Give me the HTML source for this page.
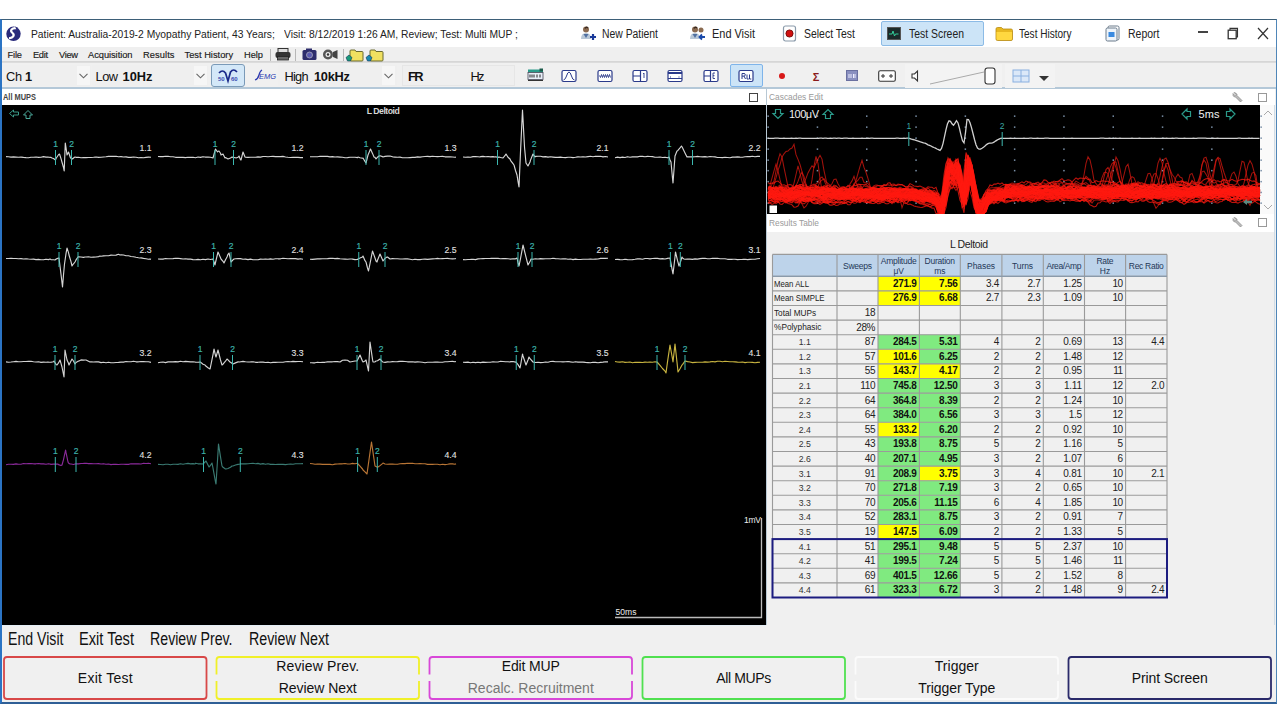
<!DOCTYPE html><html><head><meta charset="utf-8"><title>MUP</title><style>
*{box-sizing:border-box}
body{margin:0;width:1280px;height:720px;background:#fff;position:relative;overflow:hidden;font-family:"Liberation Sans",sans-serif;color:#000}
.a{position:absolute}
.t{position:absolute;white-space:nowrap;line-height:1}
svg{position:absolute;overflow:visible}
</style></head><body>
<div class="a" style="left:0px;top:19px;width:1277px;height:685px;background:#f0f0f0;border-top:1px solid #3d5f78;border-left:2px solid #2b74c4;border-right:1px solid #4f86b8;border-bottom:2px solid #2f5f96"></div>
<div class="a" style="left:2px;top:20px;width:1274px;height:27px;background:#fff"></div>
<svg style="left:5px;top:25px" width="17" height="17" viewBox="0 0 17 17">
<circle cx="8.5" cy="8.8" r="7.2" fill="#2a2b7c"/>
<path d="M11.5 3.2 C 7 2.5, 4.5 5.5, 7.5 8 C 10 10, 8 13.5, 4 13" stroke="#fff" stroke-width="2.2" fill="none"/>
<path d="M10 1.5 l3 1.2 -1.5 2z" fill="#2a2b7c"/>
</svg>
<div class="t" style="left:31.00px;top:28.20px;font-size:11.6px;color:#222;transform:scaleX(0.8882);transform-origin:0 0;">Patient: Australia-2019-2 Myopathy Patient, 43 Years;</div>
<div class="t" style="left:284.00px;top:28.20px;font-size:11.6px;color:#222;transform:scaleX(0.8874);transform-origin:0 0;">Visit: 8/12/2019 1:26 AM, Review; Test: Multi MUP ;</div>
<svg style="left:580px;top:25px" width="17" height="17" viewBox="0 0 17 17">
<circle cx="6" cy="4.5" r="3" fill="#8a6a50"/><path d="M5 3.5 q1-2 3-.5" stroke="#3a2a20" stroke-width="1.5" fill="none"/>
<path d="M1 14 q0-6 5-6 q5 0 5 6z" fill="#b8c8d8"/><path d="M3.5 9 l2.5 4 2.5-4" fill="#5070a0"/>
<path d="M10 12h6M13 9v6" stroke="#1a3a9a" stroke-width="2.2"/>
</svg>
<div class="t" style="left:602.00px;top:27.81px;font-size:12.3px;color:#222;transform:scaleX(0.8444);transform-origin:0 0;">New Patient</div>
<svg style="left:689px;top:25px" width="17" height="17" viewBox="0 0 17 17">
<circle cx="6" cy="4.5" r="3" fill="#8a6a50"/><path d="M5 3.5 q1-2 3-.5" stroke="#3a2a20" stroke-width="1.5" fill="none"/>
<path d="M1 14 q0-6 5-6 q5 0 5 6z" fill="#b8c8d8"/><path d="M3.5 9 l2.5 4 2.5-4" fill="#5070a0"/>
<path d="M16 12h-5M13 9.5l-2.5 2.5 2.5 2.5" stroke="#1a4aaa" stroke-width="1.8" fill="none"/><circle cx="12" cy="5" r="2.5" fill="#8a6a50"/>
</svg>
<div class="t" style="left:712.00px;top:27.81px;font-size:12.3px;color:#222;transform:scaleX(0.8899);transform-origin:0 0;">End Visit</div>
<svg style="left:782px;top:25px" width="16" height="18" viewBox="0 0 16 18">
<rect x="1.5" y="1" width="12" height="15" rx="2" fill="#fff" stroke="#8a9aaa" stroke-width="1.2"/>
<circle cx="7.5" cy="8.5" r="3.6" fill="#d01010" stroke="#600" stroke-width=".8"/></svg>
<div class="t" style="left:804.00px;top:27.81px;font-size:12.3px;color:#222;transform:scaleX(0.8509);transform-origin:0 0;">Select Test</div>
<div class="a" style="left:881px;top:21px;width:103px;height:25px;background:#cce4f7;border:1px solid #8cbbe6;border-radius:2px"></div>
<svg style="left:887px;top:27px" width="14" height="13" viewBox="0 0 14 13">
<rect x="0.5" y="0.5" width="13" height="12" fill="#1a2a2a" stroke="#555"/><path d="M2 7h3l1-3 1.5 5 1-2h3" stroke="#3c9" stroke-width="1" fill="none"/></svg>
<div class="t" style="left:908.50px;top:27.81px;font-size:12.3px;color:#222;transform:scaleX(0.8468);transform-origin:0 0;">Test Screen</div>
<svg style="left:995px;top:26px" width="18" height="15" viewBox="0 0 18 15">
<path d="M1 3 q0-1.5 1.5-1.5h4l1.5 1.5h8 q1.5 0 1.5 1.5v8.5 q0 1.5-1.5 1.5h-13.5 q-1.5 0-1.5-1.5z" fill="#e8b820" stroke="#b88a10" stroke-width=".8"/>
<path d="M1.5 6h15.5v6.5 q0 1.5-1.5 1.5h-12.5 q-1.5 0-1.5-1.5z" fill="#ffd840"/></svg>
<div class="t" style="left:1018.50px;top:27.81px;font-size:12.3px;color:#222;transform:scaleX(0.8172);transform-origin:0 0;">Test History</div>
<svg style="left:1105px;top:25px" width="17" height="17" viewBox="0 0 17 17">
<rect x="3" y="1" width="11" height="14" rx="1.5" fill="#fff" stroke="#6a7a8a" stroke-width="1"/>
<rect x="1" y="3" width="11" height="13" rx="1.5" fill="#eef4fa" stroke="#6a7a8a" stroke-width="1"/>
<rect x="3.5" y="7" width="6" height="5" fill="#3a8ae0"/></svg>
<div class="t" style="left:1127.50px;top:27.81px;font-size:12.3px;color:#222;transform:scaleX(0.8532);transform-origin:0 0;">Report</div>
<div class="a" style="left:1197.5px;top:31px;width:10.5px;height:1.6px;background:#444"></div>
<svg style="left:1227px;top:27px" width="12" height="13" viewBox="0 0 12 13">
<rect x="1.2" y="3.2" width="8" height="8.5" fill="none" stroke="#333" stroke-width="1.3"/>
<path d="M3 3.2v-1.8h7.5v8.5h-1.3" fill="none" stroke="#333" stroke-width="1.1"/></svg>
<svg style="left:1257px;top:27px" width="12" height="13" viewBox="0 0 12 13">
<path d="M1 1L11 12M11 1L1 12" stroke="#333" stroke-width="1.2"/></svg>
<div class="a" style="left:2px;top:47px;width:1274px;height:15px;background:#efefef;border-bottom:1px solid #d6d6d6"></div>
<div class="t" style="left:7.50px;top:50.54px;font-size:9.3px;color:#1a1a1a;letter-spacing:-0.162px;-webkit-text-stroke:0.15px #1a1a1a;">File</div>
<div class="t" style="left:33.00px;top:50.54px;font-size:9.3px;color:#1a1a1a;letter-spacing:-0.342px;-webkit-text-stroke:0.15px #1a1a1a;">Edit</div>
<div class="t" style="left:59.00px;top:50.54px;font-size:9.3px;color:#1a1a1a;letter-spacing:-0.330px;-webkit-text-stroke:0.15px #1a1a1a;">View</div>
<div class="t" style="left:88.00px;top:50.54px;font-size:9.3px;color:#1a1a1a;letter-spacing:-0.048px;-webkit-text-stroke:0.15px #1a1a1a;">Acquisition</div>
<div class="t" style="left:143.00px;top:50.54px;font-size:9.3px;color:#1a1a1a;letter-spacing:0.081px;-webkit-text-stroke:0.15px #1a1a1a;">Results</div>
<div class="t" style="left:184.50px;top:50.54px;font-size:9.3px;color:#1a1a1a;-webkit-text-stroke:0.15px #1a1a1a;">Test History</div>
<div class="t" style="left:244.00px;top:50.54px;font-size:9.3px;color:#1a1a1a;letter-spacing:-0.042px;-webkit-text-stroke:0.15px #1a1a1a;">Help</div>
<div class="a" style="left:269.5px;top:49px;width:1px;height:12px;background:#b8b8b8"></div>
<div class="a" style="left:295px;top:49px;width:1px;height:12px;background:#b8b8b8"></div>
<div class="a" style="left:343px;top:49px;width:1px;height:12px;background:#b8b8b8"></div>
<svg style="left:275px;top:48px" width="16" height="13" viewBox="0 0 16 13">
<rect x="3" y="0.5" width="10" height="4" fill="#ddd" stroke="#333" stroke-width="1"/>
<rect x="0.5" y="4" width="15" height="6" rx="2" fill="#333"/>
<rect x="2.5" y="8.5" width="11" height="3.5" fill="#666" stroke="#222" stroke-width=".8"/></svg>
<svg style="left:302px;top:48px" width="15" height="13" viewBox="0 0 15 13">
<rect x="0.5" y="2" width="14" height="10" rx="1.5" fill="#2c2c6c"/><rect x="4" y="0.5" width="6" height="3" fill="#2c2c6c"/>
<circle cx="7.5" cy="7" r="3" fill="#5a5ab0" stroke="#aab" stroke-width=".8"/></svg>
<svg style="left:322px;top:48px" width="16" height="13" viewBox="0 0 16 13">
<circle cx="6" cy="6.5" r="5" fill="#555"/><circle cx="6" cy="6.5" r="2.5" fill="#eee"/><circle cx="6" cy="6.5" r="1.2" fill="#333"/>
<path d="M11 4l4.5-2v9l-4.5-2z" fill="#444"/></svg>
<svg style="left:346px;top:48px" width="18" height="14" viewBox="0 0 18 14">
<path d="M4 3 q0-1 1-1h4l1 1.5h6 q1 0 1 1v7.5 q0 1-1 1h-11 q-1 0-1-1z" fill="#f0e060" stroke="#6a6a30" stroke-width="1"/>
<path d="M3 7l3 2.5-1.5 3.5h-3l-1.5-3.5z" fill="#1a9a7a" stroke="#135" stroke-width=".6"/></svg>
<svg style="left:366px;top:48px" width="18" height="14" viewBox="0 0 18 14">
<path d="M4 3 q0-1 1-1h4l1 1.5h6 q1 0 1 1v7.5 q0 1-1 1h-11 q-1 0-1-1z" fill="#f0e060" stroke="#6a6a30" stroke-width="1"/>
<path d="M3 7l3 2.5-1.5 3.5h-3l-1.5-3.5z" fill="#1a8ab0" stroke="#135" stroke-width=".6"/></svg>
<div class="a" style="left:2px;top:62px;width:1274px;height:27px;background:#f0f0f0;border-top:1px solid #dcdcdc;border-bottom:2px solid #b4c8d8"></div>
<div class="a" style="left:3px;top:65px;width:88px;height:21px;background:#efefef"></div>
<div class="a" style="left:76.5px;top:66px;width:13px;height:19px;background:#f6f6f6"></div>
<svg style="left:78.5px;top:73px" width="9" height="6" viewBox="0 0 9 6"><path d="M0.5 0.8l4 4 4-4" stroke="#666" fill="none" stroke-width="1.1"/></svg>
<div class="t" style="left:6.00px;top:70.58px;font-size:12.8px;color:#111;letter-spacing:-0.363px;">Ch</div>
<div class="t" style="left:24.88px;top:70.58px;font-size:12.8px;color:#111;font-weight:700;">1</div>
<div class="a" style="left:92px;top:65px;width:116px;height:21px;background:#efefef"></div>
<div class="a" style="left:194px;top:66px;width:13px;height:19px;background:#f6f6f6"></div>
<svg style="left:196px;top:73px" width="9" height="6" viewBox="0 0 9 6"><path d="M0.5 0.8l4 4 4-4" stroke="#666" fill="none" stroke-width="1.1"/></svg>
<div class="t" style="left:95.50px;top:70.58px;font-size:12.8px;color:#111;letter-spacing:-0.491px;">Low</div>
<div class="t" style="left:122.50px;top:70.58px;font-size:12.8px;color:#111;font-weight:700;letter-spacing:0.039px;">10Hz</div>
<div class="a" style="left:211px;top:64px;width:34px;height:23px;background:#d4e8f8;border:1px solid #7a9ab8;border-radius:3px"></div>
<svg style="left:215px;top:68px" width="26" height="15" viewBox="0 0 26 15">
<path d="M4 5 q3.5-4 6.5 0 l2.5 8 l2.5-9 q3-4 6.5 0" stroke="#1a2a8a" stroke-width="1.7" fill="none"/>
<text x="3" y="12.5" font-size="6" font-weight="700" font-family="Liberation Sans" fill="#3a4ab0">50</text><text x="16" y="12.5" font-size="6" font-weight="700" font-family="Liberation Sans" fill="#3a4ab0">60</text></svg>
<svg style="left:254px;top:69px" width="19" height="12" viewBox="0 0 19 12">
<path d="M1 11 q3-1 4-5 q1-4 3-5" stroke="#2a3ab0" stroke-width="1.3" fill="none"/>
<text x="5" y="9.5" font-size="7.5" font-style="italic" font-family="Liberation Sans" fill="#2a3ab0">EMG</text></svg>
<div class="a" style="left:278px;top:65px;width:119px;height:21px;background:#efefef"></div>
<div class="a" style="left:382px;top:66px;width:13px;height:19px;background:#f6f6f6"></div>
<svg style="left:384px;top:73px" width="9" height="6" viewBox="0 0 9 6"><path d="M0.5 0.8l4 4 4-4" stroke="#666" fill="none" stroke-width="1.1"/></svg>
<div class="t" style="left:284.50px;top:70.58px;font-size:12.8px;color:#111;letter-spacing:-0.775px;">High</div>
<div class="t" style="left:314.00px;top:70.58px;font-size:12.8px;color:#111;font-weight:700;letter-spacing:-0.250px;">10kHz</div>
<div class="a" style="left:402px;top:65px;width:113px;height:21px;background:#efefef;border:1px solid #e6e6e6"></div>
<div class="t" style="left:408.00px;top:70.58px;font-size:12.8px;color:#111;font-weight:700;letter-spacing:-1.563px;">FR</div>
<div class="t" style="left:470.50px;top:70.58px;font-size:12.8px;color:#111;letter-spacing:-1.644px;">Hz</div>
<svg style="left:527px;top:68px" width="17" height="14" viewBox="0 0 17 14">
<rect x="1" y="1.5" width="15" height="3" fill="#2a9a8a"/><rect x="12.5" y="0.5" width="3.5" height="3" fill="#1a5a4a"/>
<rect x="1" y="4.5" width="15" height="7" fill="#e8eef8" stroke="#445" stroke-width=".8"/>
<path d="M3 6.5v3M5 6.5v3M7 6.5v3M10 6.5v3M13 6.5v3" stroke="#222" stroke-width="1"/><path d="M1 12.5h15" stroke="#333" stroke-width="1"/></svg>
<svg style="left:561px;top:69px" width="16" height="14" viewBox="0 0 16 14"><rect x="1" y="1.5" width="14" height="11" rx="1.5" fill="#fff" stroke="#2a3a8a" stroke-width="1.2"/><path d="M2.5 11 q2-0.5 3-4 q1.2-4 2.5-4 q1.3 0 2.5 4 q1 4 3 4" stroke="#2a3a8a" fill="none" stroke-width="1"/></svg>
<svg style="left:597px;top:69px" width="16" height="14" viewBox="0 0 16 14"><rect x="1" y="1.5" width="14" height="11" rx="1.5" fill="#fff" stroke="#2a3a8a" stroke-width="1.2"/><path d="M2.5 6.5l1 2 1-3 1 3 1-3 1 3 1-3 1 3 1-3 1 3 1-3 1 3" stroke="#2a3a8a" fill="none" stroke-width=".9"/></svg>
<svg style="left:632px;top:69px" width="16" height="14" viewBox="0 0 16 14"><rect x="1" y="1.5" width="14" height="11" rx="1.5" fill="#fff" stroke="#2a3a8a" stroke-width="1.2"/><path d="M8.5 1.5v11M1 7h7.5" stroke="#2a3a8a" stroke-width="1.2"/><path d="M11 5l1-1v5" stroke="#2a3a8a" stroke-width=".9" fill="none"/></svg>
<svg style="left:667px;top:69px" width="16" height="14" viewBox="0 0 16 14"><rect x="1" y="1.5" width="14" height="11" rx="1.5" fill="#fff" stroke="#2a3a8a" stroke-width="1.2"/><path d="M1 4h14" stroke="#2a3a8a" stroke-width="2"/><path d="M1 9.5h14" stroke="#2a3a8a" stroke-width="1"/><path d="M3.5 7.5v1M12 7.5v1" stroke="#2a3a8a" stroke-width="1"/></svg>
<svg style="left:703px;top:69px" width="16" height="14" viewBox="0 0 16 14"><rect x="1" y="1.5" width="14" height="11" rx="1.5" fill="#fff" stroke="#2a3a8a" stroke-width="1.2"/><path d="M7.5 1.5v11M1 7h6.5" stroke="#2a3a8a" stroke-width="1.2"/><path d="M12 4h-2v5.5h2M10 6.7h1.5" stroke="#2a3a8a" stroke-width=".9" fill="none"/></svg>
<div class="a" style="left:730px;top:64px;width:33px;height:23px;background:#cce4f7;border:1px solid #7eb4ea;border-radius:2px"></div>
<svg style="left:738px;top:69px" width="16" height="14" viewBox="0 0 16 14"><rect x="1" y="1.5" width="14" height="11" rx="1.5" fill="#fff" stroke="#2a3a8a" stroke-width="1.2"/><path d="M4 10V4.5h2q1.3 0 1.3 1.3t-1.3 1.3h-2M6 7.1l1.5 2.9M9 5.5v4.5h1.8M11.5 5.5v4.5h1.8" stroke="#2a3a8a" stroke-width="1" fill="none"/></svg>
<div class="a" style="left:778.5px;top:73px;width:6px;height:6px;background:#d81818;border-radius:50%"></div>
<div class="t" style="left:812.70px;top:71.70px;font-size:11px;color:#8a1a1a;font-weight:700;">Σ</div>
<svg style="left:846px;top:70px" width="12" height="11" viewBox="0 0 12 11"><rect x="0.5" y="0.5" width="11" height="10" fill="#8a90c0" stroke="#6a70a0"/><path d="M3 4v4M5 4v4M7.5 4v4M9 4v4" stroke="#eef" stroke-width="1"/></svg>
<svg style="left:878px;top:70px" width="18" height="12" viewBox="0 0 18 12"><rect x="0.7" y="0.7" width="16.6" height="10.6" rx="1.5" fill="#fff" stroke="#333" stroke-width="1.1"/><path d="M3 6h4M5 4v4M11 6h4M13 4v4" stroke="#333" stroke-width="1"/></svg>
<div class="a" style="left:905px;top:64px;width:97px;height:24px;background:#f3f3f3"></div>
<svg style="left:911px;top:70px" width="8" height="12" viewBox="0 0 8 12"><path d="M1 4h2.5l3-3v10l-3-3h-2.5z" fill="#fff" stroke="#333" stroke-width="1.1"/></svg>
<svg style="left:928px;top:67px" width="70" height="19" viewBox="0 0 70 19"><path d="M2 17L56 5" stroke="#aaa" stroke-width="1"/><rect x="57" y="1" width="10" height="16" rx="2.5" fill="#fff" stroke="#333" stroke-width="1.1"/></svg>
<div class="a" style="left:1005px;top:64px;width:50px;height:24px;background:#f3f3f3"></div>
<svg style="left:1012px;top:69px" width="18" height="14" viewBox="0 0 18 14"><rect x="1" y="1" width="16" height="12" fill="#dbe8f8" stroke="#8ab0e0" stroke-width="1"/><path d="M1 7h16M9 1v12" stroke="#8ab0e0" stroke-width="1"/></svg>
<svg style="left:1039px;top:76px" width="10" height="6" viewBox="0 0 10 6"><path d="M0 0h10l-5 5z" fill="#333"/></svg>
<div class="a" style="left:2px;top:89px;width:764px;height:16px;background:#fff"></div>
<div class="t" style="left:3.30px;top:92.62px;font-size:8.5px;color:#444;font-weight:700;transform:scaleX(0.8734);transform-origin:0 0;">All MUPS</div>
<div class="a" style="left:748.5px;top:92.5px;width:9px;height:9px;background:#fff;border:1px solid #444"></div>
<div class="a" style="left:766px;top:89px;width:1px;height:536px;background:#b8c8d4"></div>
<div class="a" style="left:767px;top:89px;width:508px;height:16px;background:#fff"></div>
<div class="t" style="left:768.60px;top:92.59px;font-size:9px;color:#9a9a9a;transform:scaleX(0.9305);transform-origin:0 0;">Cascades Edit</div>
<svg style="left:1232px;top:91px" width="12" height="12" viewBox="0 0 12 12"><path d="M2 1.5l2 2-1 1-2-2q-0.5 2.5 1.5 3.5l1 0 5 5 1.5-1.5-5-5 0-1q-1-2-3-2z" fill="#bbb" stroke="#888" stroke-width=".7"/></svg>
<div class="a" style="left:1257.5px;top:92.5px;width:9px;height:9px;background:#fff;border:1px solid #999"></div>
<div class="a" style="left:2px;top:105px;width:764px;height:520px;background:#000"></div>
<svg style="left:0;top:0" width="40" height="125" viewBox="0 0 40 125">
<path d="M9.5 113.5l4-3.5v2h5v3h-5v2z" fill="none" stroke="#3a9a88" stroke-width="1"/>
<path d="M28 110.5l4.5 4.5h-2.5v3.5h-4v-3.5h-2.5z" fill="none" stroke="#4aa89a" stroke-width="1"/>
</svg>
<div class="t" style="left:366.80px;top:106.75px;font-size:8.7px;color:#d8d8d8;font-weight:700;letter-spacing:-0.507px;">L Deltoid</div>
<svg style="left:0;top:0" width="1280" height="720" viewBox="0 0 1280 720">
<polyline points="6.0,156.6 8.5,156.8 11.0,157.1 13.5,156.9 16.0,157.1 18.5,157.3 21.0,157.1 23.5,157.4 26.0,157.6 28.5,157.7 31.0,157.2 33.5,157.3 36.0,157.0 38.5,157.4 41.0,157.2 43.5,156.6 46.0,157.1 48.0,157.0 48.5,157.1 51.0,157.4 52.0,158.0 53.5,158.5 55.5,160.0 56.0,158.5 58.5,154.7 59.5,154.0 61.0,158.6 62.5,164.0 63.5,167.5 64.2,171.0 65.3,143.0 66.0,147.5 67.0,155.0 68.5,152.0 70.5,158.0 71.0,158.1 72.5,159.0 73.5,158.0 75.0,157.0 76.0,157.3 78.5,157.3 81.0,157.7 83.5,157.5 86.0,157.6 88.5,157.5 91.0,157.5 93.5,157.3 96.0,157.0 98.5,157.4 101.0,157.2 103.5,157.0 106.0,156.8 108.5,156.4 111.0,156.3 113.5,156.4 116.0,156.2 118.5,156.8 121.0,156.6 123.5,157.0 126.0,156.9 128.5,157.4 131.0,157.4 133.5,157.0 136.0,157.2 138.5,157.8 141.0,157.5 143.5,157.8 146.0,157.4 148.5,157.1 151.0,157.3" fill="none" stroke="#d4d4d4" stroke-width="1.15" stroke-linejoin="round"/>
<line x1="55.5" y1="150" x2="55.5" y2="165" stroke="#3cb8b0" stroke-width="1"/>
<line x1="71.5" y1="150" x2="71.5" y2="165" stroke="#3cb8b0" stroke-width="1"/>
<polyline points="158.0,156.5 160.5,156.6 163.0,156.6 165.5,156.3 168.0,156.3 170.5,156.7 173.0,156.7 175.5,157.3 178.0,157.3 180.5,157.4 183.0,157.4 185.5,157.6 188.0,157.2 190.5,157.4 193.0,157.2 195.5,157.7 198.0,157.0 200.5,157.4 203.0,156.7 205.0,157.0 205.5,157.1 208.0,157.0 210.5,157.3 213.0,158.0 215.5,149.0 217.5,152.0 218.0,151.4 219.0,151.0 220.5,153.2 221.0,155.0 223.0,154.0 225.0,158.0 225.5,157.6 228.0,159.0 230.5,158.0 232.0,157.0 233.0,157.4 235.5,157.8 236.0,158.0 238.0,157.3 239.0,156.0 240.5,159.7 241.0,160.0 243.0,152.0 245.0,157.0 245.5,157.2 248.0,157.4 250.5,157.2 253.0,157.2 255.5,157.3 258.0,156.9 260.5,157.1 263.0,156.5 265.5,156.5 268.0,156.8 270.5,156.5 273.0,156.4 275.5,156.6 278.0,156.5 280.5,156.6 283.0,156.4 285.5,157.0 288.0,157.3 290.5,157.5 293.0,157.4 295.5,157.3 298.0,157.4 300.5,157.6 303.0,157.6" fill="none" stroke="#d4d4d4" stroke-width="1.15" stroke-linejoin="round"/>
<line x1="215" y1="150" x2="215" y2="165" stroke="#3cb8b0" stroke-width="1"/>
<line x1="233.5" y1="150" x2="233.5" y2="165" stroke="#3cb8b0" stroke-width="1"/>
<polyline points="310.0,156.7 312.5,156.8 315.0,156.7 317.5,156.8 320.0,156.3 322.5,156.3 325.0,156.3 327.5,156.4 330.0,156.9 332.5,156.6 335.0,157.0 337.5,156.9 340.0,157.1 342.5,157.3 345.0,157.7 347.5,157.6 350.0,157.2 352.5,157.3 355.0,157.2 357.5,157.6 358.0,157.0 360.0,157.8 362.5,158.2 363.0,158.0 365.0,161.5 366.0,163.0 367.5,157.0 368.0,155.0 370.0,150.2 370.5,149.0 372.5,153.4 374.0,157.0 375.0,157.4 376.0,159.0 377.5,157.2 379.0,156.0 380.0,155.8 382.5,156.6 383.0,157.0 385.0,156.4 387.5,156.1 390.0,156.0 392.5,156.8 393.0,157.0 395.0,157.1 397.5,157.2 400.0,157.1 402.5,157.7 405.0,157.7 407.5,157.8 410.0,157.6 412.5,157.4 415.0,157.4 417.5,156.9 420.0,157.1 422.5,156.8 425.0,156.5 427.5,156.4 430.0,156.6 432.5,156.3 435.0,156.5 437.5,156.6 440.0,156.5 442.5,156.4 445.0,156.8 447.5,156.8 450.0,156.9 452.5,157.0 455.0,157.2 456.0,157.1" fill="none" stroke="#d4d4d4" stroke-width="1.15" stroke-linejoin="round"/>
<line x1="366" y1="150" x2="366" y2="165" stroke="#3cb8b0" stroke-width="1"/>
<line x1="379" y1="150" x2="379" y2="165" stroke="#3cb8b0" stroke-width="1"/>
<polyline points="463.0,157.0 465.5,157.3 468.0,157.1 470.5,157.2 473.0,156.6 475.5,156.5 478.0,156.7 480.0,157.0 480.5,156.6 483.0,156.4 485.5,156.7 488.0,156.5 490.5,156.9 493.0,156.6 495.0,157.0 495.5,156.8 498.0,157.4 499.0,157.0 500.5,157.5 503.0,158.0 505.5,154.9 506.0,154.0 508.0,157.2 510.0,159.0 510.5,160.3 513.0,163.7 514.0,165.0 515.5,170.5 517.0,175.0 518.0,181.4 519.0,187.0 520.5,152.0 522.5,110.0 523.0,119.1 524.5,147.0 525.5,157.7 526.0,163.0 528.0,166.0 530.0,162.0 530.5,160.1 533.0,154.0 535.0,157.0 535.5,156.4 538.0,156.2 540.5,156.3 543.0,156.9 545.5,156.6 548.0,157.1 550.5,156.8 553.0,157.1 555.5,157.4 558.0,157.4 560.5,157.1 563.0,157.5 565.5,157.6 568.0,157.3 570.5,157.2 573.0,157.6 575.5,157.3 578.0,156.9 580.5,157.0 583.0,156.7 585.5,157.0 588.0,156.6 590.5,156.3 593.0,156.7 595.5,156.2 598.0,156.4 600.5,156.3 603.0,156.9 605.5,156.5 608.0,157.0" fill="none" stroke="#d8d8d8" stroke-width="1.15" stroke-linejoin="round"/>
<line x1="497.5" y1="150" x2="497.5" y2="165" stroke="#3cb8b0" stroke-width="1"/>
<line x1="534" y1="150" x2="534" y2="165" stroke="#3cb8b0" stroke-width="1"/>
<polyline points="615.0,157.8 617.5,157.1 620.0,157.6 622.5,157.1 625.0,157.5 627.5,156.7 630.0,157.2 632.5,156.9 635.0,156.9 637.5,156.9 640.0,156.3 642.5,156.4 645.0,156.7 647.5,156.4 650.0,156.5 652.5,156.6 655.0,157.2 657.5,157.3 660.0,157.0 662.5,157.5 665.0,157.2 667.5,157.8 669.0,157.0 670.0,160.0 671.0,162.0 672.5,178.1 673.0,183.0 675.0,156.0 677.0,151.0 677.5,150.8 680.0,147.9 681.5,146.0 682.5,147.8 685.0,153.0 687.0,157.0 687.5,156.8 690.0,156.8 692.5,156.9 695.0,156.7 697.5,156.4 700.0,156.8 702.5,156.9 705.0,156.6 707.5,157.0 710.0,156.5 712.5,156.7 715.0,156.9 717.5,157.5 720.0,157.5 722.5,157.6 725.0,157.3 727.5,157.5 730.0,157.7 732.5,157.1 735.0,157.1 737.5,156.9 740.0,157.1 742.5,157.2 745.0,156.8 747.5,156.6 750.0,156.6 752.5,156.3 755.0,156.8 757.5,156.4 760.0,156.4" fill="none" stroke="#d4d4d4" stroke-width="1.15" stroke-linejoin="round"/>
<line x1="669" y1="150" x2="669" y2="165" stroke="#3cb8b0" stroke-width="1"/>
<line x1="692.5" y1="150" x2="692.5" y2="165" stroke="#3cb8b0" stroke-width="1"/>
<polyline points="6.0,258.5 8.5,258.5 11.0,258.4 13.5,258.5 16.0,258.5 18.5,258.8 21.0,258.6 23.5,259.0 26.0,258.7 28.5,259.0 31.0,259.2 33.5,259.1 36.0,259.6 38.5,259.4 41.0,259.7 43.5,259.8 46.0,259.2 48.5,259.6 50.0,259.0 51.0,259.6 53.5,259.8 55.0,260.0 56.0,259.1 58.5,258.0 59.0,258.0 61.0,274.3 62.5,287.0 63.5,274.9 64.5,264.0 66.0,253.7 67.0,248.0 68.5,252.6 69.0,255.0 71.0,261.7 72.0,266.0 73.5,263.8 75.0,262.0 76.0,259.9 78.0,257.0 78.5,256.7 81.0,257.0 83.5,257.4 85.0,257.0 86.0,257.0 88.5,256.8 91.0,257.3 93.5,257.1 96.0,257.0 98.5,256.6 100.0,256.0 101.0,256.2 103.5,255.9 106.0,255.8 108.5,255.7 111.0,255.1 113.5,255.3 116.0,255.1 118.5,254.3 120.0,255.0 121.0,254.9 123.5,255.0 126.0,255.7 128.5,255.8 131.0,256.5 133.5,256.7 136.0,257.3 138.5,257.8 140.0,258.0 141.0,257.9 143.5,258.4 146.0,258.8 148.5,259.2 150.0,259.0 151.0,259.4" fill="none" stroke="#d4d4d4" stroke-width="1.15" stroke-linejoin="round"/>
<line x1="59" y1="252" x2="59" y2="267" stroke="#3cb8b0" stroke-width="1"/>
<line x1="78" y1="252" x2="78" y2="267" stroke="#3cb8b0" stroke-width="1"/>
<polyline points="158.0,259.0 160.5,259.1 163.0,259.1 165.5,258.5 168.0,258.7 170.5,258.7 173.0,258.6 175.5,258.3 178.0,258.3 180.5,258.6 183.0,259.0 185.5,258.8 188.0,259.1 190.5,259.1 193.0,259.6 195.5,259.7 198.0,259.4 200.5,259.8 203.0,259.2 205.5,259.6 208.0,259.0 210.5,259.5 213.0,259.0 215.0,265.0 215.5,262.5 218.0,252.0 220.5,257.7 221.0,259.0 223.0,261.3 224.0,263.0 225.5,259.8 227.0,257.0 228.0,254.3 229.0,253.0 230.5,259.3 231.0,262.0 233.0,259.8 234.0,259.0 235.5,258.7 238.0,258.6 240.5,258.6 243.0,259.3 245.5,259.1 248.0,259.6 250.5,259.1 253.0,259.7 255.5,259.7 258.0,259.8 260.5,259.1 263.0,259.3 265.5,259.0 268.0,259.3 270.5,258.9 273.0,259.2 275.5,258.7 278.0,258.8 280.5,258.8 283.0,258.3 285.5,258.5 288.0,258.8 290.5,258.6 293.0,258.6 295.5,258.6 298.0,259.1 300.5,258.8 303.0,259.3" fill="none" stroke="#d4d4d4" stroke-width="1.15" stroke-linejoin="round"/>
<line x1="213.5" y1="252" x2="213.5" y2="267" stroke="#3cb8b0" stroke-width="1"/>
<line x1="231" y1="252" x2="231" y2="267" stroke="#3cb8b0" stroke-width="1"/>
<polyline points="310.0,259.2 312.5,259.4 315.0,259.1 317.5,258.9 320.0,258.9 322.5,258.8 325.0,258.7 327.5,258.6 330.0,258.4 332.5,258.3 335.0,258.6 337.5,258.4 340.0,258.8 342.5,259.0 345.0,259.1 347.5,259.3 350.0,259.0 352.0,259.0 352.5,259.1 355.0,259.6 357.5,259.5 358.0,259.0 360.0,258.1 362.5,256.9 363.0,256.0 365.0,260.7 366.0,262.0 367.5,268.0 368.5,271.0 370.0,263.6 372.5,251.0 375.0,258.0 376.0,261.0 377.0,262.0 377.5,260.2 380.0,254.0 382.5,259.8 383.0,261.0 385.0,258.4 387.0,257.0 387.5,257.0 390.0,259.0 392.5,258.6 395.0,258.7 397.5,258.7 400.0,259.0 402.5,259.0 405.0,258.9 407.5,258.9 410.0,259.3 412.5,259.7 415.0,259.2 417.5,259.6 420.0,259.6 422.5,259.2 425.0,259.1 427.5,259.4 430.0,259.1 432.5,258.9 435.0,258.8 437.5,258.4 440.0,258.7 442.5,258.6 445.0,258.5 447.5,258.4 450.0,258.8 452.5,258.9 455.0,258.8 456.0,258.5" fill="none" stroke="#d4d4d4" stroke-width="1.15" stroke-linejoin="round"/>
<line x1="358.75" y1="252" x2="358.75" y2="267" stroke="#3cb8b0" stroke-width="1"/>
<line x1="385" y1="252" x2="385" y2="267" stroke="#3cb8b0" stroke-width="1"/>
<polyline points="463.0,259.6 465.5,259.7 468.0,259.5 470.5,259.4 473.0,259.2 475.5,259.6 478.0,258.9 480.5,258.7 483.0,258.6 485.5,258.5 488.0,258.5 490.5,258.4 493.0,258.2 495.5,258.4 498.0,258.4 500.5,258.7 503.0,258.5 505.5,258.6 508.0,258.8 510.0,259.0 510.5,259.1 513.0,258.8 515.5,258.8 517.0,258.0 518.0,262.7 519.0,266.0 520.5,258.6 523.0,245.0 525.5,255.2 528.0,265.0 530.5,260.4 531.0,259.0 533.0,259.3 534.0,259.0 535.5,258.9 538.0,259.0 540.5,258.6 543.0,258.9 545.5,258.8 548.0,258.7 550.5,258.8 553.0,258.3 555.5,258.6 558.0,258.8 560.5,259.0 563.0,258.9 565.5,258.8 568.0,259.3 570.5,259.0 573.0,259.6 575.5,259.1 578.0,259.5 580.5,259.5 583.0,259.2 585.5,259.3 588.0,259.2 590.5,259.0 593.0,259.2 595.5,259.1 598.0,259.0 600.5,258.4 603.0,258.2 605.5,258.4 608.0,258.2" fill="none" stroke="#d4d4d4" stroke-width="1.15" stroke-linejoin="round"/>
<line x1="518" y1="252" x2="518" y2="267" stroke="#3cb8b0" stroke-width="1"/>
<line x1="532" y1="252" x2="532" y2="267" stroke="#3cb8b0" stroke-width="1"/>
<polyline points="615.0,259.5 617.5,259.4 620.0,259.6 622.5,259.7 625.0,259.3 627.5,259.6 630.0,259.7 632.5,259.6 635.0,259.3 637.5,258.9 640.0,258.9 642.5,259.2 645.0,258.5 647.5,258.5 650.0,258.9 652.5,258.5 655.0,258.3 657.5,258.4 660.0,258.9 662.5,258.6 665.0,259.0 667.5,258.4 670.0,258.0 672.5,271.7 673.0,274.0 675.0,257.0 675.5,252.0 677.5,260.4 679.0,266.0 680.0,263.2 682.0,257.0 682.5,258.1 684.0,259.0 685.0,259.2 687.5,259.1 690.0,259.1 692.5,259.4 695.0,258.9 697.5,259.1 700.0,258.6 702.5,258.4 705.0,258.3 707.5,258.7 710.0,258.8 712.5,258.3 715.0,258.4 717.5,258.3 720.0,258.8 722.5,258.7 725.0,258.8 727.5,259.3 730.0,259.3 732.5,259.3 735.0,259.2 737.5,259.6 740.0,259.5 742.5,259.4 745.0,259.2 747.5,259.6 750.0,259.4 752.5,259.2 755.0,259.2 757.5,258.8 760.0,258.5" fill="none" stroke="#d4d4d4" stroke-width="1.15" stroke-linejoin="round"/>
<line x1="670.4" y1="252" x2="670.4" y2="267" stroke="#3cb8b0" stroke-width="1"/>
<line x1="680.3" y1="252" x2="680.3" y2="267" stroke="#3cb8b0" stroke-width="1"/>
<polyline points="6.0,361.9 8.5,362.2 11.0,362.0 13.5,361.7 16.0,361.4 18.5,361.8 21.0,361.7 23.5,361.5 26.0,361.5 28.5,361.4 31.0,361.3 33.5,361.7 36.0,362.0 38.5,361.8 41.0,362.4 43.5,362.1 46.0,362.2 48.0,362.0 48.5,362.1 51.0,362.3 53.5,361.7 54.0,361.0 56.0,364.4 57.0,365.0 58.5,362.9 60.0,360.0 61.0,363.4 62.0,367.0 63.5,374.5 64.0,377.0 65.0,350.0 66.0,355.0 67.0,360.0 68.5,363.3 69.0,365.0 71.0,361.0 72.0,359.0 73.5,361.0 75.0,364.0 76.0,362.5 78.5,361.1 79.0,361.0 81.0,359.9 83.5,360.1 85.0,360.0 86.0,360.0 88.5,361.2 90.0,362.0 91.0,361.7 93.5,362.0 96.0,361.9 98.5,361.9 101.0,362.6 103.5,362.3 106.0,362.7 108.5,362.3 111.0,362.8 113.5,362.7 116.0,362.5 118.5,362.4 121.0,362.1 123.5,362.1 126.0,361.5 128.5,361.7 131.0,361.8 133.5,361.3 136.0,361.8 138.5,361.8 141.0,361.5 143.5,361.6 146.0,361.7 148.5,361.8 151.0,362.4" fill="none" stroke="#d4d4d4" stroke-width="1.15" stroke-linejoin="round"/>
<line x1="55" y1="355" x2="55" y2="370" stroke="#3cb8b0" stroke-width="1"/>
<line x1="75" y1="355" x2="75" y2="370" stroke="#3cb8b0" stroke-width="1"/>
<polyline points="158.0,362.8 160.5,362.2 163.0,362.0 165.5,362.6 168.0,361.9 170.5,361.7 173.0,361.9 175.5,361.6 178.0,361.9 180.5,361.3 183.0,361.8 185.5,361.4 188.0,361.6 190.5,361.9 193.0,361.9 195.0,362.0 195.5,362.2 198.0,362.2 200.0,362.0 200.5,362.1 203.0,364.3 205.0,365.0 205.5,365.8 208.0,367.7 210.0,369.0 210.5,366.8 213.0,354.7 214.0,349.0 215.5,355.5 216.0,357.0 218.0,350.0 220.5,360.0 222.0,365.0 223.0,364.2 225.5,361.2 227.0,359.0 228.0,359.9 230.0,362.0 230.5,362.2 233.0,364.0 235.5,362.9 238.0,361.9 240.0,362.0 240.5,361.8 243.0,361.4 245.5,361.8 248.0,362.0 250.5,361.9 253.0,361.7 255.5,362.3 258.0,362.3 260.5,362.1 263.0,362.1 265.5,362.5 268.0,362.2 270.5,362.8 273.0,362.4 275.5,362.4 278.0,362.2 280.5,362.2 283.0,362.3 285.5,361.7 288.0,361.6 290.5,361.7 293.0,361.4 295.5,361.6 298.0,361.5 300.5,361.5 303.0,361.7" fill="none" stroke="#d4d4d4" stroke-width="1.15" stroke-linejoin="round"/>
<line x1="200" y1="355" x2="200" y2="370" stroke="#3cb8b0" stroke-width="1"/>
<line x1="232.5" y1="355" x2="232.5" y2="370" stroke="#3cb8b0" stroke-width="1"/>
<polyline points="310.0,362.7 312.5,362.8 315.0,362.8 317.5,362.2 320.0,362.5 322.5,362.3 325.0,362.3 327.5,361.9 330.0,361.8 332.5,361.8 335.0,361.6 337.5,361.6 340.0,362.0 342.5,360.2 345.0,360.0 347.5,360.2 350.0,362.0 352.5,361.5 355.0,361.0 357.0,361.0 357.5,360.0 360.0,355.0 362.5,361.2 363.0,362.0 365.0,360.9 366.0,360.0 367.5,366.7 368.5,371.0 370.0,342.0 372.5,359.4 373.0,362.0 375.0,361.9 376.0,361.0 377.5,360.8 380.0,359.0 382.5,361.8 383.0,362.0 385.0,362.4 387.5,361.9 390.0,362.0 392.5,361.6 395.0,361.7 397.5,361.6 400.0,361.4 402.5,361.2 405.0,361.5 407.5,361.8 410.0,361.8 412.5,361.8 415.0,362.1 417.5,361.9 420.0,362.0 422.5,362.2 425.0,362.7 427.5,362.3 430.0,362.2 432.5,362.2 435.0,362.1 437.5,362.1 440.0,362.2 442.5,362.3 445.0,361.8 447.5,361.7 450.0,361.5 452.5,361.4 455.0,361.7 456.0,361.5" fill="none" stroke="#d4d4d4" stroke-width="1.15" stroke-linejoin="round"/>
<line x1="357" y1="355" x2="357" y2="370" stroke="#3cb8b0" stroke-width="1"/>
<line x1="381" y1="355" x2="381" y2="370" stroke="#3cb8b0" stroke-width="1"/>
<polyline points="463.0,362.2 465.5,362.4 468.0,362.1 470.5,362.7 473.0,362.2 475.5,362.6 478.0,362.2 480.5,362.6 483.0,362.1 485.5,362.4 488.0,362.3 490.5,362.2 493.0,361.8 495.5,362.0 498.0,362.0 500.5,361.3 503.0,361.5 505.5,361.8 508.0,361.7 510.0,362.0 510.5,361.6 513.0,361.5 515.5,362.1 516.0,362.0 518.0,364.6 520.0,368.0 520.5,365.5 522.5,354.0 523.0,356.0 525.5,363.5 526.0,365.0 528.0,360.0 529.0,357.0 530.5,359.2 533.0,362.0 535.5,362.5 538.0,362.3 540.5,362.6 543.0,362.5 545.5,362.0 548.0,362.2 550.5,361.5 553.0,361.4 555.5,361.7 558.0,361.7 560.5,361.7 563.0,361.9 565.5,361.8 568.0,361.5 570.5,361.9 573.0,362.2 575.5,361.7 578.0,362.1 580.5,362.0 583.0,362.1 585.5,362.4 588.0,362.6 590.5,362.8 593.0,362.2 595.5,362.4 598.0,362.7 600.5,362.4 603.0,362.1 605.5,361.7 608.0,361.9" fill="none" stroke="#d4d4d4" stroke-width="1.15" stroke-linejoin="round"/>
<line x1="516.25" y1="355" x2="516.25" y2="370" stroke="#3cb8b0" stroke-width="1"/>
<line x1="534.25" y1="355" x2="534.25" y2="370" stroke="#3cb8b0" stroke-width="1"/>
<polyline points="615.0,361.5 617.5,362.0 620.0,362.1 622.5,361.8 625.0,362.4 627.5,362.3 630.0,362.0 632.5,362.7 635.0,362.3 637.5,362.4 640.0,362.4 642.5,362.5 645.0,362.1 647.5,362.3 650.0,362.0 652.5,362.2 655.0,361.8 657.0,362.0 657.5,362.5 660.0,365.3 662.5,368.5 665.0,371.1 666.0,373.0 667.5,361.9 670.0,345.0 672.5,358.8 673.0,362.0 675.0,344.0 677.5,366.9 678.0,372.0 680.0,368.8 682.0,365.0 682.5,364.6 685.0,361.0 687.5,361.6 690.0,362.0 692.5,362.6 695.0,362.4 697.5,362.2 700.0,362.2 702.5,362.3 705.0,361.9 707.5,362.1 710.0,361.9 712.5,361.5 715.0,361.9 717.5,361.2 720.0,361.3 722.5,361.7 725.0,361.3 727.5,361.5 730.0,361.7 732.5,361.7 735.0,361.9 737.5,362.1 740.0,362.2 742.5,362.0 745.0,362.6 747.5,362.3 750.0,362.2 752.5,362.4 755.0,362.7 757.5,362.4 760.0,362.2" fill="none" stroke="#c8b440" stroke-width="1.15" stroke-linejoin="round"/>
<line x1="657" y1="355" x2="657" y2="370" stroke="#3cb8b0" stroke-width="1"/>
<line x1="685" y1="355" x2="685" y2="370" stroke="#3cb8b0" stroke-width="1"/>
<polyline points="6.0,464.7 8.5,464.3 11.0,464.2 13.5,464.4 16.0,463.9 18.5,464.3 21.0,464.2 23.5,463.5 26.0,463.8 28.5,463.6 31.0,463.6 33.5,463.8 36.0,463.8 38.5,463.5 41.0,463.9 43.5,463.9 46.0,464.2 48.5,463.7 50.0,464.0 51.0,464.4 53.5,464.1 56.0,464.1 58.0,464.0 58.5,464.6 61.0,465.5 62.0,465.0 63.5,459.6 65.6,450.0 66.0,452.4 68.0,462.0 68.5,463.1 70.0,464.0 71.0,464.0 73.5,464.5 75.0,464.0 76.0,463.9 78.5,463.9 81.0,463.5 83.5,463.4 86.0,463.2 88.5,463.6 91.0,463.5 93.5,463.7 96.0,463.8 98.5,463.6 101.0,464.0 103.5,463.7 106.0,464.3 108.5,464.0 111.0,464.6 113.5,464.3 116.0,464.4 118.5,464.5 121.0,464.2 123.5,464.2 126.0,464.4 128.5,464.4 131.0,463.8 133.5,463.9 136.0,463.8 138.5,463.9 141.0,464.0 143.5,463.3 146.0,463.5 148.5,463.2 151.0,463.7" fill="none" stroke="#8a2a9a" stroke-width="1.15" stroke-linejoin="round"/>
<line x1="55.3" y1="457" x2="55.3" y2="472" stroke="#3cb8b0" stroke-width="1"/>
<line x1="76" y1="457" x2="76" y2="472" stroke="#3cb8b0" stroke-width="1"/>
<polyline points="158.0,464.4 160.5,464.5 163.0,464.8 165.5,464.3 168.0,464.2 170.5,464.7 173.0,464.3 175.5,464.2 178.0,464.4 180.5,463.8 183.0,464.2 185.5,463.8 188.0,463.4 190.5,463.9 193.0,463.6 195.0,464.0 195.5,463.2 198.0,463.8 200.5,463.8 203.0,464.0 205.5,461.5 206.0,461.0 208.0,465.0 209.0,467.0 210.5,465.4 212.0,463.0 213.0,468.1 215.5,482.0 216.0,484.0 218.0,452.5 218.5,444.0 220.5,456.9 222.0,466.0 223.0,467.3 225.5,469.0 226.0,469.0 228.0,468.5 230.5,467.3 232.0,466.0 233.0,466.0 235.5,465.0 238.0,464.4 240.0,464.0 240.5,463.7 243.0,463.9 245.5,463.9 248.0,463.7 250.5,463.5 253.0,463.3 255.5,463.7 258.0,463.4 260.5,464.1 263.0,463.6 265.5,464.3 268.0,463.8 270.5,464.4 273.0,464.2 275.5,464.5 278.0,464.4 280.5,464.4 283.0,464.4 285.5,464.6 288.0,464.2 290.5,464.1 293.0,464.3 295.5,463.7 298.0,463.7 300.5,463.7 303.0,463.6" fill="none" stroke="#3a7a72" stroke-width="1.15" stroke-linejoin="round"/>
<line x1="203.5" y1="457" x2="203.5" y2="472" stroke="#3cb8b0" stroke-width="1"/>
<line x1="240.3" y1="457" x2="240.3" y2="472" stroke="#3cb8b0" stroke-width="1"/>
<polyline points="310.0,463.5 312.5,463.7 315.0,464.2 317.5,464.0 320.0,464.1 322.5,464.4 325.0,464.4 327.5,464.3 330.0,464.4 332.5,464.7 335.0,464.1 337.5,464.0 340.0,463.8 342.5,463.8 345.0,463.5 347.5,464.0 350.0,464.0 352.5,463.4 355.0,463.8 357.5,463.2 358.0,464.0 360.0,466.2 362.5,469.0 363.0,470.0 365.0,471.9 367.0,474.0 367.5,470.4 370.0,452.5 371.5,442.0 372.5,448.8 375.0,466.0 377.5,467.3 378.0,467.0 380.0,465.6 382.5,463.6 383.0,463.0 385.0,464.0 387.5,464.2 390.0,464.0 392.5,464.1 395.0,464.2 397.5,464.3 400.0,463.8 402.5,463.5 405.0,463.6 407.5,463.3 410.0,463.4 412.5,463.2 415.0,463.7 417.5,463.8 420.0,463.6 422.5,463.7 425.0,463.7 427.5,464.4 430.0,464.4 432.5,464.4 435.0,464.2 437.5,464.2 440.0,464.7 442.5,464.3 445.0,464.6 447.5,464.3 450.0,463.9 452.5,463.9 455.0,464.3 456.0,463.8" fill="none" stroke="#b87535" stroke-width="1.15" stroke-linejoin="round"/>
<line x1="357.6" y1="457" x2="357.6" y2="472" stroke="#3cb8b0" stroke-width="1"/>
<line x1="377.3" y1="457" x2="377.3" y2="472" stroke="#3cb8b0" stroke-width="1"/>
</svg>
<div class="t" style="left:53.14px;top:140.12px;font-size:8.5px;color:#3cb0a8;-webkit-text-stroke:0.2px #3cb0a8;">1</div>
<div class="t" style="left:69.14px;top:140.12px;font-size:8.5px;color:#3cb0a8;-webkit-text-stroke:0.2px #3cb0a8;">2</div>
<div class="t" style="left:139.50px;top:143.85px;font-size:8.7px;color:#e0e0e0;letter-spacing:-0.047px;-webkit-text-stroke:0.1px #e0e0e0;">1.1</div>
<div class="t" style="left:212.64px;top:140.12px;font-size:8.5px;color:#3cb0a8;-webkit-text-stroke:0.2px #3cb0a8;">1</div>
<div class="t" style="left:231.14px;top:140.12px;font-size:8.5px;color:#3cb0a8;-webkit-text-stroke:0.2px #3cb0a8;">2</div>
<div class="t" style="left:291.50px;top:143.85px;font-size:8.7px;color:#e0e0e0;letter-spacing:-0.047px;-webkit-text-stroke:0.1px #e0e0e0;">1.2</div>
<div class="t" style="left:363.64px;top:140.12px;font-size:8.5px;color:#3cb0a8;-webkit-text-stroke:0.2px #3cb0a8;">1</div>
<div class="t" style="left:376.64px;top:140.12px;font-size:8.5px;color:#3cb0a8;-webkit-text-stroke:0.2px #3cb0a8;">2</div>
<div class="t" style="left:444.50px;top:143.85px;font-size:8.7px;color:#e0e0e0;letter-spacing:-0.047px;-webkit-text-stroke:0.1px #e0e0e0;">1.3</div>
<div class="t" style="left:495.14px;top:140.12px;font-size:8.5px;color:#3cb0a8;-webkit-text-stroke:0.2px #3cb0a8;">1</div>
<div class="t" style="left:531.64px;top:140.12px;font-size:8.5px;color:#3cb0a8;-webkit-text-stroke:0.2px #3cb0a8;">2</div>
<div class="t" style="left:596.50px;top:143.85px;font-size:8.7px;color:#e0e0e0;letter-spacing:-0.047px;-webkit-text-stroke:0.1px #e0e0e0;">2.1</div>
<div class="t" style="left:666.64px;top:140.12px;font-size:8.5px;color:#3cb0a8;-webkit-text-stroke:0.2px #3cb0a8;">1</div>
<div class="t" style="left:690.14px;top:140.12px;font-size:8.5px;color:#3cb0a8;-webkit-text-stroke:0.2px #3cb0a8;">2</div>
<div class="t" style="left:748.50px;top:143.85px;font-size:8.7px;color:#e0e0e0;letter-spacing:-0.047px;-webkit-text-stroke:0.1px #e0e0e0;">2.2</div>
<div class="t" style="left:56.64px;top:242.12px;font-size:8.5px;color:#3cb0a8;-webkit-text-stroke:0.2px #3cb0a8;">1</div>
<div class="t" style="left:75.64px;top:242.12px;font-size:8.5px;color:#3cb0a8;-webkit-text-stroke:0.2px #3cb0a8;">2</div>
<div class="t" style="left:139.50px;top:245.85px;font-size:8.7px;color:#e0e0e0;letter-spacing:-0.047px;-webkit-text-stroke:0.1px #e0e0e0;">2.3</div>
<div class="t" style="left:211.14px;top:242.12px;font-size:8.5px;color:#3cb0a8;-webkit-text-stroke:0.2px #3cb0a8;">1</div>
<div class="t" style="left:228.64px;top:242.12px;font-size:8.5px;color:#3cb0a8;-webkit-text-stroke:0.2px #3cb0a8;">2</div>
<div class="t" style="left:291.50px;top:245.85px;font-size:8.7px;color:#e0e0e0;letter-spacing:-0.047px;-webkit-text-stroke:0.1px #e0e0e0;">2.4</div>
<div class="t" style="left:356.39px;top:242.12px;font-size:8.5px;color:#3cb0a8;-webkit-text-stroke:0.2px #3cb0a8;">1</div>
<div class="t" style="left:382.64px;top:242.12px;font-size:8.5px;color:#3cb0a8;-webkit-text-stroke:0.2px #3cb0a8;">2</div>
<div class="t" style="left:444.50px;top:245.85px;font-size:8.7px;color:#e0e0e0;letter-spacing:-0.047px;-webkit-text-stroke:0.1px #e0e0e0;">2.5</div>
<div class="t" style="left:515.64px;top:242.12px;font-size:8.5px;color:#3cb0a8;-webkit-text-stroke:0.2px #3cb0a8;">1</div>
<div class="t" style="left:529.64px;top:242.12px;font-size:8.5px;color:#3cb0a8;-webkit-text-stroke:0.2px #3cb0a8;">2</div>
<div class="t" style="left:596.50px;top:245.85px;font-size:8.7px;color:#e0e0e0;letter-spacing:-0.047px;-webkit-text-stroke:0.1px #e0e0e0;">2.6</div>
<div class="t" style="left:668.04px;top:242.12px;font-size:8.5px;color:#3cb0a8;-webkit-text-stroke:0.2px #3cb0a8;">1</div>
<div class="t" style="left:677.94px;top:242.12px;font-size:8.5px;color:#3cb0a8;-webkit-text-stroke:0.2px #3cb0a8;">2</div>
<div class="t" style="left:748.50px;top:245.85px;font-size:8.7px;color:#e0e0e0;letter-spacing:-0.047px;-webkit-text-stroke:0.1px #e0e0e0;">3.1</div>
<div class="t" style="left:52.64px;top:345.12px;font-size:8.5px;color:#3cb0a8;-webkit-text-stroke:0.2px #3cb0a8;">1</div>
<div class="t" style="left:72.64px;top:345.12px;font-size:8.5px;color:#3cb0a8;-webkit-text-stroke:0.2px #3cb0a8;">2</div>
<div class="t" style="left:139.50px;top:348.85px;font-size:8.7px;color:#e0e0e0;letter-spacing:-0.047px;-webkit-text-stroke:0.1px #e0e0e0;">3.2</div>
<div class="t" style="left:197.64px;top:345.12px;font-size:8.5px;color:#3cb0a8;-webkit-text-stroke:0.2px #3cb0a8;">1</div>
<div class="t" style="left:230.14px;top:345.12px;font-size:8.5px;color:#3cb0a8;-webkit-text-stroke:0.2px #3cb0a8;">2</div>
<div class="t" style="left:291.50px;top:348.85px;font-size:8.7px;color:#e0e0e0;letter-spacing:-0.047px;-webkit-text-stroke:0.1px #e0e0e0;">3.3</div>
<div class="t" style="left:354.64px;top:345.12px;font-size:8.5px;color:#3cb0a8;-webkit-text-stroke:0.2px #3cb0a8;">1</div>
<div class="t" style="left:378.64px;top:345.12px;font-size:8.5px;color:#3cb0a8;-webkit-text-stroke:0.2px #3cb0a8;">2</div>
<div class="t" style="left:444.50px;top:348.85px;font-size:8.7px;color:#e0e0e0;letter-spacing:-0.047px;-webkit-text-stroke:0.1px #e0e0e0;">3.4</div>
<div class="t" style="left:513.89px;top:345.12px;font-size:8.5px;color:#3cb0a8;-webkit-text-stroke:0.2px #3cb0a8;">1</div>
<div class="t" style="left:531.89px;top:345.12px;font-size:8.5px;color:#3cb0a8;-webkit-text-stroke:0.2px #3cb0a8;">2</div>
<div class="t" style="left:596.50px;top:348.85px;font-size:8.7px;color:#e0e0e0;letter-spacing:-0.047px;-webkit-text-stroke:0.1px #e0e0e0;">3.5</div>
<div class="t" style="left:654.64px;top:345.12px;font-size:8.5px;color:#3cb0a8;-webkit-text-stroke:0.2px #3cb0a8;">1</div>
<div class="t" style="left:682.64px;top:345.12px;font-size:8.5px;color:#3cb0a8;-webkit-text-stroke:0.2px #3cb0a8;">2</div>
<div class="t" style="left:748.50px;top:348.85px;font-size:8.7px;color:#e0e0e0;letter-spacing:-0.047px;-webkit-text-stroke:0.1px #e0e0e0;">4.1</div>
<div class="t" style="left:52.94px;top:447.12px;font-size:8.5px;color:#3cb0a8;-webkit-text-stroke:0.2px #3cb0a8;">1</div>
<div class="t" style="left:73.64px;top:447.12px;font-size:8.5px;color:#3cb0a8;-webkit-text-stroke:0.2px #3cb0a8;">2</div>
<div class="t" style="left:139.50px;top:450.85px;font-size:8.7px;color:#e0e0e0;letter-spacing:-0.047px;-webkit-text-stroke:0.1px #e0e0e0;">4.2</div>
<div class="t" style="left:201.14px;top:447.12px;font-size:8.5px;color:#3cb0a8;-webkit-text-stroke:0.2px #3cb0a8;">1</div>
<div class="t" style="left:237.94px;top:447.12px;font-size:8.5px;color:#3cb0a8;-webkit-text-stroke:0.2px #3cb0a8;">2</div>
<div class="t" style="left:291.50px;top:450.85px;font-size:8.7px;color:#e0e0e0;letter-spacing:-0.047px;-webkit-text-stroke:0.1px #e0e0e0;">4.3</div>
<div class="t" style="left:355.24px;top:447.12px;font-size:8.5px;color:#3cb0a8;-webkit-text-stroke:0.2px #3cb0a8;">1</div>
<div class="t" style="left:374.94px;top:447.12px;font-size:8.5px;color:#3cb0a8;-webkit-text-stroke:0.2px #3cb0a8;">2</div>
<div class="t" style="left:444.50px;top:450.85px;font-size:8.7px;color:#e0e0e0;letter-spacing:-0.047px;-webkit-text-stroke:0.1px #e0e0e0;">4.4</div>
<svg style="left:0;top:0" width="1280" height="720" viewBox="0 0 1280 720"><path d="M615 617.5H761.5V518" fill="none" stroke="#bbb" stroke-width="1.3"/></svg>
<div class="t" style="left:744.00px;top:516.32px;font-size:8.5px;color:#eee;letter-spacing:-0.239px;">1mV</div>
<div class="t" style="left:615.50px;top:607.82px;font-size:8.5px;color:#eee;letter-spacing:0.071px;">50ms</div>
<div class="a" style="left:767px;top:105px;width:493px;height:109px;background:#000"></div>
<div class="a" style="left:1260px;top:105px;width:15px;height:109px;background:#fafafa"></div>
<svg style="left:1262px;top:109px" width="12" height="8" viewBox="0 0 12 8"><path d="M2 6l4-4 4 4" stroke="#aaa" fill="none" stroke-width="1"/></svg>
<svg style="left:1262px;top:203px" width="12" height="8" viewBox="0 0 12 8"><path d="M2 2l4 4 4-4" stroke="#aaa" fill="none" stroke-width="1"/></svg>
<svg style="left:0;top:0" width="1280" height="720" viewBox="0 0 1280 720"><g fill="#7a90a8">
<rect x="767.4" y="115.4" width="1.5" height="1.5"/>
<rect x="767.4" y="126.4" width="1.5" height="1.5"/>
<rect x="767.4" y="148.4" width="1.5" height="1.5"/>
<rect x="767.4" y="159.4" width="1.5" height="1.5"/>
<rect x="767.4" y="169.9" width="1.5" height="1.5"/>
<rect x="767.4" y="180.9" width="1.5" height="1.5"/>
<rect x="767.4" y="191.7" width="1.5" height="1.5"/>
<rect x="767.4" y="202.4" width="1.5" height="1.5"/>
<rect x="767.4" y="137.4" width="1.5" height="1.5"/>
<rect x="816.7" y="115.4" width="1.5" height="1.5"/>
<rect x="816.7" y="126.4" width="1.5" height="1.5"/>
<rect x="816.7" y="148.4" width="1.5" height="1.5"/>
<rect x="816.7" y="159.4" width="1.5" height="1.5"/>
<rect x="816.7" y="169.9" width="1.5" height="1.5"/>
<rect x="816.7" y="180.9" width="1.5" height="1.5"/>
<rect x="816.7" y="191.7" width="1.5" height="1.5"/>
<rect x="816.7" y="202.4" width="1.5" height="1.5"/>
<rect x="816.7" y="137.4" width="1.5" height="1.5"/>
<rect x="866.0" y="115.4" width="1.5" height="1.5"/>
<rect x="866.0" y="126.4" width="1.5" height="1.5"/>
<rect x="866.0" y="148.4" width="1.5" height="1.5"/>
<rect x="866.0" y="159.4" width="1.5" height="1.5"/>
<rect x="866.0" y="169.9" width="1.5" height="1.5"/>
<rect x="866.0" y="180.9" width="1.5" height="1.5"/>
<rect x="866.0" y="191.7" width="1.5" height="1.5"/>
<rect x="866.0" y="202.4" width="1.5" height="1.5"/>
<rect x="866.0" y="137.4" width="1.5" height="1.5"/>
<rect x="915.3" y="115.4" width="1.5" height="1.5"/>
<rect x="915.3" y="126.4" width="1.5" height="1.5"/>
<rect x="915.3" y="148.4" width="1.5" height="1.5"/>
<rect x="915.3" y="159.4" width="1.5" height="1.5"/>
<rect x="915.3" y="169.9" width="1.5" height="1.5"/>
<rect x="915.3" y="180.9" width="1.5" height="1.5"/>
<rect x="915.3" y="191.7" width="1.5" height="1.5"/>
<rect x="915.3" y="202.4" width="1.5" height="1.5"/>
<rect x="915.3" y="137.4" width="1.5" height="1.5"/>
<rect x="964.6" y="115.4" width="1.5" height="1.5"/>
<rect x="964.6" y="126.4" width="1.5" height="1.5"/>
<rect x="964.6" y="148.4" width="1.5" height="1.5"/>
<rect x="964.6" y="159.4" width="1.5" height="1.5"/>
<rect x="964.6" y="169.9" width="1.5" height="1.5"/>
<rect x="964.6" y="180.9" width="1.5" height="1.5"/>
<rect x="964.6" y="191.7" width="1.5" height="1.5"/>
<rect x="964.6" y="202.4" width="1.5" height="1.5"/>
<rect x="964.6" y="137.4" width="1.5" height="1.5"/>
<rect x="1013.9" y="115.4" width="1.5" height="1.5"/>
<rect x="1013.9" y="126.4" width="1.5" height="1.5"/>
<rect x="1013.9" y="148.4" width="1.5" height="1.5"/>
<rect x="1013.9" y="159.4" width="1.5" height="1.5"/>
<rect x="1013.9" y="169.9" width="1.5" height="1.5"/>
<rect x="1013.9" y="180.9" width="1.5" height="1.5"/>
<rect x="1013.9" y="191.7" width="1.5" height="1.5"/>
<rect x="1013.9" y="202.4" width="1.5" height="1.5"/>
<rect x="1013.9" y="137.4" width="1.5" height="1.5"/>
<rect x="1063.2" y="115.4" width="1.5" height="1.5"/>
<rect x="1063.2" y="126.4" width="1.5" height="1.5"/>
<rect x="1063.2" y="148.4" width="1.5" height="1.5"/>
<rect x="1063.2" y="159.4" width="1.5" height="1.5"/>
<rect x="1063.2" y="169.9" width="1.5" height="1.5"/>
<rect x="1063.2" y="180.9" width="1.5" height="1.5"/>
<rect x="1063.2" y="191.7" width="1.5" height="1.5"/>
<rect x="1063.2" y="202.4" width="1.5" height="1.5"/>
<rect x="1063.2" y="137.4" width="1.5" height="1.5"/>
<rect x="1112.5" y="115.4" width="1.5" height="1.5"/>
<rect x="1112.5" y="126.4" width="1.5" height="1.5"/>
<rect x="1112.5" y="148.4" width="1.5" height="1.5"/>
<rect x="1112.5" y="159.4" width="1.5" height="1.5"/>
<rect x="1112.5" y="169.9" width="1.5" height="1.5"/>
<rect x="1112.5" y="180.9" width="1.5" height="1.5"/>
<rect x="1112.5" y="191.7" width="1.5" height="1.5"/>
<rect x="1112.5" y="202.4" width="1.5" height="1.5"/>
<rect x="1112.5" y="137.4" width="1.5" height="1.5"/>
<rect x="1161.8" y="115.4" width="1.5" height="1.5"/>
<rect x="1161.8" y="126.4" width="1.5" height="1.5"/>
<rect x="1161.8" y="148.4" width="1.5" height="1.5"/>
<rect x="1161.8" y="159.4" width="1.5" height="1.5"/>
<rect x="1161.8" y="169.9" width="1.5" height="1.5"/>
<rect x="1161.8" y="180.9" width="1.5" height="1.5"/>
<rect x="1161.8" y="191.7" width="1.5" height="1.5"/>
<rect x="1161.8" y="202.4" width="1.5" height="1.5"/>
<rect x="1161.8" y="137.4" width="1.5" height="1.5"/>
<rect x="1211.1" y="115.4" width="1.5" height="1.5"/>
<rect x="1211.1" y="126.4" width="1.5" height="1.5"/>
<rect x="1211.1" y="148.4" width="1.5" height="1.5"/>
<rect x="1211.1" y="159.4" width="1.5" height="1.5"/>
<rect x="1211.1" y="169.9" width="1.5" height="1.5"/>
<rect x="1211.1" y="180.9" width="1.5" height="1.5"/>
<rect x="1211.1" y="191.7" width="1.5" height="1.5"/>
<rect x="1211.1" y="202.4" width="1.5" height="1.5"/>
<rect x="1211.1" y="137.4" width="1.5" height="1.5"/>
<rect x="1260.4" y="115.4" width="1.5" height="1.5"/>
<rect x="1260.4" y="126.4" width="1.5" height="1.5"/>
<rect x="1260.4" y="148.4" width="1.5" height="1.5"/>
<rect x="1260.4" y="159.4" width="1.5" height="1.5"/>
<rect x="1260.4" y="169.9" width="1.5" height="1.5"/>
<rect x="1260.4" y="180.9" width="1.5" height="1.5"/>
<rect x="1260.4" y="191.7" width="1.5" height="1.5"/>
<rect x="1260.4" y="202.4" width="1.5" height="1.5"/>
<rect x="1260.4" y="137.4" width="1.5" height="1.5"/>
</g>
<polyline points="768,195.5 770,194.9 772,193.1 774,194.7 776,195.3 778,196.5 780,196.2 782,194.5 784,195.0 786,195.2 788,194.7 790,193.7 792,193.8 794,193.5 796,193.8 798,195.8 800,197.1 802,195.3 804,192.6 806,190.4 808,192.5 810,193.4 812,194.6 814,194.2 816,194.2 818,194.5 820,195.4 822,191.8 824,193.4 826,192.5 828,191.9 830,191.1 832,190.7 834,192.0 836,192.9 838,195.1 840,191.8 842,190.9 844,190.2 846,188.6 848,189.1 850,192.0 852,193.8 854,192.4 856,192.0 858,191.5 860,189.5 862,190.3 864,190.0 866,191.0 868,190.8 870,191.7 872,192.1 874,193.0 876,192.2 878,194.0 880,191.7 882,190.9 884,192.4 886,192.0 888,192.7 890,192.9 892,191.4 894,190.9 896,189.9 898,192.9 900,192.6 902,193.1 904,194.1 906,192.6 908,194.7 910,192.6 912,194.5 914,193.6 916,193.7 918,195.1 920,195.2 922,196.3 924,194.2 926,195.0 928,197.7 930,197.3 932,198.9 934,199.5 936,201.8 938,203.2 940,207.6 942,200.9 944,188.9 946,178.8 948,174.7 950,177.8 952,179.6 954,175.5 956,174.6 958,180.3 960,189.7 962,196.6 964,193.9 966,172.8 968,172.9 970,179.4 972,186.5 974,194.4 976,204.5 978,206.7 980,205.0 982,202.2 984,200.4 986,198.3 988,194.4 990,194.4 992,193.6 994,193.2 996,193.9 998,194.6 1000,193.9 1002,192.9 1004,195.2 1006,193.1 1008,191.2 1010,191.4 1012,190.5 1014,189.2 1016,191.3 1018,191.3 1020,190.5 1022,192.4 1024,191.2 1026,193.3 1028,193.2 1030,193.6 1032,194.8 1034,197.4 1036,194.8 1038,195.7 1040,194.8 1042,195.3 1044,192.0 1046,192.5 1048,195.3 1050,193.3 1052,194.2 1054,192.4 1056,191.4 1058,192.9 1060,191.6 1062,191.7 1064,194.1 1066,195.7 1068,194.4 1070,193.9 1072,193.3 1074,193.7 1076,193.3 1078,194.2 1080,192.7 1082,191.7 1084,189.8 1086,190.3 1088,190.9 1090,191.4 1092,189.9 1094,190.1 1096,189.0 1098,188.0 1100,189.7 1102,187.0 1104,176.9 1106,169.6 1108,167.4 1110,171.6 1112,179.6 1114,185.1 1116,188.1 1118,186.1 1120,187.6 1122,187.8 1124,187.4 1126,191.6 1128,188.3 1130,187.0 1132,187.1 1134,189.5 1136,188.5 1138,190.4 1140,189.9 1142,190.5 1144,185.9 1146,179.8 1148,173.8 1150,173.3 1152,178.4 1154,187.2 1156,191.4 1158,192.4 1160,192.4 1162,191.9 1164,192.9 1166,194.5 1168,195.8 1170,194.3 1172,194.0 1174,192.1 1176,192.4 1178,192.2 1180,194.9 1182,196.3 1184,195.1 1186,190.2 1188,183.0 1190,174.6 1192,173.4 1194,178.5 1196,185.9 1198,193.3 1200,193.3 1202,193.9 1204,194.6 1206,195.4 1208,194.0 1210,193.5 1212,192.5 1214,192.9 1216,193.1 1218,192.4 1220,192.0 1222,190.7 1224,190.8 1226,188.8 1228,187.0 1230,179.4 1232,173.7 1234,172.1 1236,176.3 1238,183.8 1240,186.2 1242,189.0 1244,188.0 1246,187.8 1248,190.1 1250,190.7 1252,191.3 1254,187.5 1256,187.6 1258,188.4 1260,191.1" fill="none" stroke="#d81810" stroke-width="1.05" stroke-opacity="0.75"/>
<polyline points="768,195.1 770,198.1 772,196.7 774,197.0 776,195.9 778,197.0 780,197.6 782,198.0 784,197.7 786,196.2 788,195.4 790,195.0 792,196.2 794,196.1 796,195.6 798,196.1 800,194.3 802,192.9 804,193.3 806,196.4 808,196.1 810,195.3 812,196.3 814,193.2 816,193.6 818,194.3 820,195.9 822,196.2 824,195.5 826,194.7 828,194.1 830,193.1 832,193.2 834,193.5 836,193.8 838,194.9 840,197.3 842,196.6 844,196.8 846,196.9 848,196.0 850,194.4 852,194.0 854,196.1 856,195.7 858,192.6 860,193.6 862,194.7 864,194.9 866,194.1 868,194.1 870,196.5 872,198.1 874,198.4 876,198.1 878,197.4 880,198.4 882,198.1 884,199.6 886,197.6 888,197.5 890,197.3 892,196.4 894,196.5 896,195.8 898,196.8 900,196.1 902,195.1 904,194.2 906,192.7 908,194.2 910,194.4 912,195.4 914,194.6 916,195.8 918,195.7 920,197.7 922,199.2 924,199.9 926,200.1 928,199.4 930,201.1 932,203.5 934,203.5 936,203.5 938,209.3 940,213.5 942,213.5 944,206.9 946,187.8 948,173.7 950,164.5 952,168.5 954,172.2 956,168.7 958,165.8 960,176.7 962,193.9 964,206.0 966,193.5 968,160.9 970,163.8 972,174.1 974,189.1 976,205.6 978,213.5 980,213.5 982,213.5 984,213.5 986,206.5 988,203.0 990,200.0 992,199.5 994,199.5 996,199.4 998,196.8 1000,195.1 1002,195.5 1004,195.9 1006,196.2 1008,197.0 1010,195.6 1012,192.9 1014,193.5 1016,195.7 1018,197.6 1020,195.9 1022,197.1 1024,196.6 1026,196.3 1028,194.5 1030,195.4 1032,197.0 1034,197.8 1036,197.1 1038,196.8 1040,197.3 1042,198.3 1044,196.4 1046,196.5 1048,197.7 1050,196.9 1052,196.6 1054,196.3 1056,195.5 1058,194.0 1060,195.8 1062,195.0 1064,196.9 1066,197.5 1068,195.1 1070,192.2 1072,194.1 1074,192.2 1076,196.3 1078,193.9 1080,192.7 1082,193.2 1084,192.6 1086,192.1 1088,194.3 1090,196.0 1092,195.6 1094,192.9 1096,193.0 1098,193.1 1100,192.7 1102,194.0 1104,193.4 1106,191.2 1108,188.2 1110,184.7 1112,177.6 1114,165.1 1116,157.0 1118,160.8 1120,169.0 1122,180.1 1124,190.2 1126,193.8 1128,194.2 1130,191.5 1132,193.7 1134,193.4 1136,196.0 1138,196.2 1140,194.0 1142,196.3 1144,195.9 1146,197.6 1148,198.2 1150,197.3 1152,195.6 1154,196.7 1156,197.1 1158,195.0 1160,190.8 1162,182.9 1164,171.7 1166,163.5 1168,163.3 1170,170.1 1172,178.7 1174,189.2 1176,196.0 1178,198.5 1180,196.9 1182,197.8 1184,201.4 1186,199.7 1188,197.4 1190,195.7 1192,196.4 1194,195.5 1196,194.7 1198,195.8 1200,196.6 1202,197.1 1204,197.4 1206,195.2 1208,193.4 1210,191.7 1212,183.9 1214,172.7 1216,161.2 1218,157.6 1220,165.2 1222,173.5 1224,185.4 1226,191.8 1228,193.4 1230,192.7 1232,192.8 1234,193.6 1236,195.7 1238,194.5 1240,192.5 1242,193.8 1244,194.4 1246,193.3 1248,192.1 1250,190.5 1252,190.6 1254,191.7 1256,192.3 1258,194.6 1260,194.1" fill="none" stroke="#d81810" stroke-width="1.05" stroke-opacity="0.75"/>
<polyline points="768,193.8 770,192.8 772,193.3 774,190.8 776,191.2 778,191.6 780,192.0 782,191.5 784,191.4 786,191.3 788,191.8 790,191.2 792,193.2 794,192.4 796,193.4 798,191.1 800,190.9 802,191.5 804,191.2 806,191.3 808,191.6 810,192.9 812,192.0 814,191.9 816,191.8 818,191.1 820,190.7 822,190.1 824,191.8 826,191.0 828,192.8 830,193.4 832,192.2 834,193.2 836,193.7 838,193.6 840,192.9 842,193.1 844,193.8 846,195.0 848,194.5 850,192.9 852,192.5 854,190.5 856,190.0 858,192.7 860,193.4 862,194.4 864,194.1 866,196.1 868,194.1 870,194.0 872,196.2 874,196.3 876,193.6 878,195.7 880,195.8 882,195.6 884,196.5 886,195.5 888,195.5 890,195.0 892,197.2 894,199.3 896,199.6 898,199.5 900,198.4 902,195.1 904,194.8 906,195.1 908,194.1 910,193.8 912,194.0 914,192.2 916,193.9 918,195.7 920,194.7 922,196.1 924,197.1 926,198.6 928,197.4 930,196.6 932,196.5 934,197.4 936,197.3 938,198.9 940,201.2 942,204.0 944,201.1 946,191.1 948,184.2 950,181.7 952,181.4 954,183.0 956,181.4 958,178.7 960,182.2 962,191.6 964,199.0 966,197.2 968,178.9 970,178.7 972,182.6 974,190.1 976,194.5 978,199.8 980,204.1 982,202.9 984,200.5 986,200.0 988,195.1 990,193.7 992,194.3 994,192.9 996,192.7 998,194.9 1000,196.7 1002,195.9 1004,193.6 1006,192.5 1008,195.0 1010,193.3 1012,191.2 1014,192.5 1016,194.8 1018,194.2 1020,194.4 1022,193.9 1024,192.2 1026,192.9 1028,195.0 1030,193.1 1032,193.6 1034,193.6 1036,193.3 1038,193.3 1040,193.9 1042,192.1 1044,189.7 1046,191.2 1048,191.0 1050,192.1 1052,191.2 1054,190.8 1056,192.1 1058,192.2 1060,192.5 1062,191.8 1064,191.2 1066,189.6 1068,189.5 1070,189.6 1072,188.4 1074,188.3 1076,190.4 1078,189.8 1080,190.3 1082,189.0 1084,188.3 1086,187.3 1088,187.7 1090,188.8 1092,187.9 1094,186.5 1096,187.7 1098,186.5 1100,184.3 1102,177.6 1104,172.7 1106,172.2 1108,173.7 1110,182.2 1112,189.0 1114,191.8 1116,190.3 1118,188.5 1120,192.0 1122,191.3 1124,188.8 1126,190.4 1128,191.8 1130,192.7 1132,193.0 1134,192.4 1136,192.0 1138,192.6 1140,192.2 1142,192.9 1144,193.5 1146,194.0 1148,193.0 1150,186.4 1152,178.8 1154,174.0 1156,173.6 1158,178.6 1160,184.8 1162,191.8 1164,193.6 1166,192.6 1168,195.0 1170,198.3 1172,195.6 1174,193.7 1176,194.0 1178,192.3 1180,192.6 1182,192.5 1184,194.0 1186,193.0 1188,193.0 1190,195.5 1192,194.7 1194,193.2 1196,190.7 1198,186.8 1200,180.7 1202,171.8 1204,171.1 1206,174.2 1208,177.8 1210,185.9 1212,190.9 1214,192.7 1216,191.1 1218,193.3 1220,191.0 1222,190.5 1224,190.2 1226,191.3 1228,192.0 1230,191.6 1232,191.4 1234,190.7 1236,190.1 1238,189.8 1240,189.4 1242,190.4 1244,190.0 1246,188.6 1248,185.8 1250,178.9 1252,173.1 1254,172.3 1256,175.7 1258,190.8 1260,192.2" fill="none" stroke="#d81810" stroke-width="1.05" stroke-opacity="0.75"/>
<polyline points="768,190.0 770,188.7 772,187.5 774,187.2 776,189.2 778,188.7 780,188.4 782,189.8 784,189.5 786,189.6 788,189.5 790,191.9 792,189.4 794,188.5 796,186.0 798,186.2 800,184.8 802,187.7 804,188.4 806,188.1 808,189.5 810,189.4 812,190.6 814,190.1 816,187.1 818,189.3 820,189.1 822,188.9 824,188.9 826,188.6 828,191.9 830,190.9 832,190.7 834,188.7 836,189.8 838,190.1 840,190.0 842,189.7 844,191.0 846,191.3 848,192.3 850,192.8 852,191.0 854,191.7 856,190.5 858,191.1 860,191.3 862,191.1 864,192.1 866,191.8 868,193.8 870,194.1 872,195.5 874,191.9 876,190.8 878,191.7 880,191.8 882,195.3 884,194.7 886,193.1 888,192.7 890,192.1 892,193.0 894,192.4 896,193.2 898,192.6 900,193.1 902,190.3 904,190.4 906,188.4 908,187.8 910,189.6 912,191.6 914,191.0 916,190.1 918,190.2 920,191.2 922,189.1 924,188.1 926,190.1 928,190.5 930,190.4 932,192.4 934,192.6 936,198.6 938,202.7 940,204.8 942,199.7 944,190.1 946,175.3 948,167.8 950,170.3 952,171.3 954,171.2 956,166.3 958,169.8 960,181.2 962,193.6 964,197.2 966,170.4 968,169.2 970,174.3 972,182.8 974,193.1 976,200.9 978,205.0 980,204.6 982,202.4 984,195.7 986,193.8 988,189.4 990,190.5 992,190.1 994,190.1 996,190.3 998,190.4 1000,190.8 1002,187.7 1004,189.3 1006,188.8 1008,190.8 1010,190.0 1012,189.1 1014,190.2 1016,190.2 1018,190.4 1020,191.3 1022,189.7 1024,191.0 1026,189.7 1028,188.8 1030,189.4 1032,187.9 1034,188.0 1036,188.1 1038,187.2 1040,187.3 1042,187.2 1044,186.2 1046,187.0 1048,187.9 1050,189.5 1052,189.4 1054,188.3 1056,186.9 1058,186.6 1060,188.5 1062,187.5 1064,185.2 1066,184.7 1068,183.8 1070,183.2 1072,183.0 1074,183.9 1076,181.3 1078,182.4 1080,183.6 1082,183.8 1084,175.0 1086,163.4 1088,156.8 1090,160.0 1092,168.8 1094,180.3 1096,183.7 1098,185.9 1100,186.9 1102,188.3 1104,186.8 1106,187.7 1108,188.7 1110,189.1 1112,188.5 1114,186.9 1116,186.7 1118,187.7 1120,188.0 1122,182.7 1124,174.9 1126,166.7 1128,164.1 1130,173.4 1132,184.1 1134,188.6 1136,189.9 1138,190.6 1140,191.1 1142,191.0 1144,189.7 1146,191.8 1148,188.8 1150,188.4 1152,190.6 1154,190.7 1156,191.3 1158,190.8 1160,188.6 1162,180.8 1164,170.3 1166,164.9 1168,169.8 1170,180.1 1172,187.9 1174,191.6 1176,189.4 1178,189.1 1180,190.2 1182,189.1 1184,186.9 1186,186.5 1188,188.9 1190,190.8 1192,189.3 1194,188.2 1196,185.6 1198,183.7 1200,177.0 1202,164.9 1204,160.0 1206,163.0 1208,173.3 1210,181.5 1212,185.3 1214,186.9 1216,186.5 1218,184.5 1220,185.1 1222,183.7 1224,185.2 1226,186.5 1228,185.9 1230,184.7 1232,184.5 1234,185.2 1236,184.6 1238,180.6 1240,170.7 1242,161.2 1244,162.2 1246,171.9 1248,182.6 1250,186.4 1252,185.9 1254,187.4 1256,188.4 1258,188.6 1260,189.8" fill="none" stroke="#d81810" stroke-width="1.05" stroke-opacity="0.75"/>
<polyline points="768,187.8 770,190.0 772,188.1 774,188.7 776,188.2 778,190.0 780,187.3 782,189.0 784,189.6 786,189.5 788,190.4 790,188.4 792,188.4 794,186.9 796,186.9 798,186.7 800,187.0 802,186.6 804,188.8 806,190.4 808,191.6 810,191.3 812,192.3 814,191.4 816,191.6 818,190.6 820,190.8 822,189.5 824,190.0 826,188.2 828,190.3 830,189.0 832,189.6 834,191.5 836,191.0 838,191.9 840,190.8 842,191.9 844,191.8 846,191.6 848,193.2 850,193.3 852,194.0 854,192.2 856,193.4 858,193.9 860,191.8 862,191.0 864,189.4 866,188.8 868,189.0 870,189.7 872,188.8 874,187.7 876,190.0 878,190.1 880,190.0 882,189.6 884,190.7 886,190.3 888,190.7 890,189.0 892,189.5 894,188.6 896,188.1 898,189.0 900,187.1 902,188.3 904,188.6 906,190.4 908,187.2 910,186.6 912,187.8 914,189.6 916,189.4 918,190.6 920,189.6 922,191.6 924,190.1 926,190.2 928,191.3 930,191.6 932,194.0 934,193.7 936,194.7 938,196.3 940,202.2 942,205.1 944,201.5 946,191.1 948,176.4 950,166.6 952,164.4 954,168.7 956,171.4 958,163.7 960,166.5 962,177.0 964,190.5 966,195.4 968,167.8 970,161.0 972,166.1 974,177.8 976,190.1 978,198.7 980,206.6 982,206.7 984,207.8 986,203.0 988,197.9 990,193.0 992,193.5 994,193.1 996,190.9 998,188.3 1000,187.6 1002,189.3 1004,190.1 1006,188.0 1008,186.7 1010,188.4 1012,188.6 1014,187.8 1016,187.2 1018,189.4 1020,188.6 1022,188.9 1024,189.0 1026,187.3 1028,187.9 1030,188.3 1032,185.6 1034,185.2 1036,183.1 1038,185.4 1040,183.8 1042,185.8 1044,186.1 1046,187.0 1048,188.4 1050,187.2 1052,184.1 1054,183.2 1056,183.5 1058,182.8 1060,186.1 1062,186.2 1064,185.3 1066,186.9 1068,187.1 1070,186.1 1072,187.4 1074,185.8 1076,185.0 1078,186.6 1080,187.4 1082,188.2 1084,186.9 1086,187.3 1088,187.8 1090,189.5 1092,188.4 1094,187.5 1096,189.0 1098,189.7 1100,188.4 1102,189.0 1104,191.2 1106,188.8 1108,185.2 1110,178.7 1112,170.2 1114,161.6 1116,162.2 1118,171.7 1120,181.3 1122,186.7 1124,188.1 1126,189.1 1128,189.7 1130,190.6 1132,189.5 1134,188.8 1136,189.4 1138,187.8 1140,187.4 1142,187.2 1144,188.8 1146,189.4 1148,190.7 1150,189.1 1152,189.7 1154,184.0 1156,174.2 1158,163.1 1160,158.3 1162,162.5 1164,173.0 1166,181.5 1168,186.5 1170,187.4 1172,187.2 1174,185.5 1176,188.1 1178,185.9 1180,187.7 1182,187.6 1184,188.4 1186,187.9 1188,186.5 1190,184.2 1192,183.5 1194,184.4 1196,184.4 1198,181.4 1200,175.6 1202,164.6 1204,158.1 1206,157.3 1208,163.3 1210,174.3 1212,181.1 1214,183.2 1216,182.2 1218,185.9 1220,187.8 1222,187.6 1224,187.1 1226,185.6 1228,185.0 1230,187.4 1232,186.4 1234,187.4 1236,188.9 1238,190.7 1240,189.2 1242,187.9 1244,183.1 1246,173.6 1248,165.1 1250,160.7 1252,164.2 1254,171.7 1256,182.1 1258,189.6 1260,188.7" fill="none" stroke="#d81810" stroke-width="1.05" stroke-opacity="0.75"/>
<polyline points="768,188.1 770,187.8 772,189.2 774,187.1 776,186.6 778,188.9 780,187.0 782,186.7 784,188.1 786,190.0 788,189.3 790,189.1 792,189.3 794,187.6 796,188.1 798,188.8 800,188.1 802,189.2 804,189.7 806,187.7 808,187.9 810,188.3 812,189.4 814,190.7 816,189.8 818,188.9 820,189.1 822,186.4 824,187.8 826,188.3 828,189.0 830,188.2 832,187.7 834,185.1 836,185.7 838,187.5 840,191.7 842,190.6 844,190.0 846,189.2 848,185.4 850,185.5 852,186.9 854,188.3 856,188.3 858,186.9 860,185.9 862,188.0 864,185.7 866,186.4 868,187.3 870,186.7 872,187.9 874,185.6 876,185.0 878,185.3 880,185.5 882,186.9 884,184.4 886,185.1 888,184.7 890,185.5 892,184.3 894,184.0 896,185.4 898,184.1 900,184.6 902,184.6 904,186.1 906,187.0 908,186.5 910,186.1 912,186.8 914,188.5 916,189.6 918,190.5 920,191.8 922,190.1 924,191.9 926,190.0 928,190.6 930,193.4 932,192.9 934,195.8 936,195.2 938,198.5 940,202.8 942,203.2 944,193.2 946,177.3 948,165.4 950,159.0 952,162.1 954,166.4 956,160.0 958,159.7 960,170.7 962,186.0 964,194.8 966,180.5 968,156.3 970,160.9 972,170.4 974,184.0 976,195.5 978,202.3 980,206.0 982,204.4 984,202.2 986,195.2 988,191.2 990,188.0 992,187.7 994,187.8 996,187.2 998,187.6 1000,187.0 1002,185.6 1004,184.7 1006,184.6 1008,184.5 1010,183.9 1012,183.1 1014,183.6 1016,183.7 1018,183.4 1020,183.9 1022,185.3 1024,185.2 1026,184.4 1028,182.3 1030,183.1 1032,184.6 1034,183.9 1036,183.0 1038,182.2 1040,183.7 1042,182.9 1044,182.9 1046,184.3 1048,183.0 1050,183.7 1052,181.6 1054,183.1 1056,181.7 1058,181.3 1060,180.9 1062,182.6 1064,182.8 1066,183.1 1068,184.2 1070,183.9 1072,184.6 1074,184.3 1076,183.6 1078,184.2 1080,185.5 1082,183.0 1084,183.4 1086,182.6 1088,184.3 1090,185.7 1092,185.9 1094,186.8 1096,187.7 1098,186.9 1100,188.1 1102,187.3 1104,185.1 1106,180.4 1108,174.8 1110,167.9 1112,163.5 1114,162.1 1116,167.6 1118,175.2 1120,181.2 1122,185.1 1124,186.5 1126,186.1 1128,188.2 1130,186.8 1132,185.1 1134,184.4 1136,184.1 1138,181.8 1140,183.1 1142,186.1 1144,185.9 1146,185.6 1148,184.4 1150,184.7 1152,183.9 1154,184.5 1156,184.7 1158,183.6 1160,176.1 1162,167.2 1164,159.4 1166,158.0 1168,162.3 1170,169.4 1172,174.3 1174,176.9 1176,181.3 1178,181.7 1180,181.2 1182,180.6 1184,182.7 1186,181.7 1188,182.9 1190,183.6 1192,181.5 1194,183.9 1196,182.2 1198,182.7 1200,183.0 1202,182.7 1204,184.7 1206,184.0 1208,181.1 1210,180.1 1212,177.6 1214,168.7 1216,159.7 1218,157.6 1220,158.7 1222,166.0 1224,172.5 1226,178.3 1228,184.0 1230,187.2 1232,188.0 1234,186.7 1236,186.6 1238,186.9 1240,188.9 1242,189.3 1244,185.8 1246,187.4 1248,187.9 1250,186.6 1252,186.5 1254,188.6 1256,189.6 1258,188.6 1260,188.3" fill="none" stroke="#d81810" stroke-width="1.05" stroke-opacity="0.75"/>
<polyline points="768,194.4 770,192.8 772,192.3 774,193.9 776,195.4 778,193.3 780,193.8 782,193.3 784,195.1 786,193.3 788,191.8 790,193.0 792,193.4 794,193.6 796,191.4 798,194.0 800,191.7 802,192.9 804,191.4 806,192.8 808,192.2 810,191.2 812,190.3 814,191.3 816,191.5 818,193.1 820,190.1 822,190.3 824,189.0 826,189.2 828,190.5 830,190.5 832,191.6 834,191.1 836,192.3 838,192.8 840,191.4 842,192.0 844,190.6 846,189.6 848,190.2 850,189.4 852,187.4 854,188.0 856,189.2 858,190.8 860,190.2 862,190.3 864,190.6 866,192.2 868,191.7 870,189.0 872,188.5 874,189.7 876,188.7 878,189.4 880,189.2 882,189.5 884,190.1 886,190.0 888,190.7 890,192.3 892,188.7 894,189.3 896,190.2 898,188.3 900,188.0 902,190.3 904,192.2 906,192.8 908,192.5 910,192.4 912,190.9 914,192.7 916,192.0 918,193.1 920,193.9 922,195.0 924,195.0 926,194.8 928,194.5 930,195.4 932,195.6 934,197.2 936,198.2 938,206.3 940,207.9 942,208.3 944,193.1 946,177.0 948,165.7 950,162.3 952,166.7 954,167.6 956,162.2 958,164.9 960,177.3 962,192.0 964,199.1 966,175.6 968,157.4 970,165.9 972,178.0 974,192.0 976,203.8 978,209.3 980,211.1 982,208.8 984,205.8 986,199.2 988,195.8 990,195.2 992,193.6 994,194.1 996,192.2 998,192.1 1000,193.7 1002,193.3 1004,192.2 1006,188.2 1008,188.0 1010,184.3 1012,185.2 1014,188.5 1016,187.6 1018,184.1 1020,185.8 1022,185.5 1024,185.3 1026,187.7 1028,186.9 1030,186.2 1032,185.7 1034,186.1 1036,187.5 1038,187.8 1040,187.2 1042,185.7 1044,188.1 1046,188.4 1048,188.1 1050,187.4 1052,188.1 1054,187.6 1056,190.6 1058,190.3 1060,189.2 1062,187.8 1064,188.5 1066,188.6 1068,188.3 1070,190.1 1072,190.3 1074,191.6 1076,192.0 1078,191.5 1080,190.8 1082,183.7 1084,179.7 1086,176.4 1088,178.2 1090,181.4 1092,188.4 1094,190.8 1096,194.1 1098,193.0 1100,195.1 1102,192.9 1104,193.3 1106,191.6 1108,193.8 1110,191.0 1112,189.9 1114,191.0 1116,193.3 1118,192.4 1120,191.5 1122,190.9 1124,192.8 1126,188.0 1128,185.0 1130,178.9 1132,176.7 1134,177.8 1136,182.9 1138,187.3 1140,188.3 1142,187.9 1144,188.9 1146,189.6 1148,188.9 1150,189.6 1152,188.5 1154,189.8 1156,190.9 1158,191.7 1160,189.4 1162,189.4 1164,187.7 1166,186.2 1168,187.0 1170,188.3 1172,188.2 1174,183.9 1176,177.2 1178,174.2 1180,177.0 1182,177.9 1184,184.8 1186,189.1 1188,188.6 1190,188.7 1192,186.9 1194,186.2 1196,187.2 1198,185.4 1200,187.4 1202,188.7 1204,189.8 1206,189.4 1208,189.7 1210,192.7 1212,190.8 1214,191.2 1216,193.9 1218,193.1 1220,188.1 1222,180.0 1224,179.8 1226,182.3 1228,183.2 1230,190.3 1232,190.2 1234,190.2 1236,191.8 1238,190.5 1240,191.1 1242,193.6 1244,194.1 1246,194.1 1248,192.7 1250,193.3 1252,193.8 1254,193.2 1256,193.6 1258,193.2 1260,193.4" fill="none" stroke="#d81810" stroke-width="1.05" stroke-opacity="0.75"/>
<polyline points="768,191.3 770,192.5 772,191.7 774,192.2 776,191.4 778,192.4 780,193.3 782,191.7 784,191.0 786,189.9 788,190.0 790,189.2 792,192.4 794,193.3 796,191.6 798,191.3 800,191.4 802,190.7 804,188.8 806,188.0 808,188.7 810,189.8 812,189.2 814,188.7 816,188.0 818,186.5 820,181.9 822,180.1 824,178.7 826,181.9 828,183.3 830,185.1 832,186.6 834,188.6 836,186.0 838,187.8 840,188.3 842,188.9 844,189.1 846,190.1 848,190.5 850,189.8 852,188.2 854,183.7 856,182.2 858,180.2 860,177.2 862,177.3 864,182.5 866,182.9 868,183.6 870,187.0 872,189.5 874,189.8 876,188.1 878,188.6 880,188.4 882,188.0 884,187.2 886,188.6 888,187.3 890,188.5 892,190.1 894,187.4 896,188.1 898,188.2 900,188.8 902,189.9 904,190.0 906,189.5 908,188.0 910,190.1 912,190.8 914,192.1 916,190.0 918,191.4 920,190.5 922,191.9 924,194.5 926,190.7 928,192.8 930,193.7 932,194.0 934,191.9 936,196.8 938,199.6 940,200.7 942,192.8 944,183.3 946,176.1 948,171.8 950,174.0 952,178.2 954,172.0 956,172.7 958,182.0 960,191.5 962,196.1 964,187.3 966,171.1 968,172.6 970,177.3 972,186.6 974,194.3 976,200.1 978,201.5 980,199.6 982,198.3 984,194.8 986,194.6 988,192.5 990,190.8 992,190.8 994,190.3 996,191.3 998,188.9 1000,189.7 1002,190.1 1004,190.4 1006,186.9 1008,184.6 1010,186.6 1012,187.2 1014,185.9 1016,186.9 1018,186.3 1020,184.9 1022,184.7 1024,189.6 1026,188.1 1028,187.0 1030,187.0 1032,186.9 1034,186.6 1036,187.6 1038,189.4 1040,189.7 1042,189.7 1044,188.7 1046,188.9 1048,187.8 1050,188.1 1052,188.4 1054,187.5 1056,189.6 1058,190.6 1060,191.0 1062,190.5 1064,188.4 1066,188.7 1068,187.8 1070,187.4 1072,190.3 1074,189.9 1076,191.2 1078,191.6 1080,192.7 1082,191.3 1084,192.1 1086,191.1 1088,188.6 1090,189.2 1092,190.4 1094,191.1 1096,190.7 1098,190.0 1100,189.5 1102,186.1 1104,188.9 1106,188.0 1108,186.7 1110,187.3 1112,186.0 1114,185.4 1116,184.6 1118,186.1 1120,186.4 1122,186.5 1124,187.6 1126,187.4 1128,187.6 1130,188.3 1132,188.5 1134,189.0 1136,187.9 1138,189.5 1140,188.8 1142,186.3 1144,185.6 1146,185.6 1148,185.8 1150,186.9 1152,187.0 1154,186.8 1156,186.4 1158,186.0 1160,186.3 1162,186.0 1164,185.5 1166,186.0 1168,186.8 1170,188.0 1172,187.7 1174,187.1 1176,186.8 1178,189.7 1180,188.4 1182,189.3 1184,188.2 1186,187.6 1188,189.7 1190,190.1 1192,191.8 1194,191.5 1196,190.3 1198,188.3 1200,189.3 1202,189.4 1204,189.4 1206,190.8 1208,191.0 1210,192.3 1212,194.5 1214,189.9 1216,188.9 1218,189.7 1220,191.4 1222,192.3 1224,190.5 1226,189.9 1228,190.0 1230,193.0 1232,194.7 1234,193.3 1236,194.0 1238,192.0 1240,190.2 1242,188.8 1244,187.1 1246,189.9 1248,190.7 1250,189.4 1252,188.7 1254,186.8 1256,188.2 1258,191.0 1260,189.5" fill="none" stroke="#d81810" stroke-width="1.05" stroke-opacity="0.75"/>
<polyline points="768,194.5 770,193.0 772,191.0 774,192.3 776,190.6 778,191.2 780,192.5 782,192.3 784,192.8 786,193.8 788,194.5 790,194.6 792,194.3 794,194.1 796,192.2 798,194.5 800,194.2 802,193.6 804,192.2 806,191.3 808,190.6 810,191.7 812,192.8 814,191.9 816,192.3 818,194.0 820,193.0 822,193.6 824,195.2 826,196.1 828,196.4 830,196.5 832,195.7 834,193.7 836,194.3 838,195.7 840,194.8 842,195.3 844,195.4 846,193.9 848,193.7 850,184.0 852,180.9 854,176.3 856,182.7 858,186.9 860,190.6 862,193.1 864,193.4 866,191.8 868,190.6 870,191.6 872,192.1 874,192.6 876,190.7 878,192.6 880,192.7 882,193.9 884,194.3 886,195.6 888,195.3 890,196.9 892,195.2 894,193.9 896,193.4 898,194.2 900,195.2 902,195.2 904,193.4 906,195.9 908,195.4 910,192.1 912,192.4 914,193.5 916,194.3 918,193.3 920,195.5 922,196.9 924,196.0 926,197.1 928,196.2 930,199.0 932,198.2 934,197.4 936,198.0 938,199.7 940,199.7 942,202.0 944,199.3 946,193.6 948,187.2 950,184.1 952,182.8 954,183.6 956,181.0 958,178.8 960,183.0 962,190.9 964,197.6 966,194.4 968,180.0 970,179.2 972,183.4 974,190.1 976,197.9 978,200.0 980,200.6 982,200.2 984,199.5 986,198.4 988,194.2 990,195.3 992,195.4 994,195.8 996,196.5 998,197.4 1000,196.6 1002,197.4 1004,196.9 1006,191.7 1008,190.4 1010,190.6 1012,189.8 1014,188.2 1016,189.3 1018,190.8 1020,190.6 1022,191.4 1024,191.1 1026,192.1 1028,193.1 1030,192.4 1032,193.7 1034,193.0 1036,195.5 1038,193.9 1040,195.0 1042,196.1 1044,195.3 1046,195.1 1048,194.7 1050,196.1 1052,195.3 1054,193.6 1056,195.2 1058,193.7 1060,192.3 1062,195.1 1064,195.8 1066,195.3 1068,196.2 1070,195.5 1072,193.6 1074,193.4 1076,195.0 1078,194.4 1080,195.3 1082,193.9 1084,194.1 1086,193.8 1088,193.8 1090,194.1 1092,193.0 1094,194.0 1096,193.9 1098,194.4 1100,192.7 1102,191.7 1104,192.4 1106,193.8 1108,194.7 1110,192.5 1112,192.0 1114,194.9 1116,192.5 1118,190.1 1120,188.8 1122,191.0 1124,189.2 1126,190.7 1128,191.5 1130,192.1 1132,192.3 1134,190.4 1136,189.0 1138,188.4 1140,188.8 1142,188.9 1144,190.6 1146,190.6 1148,190.6 1150,191.6 1152,191.3 1154,190.9 1156,189.3 1158,191.0 1160,189.6 1162,191.3 1164,190.6 1166,190.3 1168,190.4 1170,189.9 1172,193.1 1174,190.8 1176,191.3 1178,194.9 1180,196.6 1182,197.9 1184,193.6 1186,194.9 1188,196.3 1190,195.1 1192,192.0 1194,195.3 1196,194.3 1198,194.9 1200,195.2 1202,195.5 1204,193.2 1206,195.5 1208,196.2 1210,197.1 1212,198.5 1214,196.6 1216,194.7 1218,195.2 1220,193.6 1222,194.6 1224,195.4 1226,195.0 1228,193.9 1230,192.4 1232,192.6 1234,191.8 1236,191.4 1238,193.5 1240,193.1 1242,193.2 1244,191.5 1246,191.9 1248,191.5 1250,192.0 1252,193.7 1254,194.1 1256,193.3 1258,190.7 1260,191.2" fill="none" stroke="#d81810" stroke-width="1.05" stroke-opacity="0.75"/>
<polyline points="768,186.7 770,187.3 772,184.3 774,181.0 776,171.0 778,160.7 780,153.7 782,157.1 784,167.7 786,177.2 788,186.9 790,188.9 792,187.8 794,189.0 796,188.1 798,189.1 800,188.4 802,188.0 804,189.5 806,191.3 808,189.0 810,188.3 812,191.0 814,190.8 816,190.9 818,189.9 820,189.5 822,190.3 824,188.0 826,188.9 828,187.0 830,188.4 832,187.4 834,190.6 836,189.8 838,189.6 840,190.9 842,192.7 844,192.9 846,192.4 848,192.1 850,190.2 852,189.2 854,188.7 856,189.5 858,190.4 860,191.3 862,189.9 864,189.4 866,189.6 868,190.5 870,189.2 872,189.8 874,188.3 876,188.2 878,188.5 880,189.1 882,188.3 884,188.7 886,188.1 888,190.8 890,190.7 892,188.9 894,191.5 896,192.1 898,190.7 900,192.1 902,191.1 904,190.8 906,188.6 908,188.8 910,188.9 912,189.5 914,191.7 916,191.6 918,192.3 920,189.8 922,189.4 924,190.7 926,192.0 928,191.1 930,191.0 932,190.4 934,193.8 936,192.5 938,194.0 940,197.6 942,202.1 944,204.5 946,195.4 948,182.7 950,171.1 952,166.4 954,171.4 956,173.5 958,166.3 960,165.9 962,175.0 964,186.9 966,195.9 968,181.3 970,161.0 972,164.9 974,175.9 976,186.3 978,198.9 980,203.8 982,204.4 984,204.3 986,202.0 988,199.3 990,194.0 992,192.6 994,190.0 996,190.7 998,191.0 1000,193.5 1002,190.5 1004,190.7 1006,187.7 1008,187.1 1010,186.5 1012,186.0 1014,186.2 1016,187.8 1018,188.5 1020,190.2 1022,189.5 1024,188.4 1026,188.4 1028,187.6 1030,189.5 1032,189.8 1034,190.5 1036,190.4 1038,190.4 1040,191.3 1042,190.8 1044,189.2 1046,190.5 1048,187.9 1050,190.3 1052,188.6 1054,187.8 1056,188.7 1058,189.1 1060,188.9 1062,188.9 1064,186.6 1066,188.2 1068,188.5 1070,190.1 1072,189.2 1074,189.0 1076,187.6 1078,187.9 1080,187.5 1082,186.8 1084,187.5 1086,188.6 1088,187.1 1090,187.1 1092,186.4 1094,186.0 1096,186.8 1098,186.9 1100,186.7 1102,185.6 1104,186.1 1106,184.8 1108,184.9 1110,186.5 1112,186.8 1114,182.3 1116,183.1 1118,185.3 1120,186.5 1122,187.7 1124,186.8 1126,185.5 1128,185.9 1130,186.0 1132,186.1 1134,184.1 1136,184.5 1138,186.4 1140,187.0 1142,186.3 1144,188.6 1146,187.7 1148,188.9 1150,186.6 1152,186.6 1154,184.9 1156,185.2 1158,187.3 1160,187.7 1162,188.3 1164,188.5 1166,186.9 1168,188.0 1170,187.2 1172,189.8 1174,189.7 1176,189.1 1178,188.2 1180,187.7 1182,187.6 1184,188.3 1186,188.5 1188,189.1 1190,187.9 1192,189.3 1194,189.8 1196,190.5 1198,189.3 1200,187.9 1202,187.5 1204,187.9 1206,187.9 1208,188.1 1210,188.5 1212,189.2 1214,187.8 1216,188.6 1218,186.9 1220,186.5 1222,186.7 1224,187.4 1226,186.9 1228,185.1 1230,188.9 1232,187.1 1234,185.7 1236,186.7 1238,187.1 1240,186.2 1242,186.9 1244,187.5 1246,185.9 1248,185.1 1250,185.5 1252,186.2 1254,187.6 1256,185.1 1258,186.1 1260,186.2" fill="none" stroke="#d81810" stroke-width="1.05" stroke-opacity="0.75"/>
<polyline points="768,188.9 770,189.4 772,191.0 774,184.7 776,177.9 778,170.4 780,164.8 782,157.3 784,153.8 786,151.4 788,151.0 790,149.0 792,148.1 794,144.3 796,154.7 798,159.4 800,164.5 802,171.5 804,182.1 806,184.6 808,189.7 810,191.7 812,190.6 814,191.2 816,190.8 818,190.7 820,191.0 822,191.5 824,190.5 826,190.7 828,191.2 830,192.5 832,192.0 834,192.5 836,193.7 838,196.0 840,195.5 842,193.9 844,193.5 846,193.5 848,194.3 850,194.7 852,194.4 854,196.1 856,192.6 858,194.2 860,194.0 862,195.1 864,194.1 866,194.4 868,193.7 870,194.3 872,194.2 874,193.3 876,193.6 878,191.4 880,192.2 882,192.3 884,192.4 886,193.0 888,192.5 890,193.5 892,193.3 894,189.5 896,190.1 898,191.1 900,190.2 902,188.6 904,190.5 906,191.5 908,194.3 910,192.3 912,192.9 914,192.7 916,193.0 918,194.6 920,195.4 922,194.8 924,193.1 926,193.3 928,193.7 930,197.4 932,197.2 934,197.0 936,202.5 938,207.1 940,208.9 942,197.6 944,180.0 946,168.4 948,162.9 950,165.2 952,169.4 954,166.3 956,165.7 958,174.4 960,187.0 962,198.1 964,182.7 966,161.0 968,166.3 970,174.5 972,184.1 974,197.0 976,203.5 978,207.2 980,206.1 982,203.6 984,200.0 986,197.3 988,193.3 990,193.1 992,192.4 994,189.2 996,189.7 998,188.6 1000,190.5 1002,193.1 1004,192.5 1006,193.6 1008,193.4 1010,191.5 1012,190.9 1014,189.2 1016,189.8 1018,191.3 1020,192.0 1022,192.2 1024,190.1 1026,192.2 1028,191.2 1030,191.8 1032,193.9 1034,192.0 1036,189.9 1038,190.8 1040,192.2 1042,192.3 1044,190.6 1046,190.3 1048,191.3 1050,191.4 1052,189.3 1054,190.3 1056,189.4 1058,189.8 1060,192.2 1062,192.1 1064,191.5 1066,190.8 1068,189.8 1070,191.6 1072,189.9 1074,188.5 1076,188.4 1078,190.2 1080,189.3 1082,187.1 1084,189.2 1086,188.8 1088,189.8 1090,190.9 1092,191.0 1094,190.8 1096,188.3 1098,189.6 1100,191.5 1102,188.3 1104,188.1 1106,188.5 1108,185.3 1110,185.3 1112,184.5 1114,183.8 1116,184.8 1118,184.2 1120,185.1 1122,187.0 1124,188.9 1126,189.5 1128,187.8 1130,187.2 1132,187.7 1134,188.5 1136,189.3 1138,187.9 1140,187.9 1142,187.1 1144,188.9 1146,190.1 1148,191.3 1150,192.5 1152,193.9 1154,192.1 1156,191.9 1158,189.9 1160,187.8 1162,189.9 1164,191.5 1166,191.6 1168,192.6 1170,194.5 1172,193.7 1174,192.1 1176,191.1 1178,190.4 1180,190.6 1182,190.7 1184,189.8 1186,192.7 1188,191.2 1190,192.2 1192,191.2 1194,191.2 1196,190.8 1198,192.2 1200,192.6 1202,191.9 1204,190.2 1206,191.3 1208,189.5 1210,189.8 1212,191.5 1214,191.3 1216,191.8 1218,190.9 1220,188.3 1222,188.5 1224,188.8 1226,187.7 1228,188.2 1230,186.4 1232,188.0 1234,188.1 1236,188.8 1238,187.9 1240,187.5 1242,187.3 1244,186.6 1246,186.6 1248,187.2 1250,187.2 1252,187.5 1254,187.9 1256,187.9 1258,188.0 1260,188.1" fill="none" stroke="#d81810" stroke-width="1.05" stroke-opacity="0.75"/>
<polyline points="768,194.5 770,194.5 772,194.5 774,194.2 776,195.8 778,194.4 780,194.6 782,196.1 784,195.1 786,196.2 788,198.1 790,200.0 792,197.1 794,192.3 796,185.9 798,181.4 800,175.7 802,172.2 804,176.4 806,184.0 808,190.1 810,195.2 812,197.7 814,197.4 816,195.6 818,196.0 820,194.8 822,197.8 824,193.7 826,193.9 828,194.3 830,195.6 832,196.0 834,195.4 836,193.7 838,193.3 840,194.5 842,194.3 844,195.0 846,197.6 848,196.3 850,195.6 852,195.0 854,194.5 856,193.2 858,193.3 860,193.4 862,195.3 864,196.3 866,195.8 868,193.8 870,196.6 872,195.7 874,194.1 876,195.1 878,194.8 880,193.6 882,194.7 884,194.4 886,195.4 888,193.2 890,193.4 892,194.1 894,192.1 896,194.1 898,194.8 900,193.6 902,195.3 904,193.8 906,193.6 908,193.9 910,194.3 912,195.6 914,197.0 916,196.9 918,199.5 920,198.9 922,197.2 924,197.1 926,197.6 928,199.0 930,198.5 932,199.4 934,200.5 936,203.2 938,209.9 940,213.5 942,210.3 944,194.7 946,178.2 948,168.0 950,165.5 952,170.9 954,170.9 956,164.5 958,167.2 960,181.9 962,196.1 964,202.9 966,171.3 968,162.6 970,170.0 972,180.6 974,193.8 976,206.4 978,213.5 980,213.5 982,211.2 984,206.5 986,201.6 988,198.5 990,196.5 992,194.1 994,193.9 996,194.0 998,193.6 1000,192.9 1002,192.3 1004,193.3 1006,193.7 1008,193.1 1010,194.3 1012,193.4 1014,195.8 1016,195.4 1018,193.5 1020,194.4 1022,194.2 1024,193.3 1026,194.5 1028,195.3 1030,196.1 1032,197.0 1034,194.2 1036,191.8 1038,192.4 1040,193.9 1042,192.0 1044,192.6 1046,191.7 1048,191.2 1050,188.5 1052,190.5 1054,191.7 1056,191.7 1058,190.9 1060,191.1 1062,191.7 1064,192.8 1066,192.3 1068,193.0 1070,193.5 1072,191.4 1074,189.3 1076,189.8 1078,191.4 1080,190.0 1082,189.5 1084,190.5 1086,189.6 1088,189.3 1090,190.6 1092,189.7 1094,189.8 1096,189.1 1098,191.6 1100,189.1 1102,192.4 1104,193.4 1106,189.8 1108,191.2 1110,191.0 1112,191.5 1114,192.4 1116,192.1 1118,190.6 1120,191.6 1122,192.9 1124,192.2 1126,191.9 1128,192.9 1130,195.9 1132,194.4 1134,194.1 1136,193.9 1138,192.1 1140,193.4 1142,193.8 1144,193.8 1146,193.8 1148,193.7 1150,193.9 1152,195.4 1154,193.9 1156,195.0 1158,194.3 1160,197.0 1162,198.1 1164,198.2 1166,197.2 1168,193.9 1170,193.3 1172,192.3 1174,192.6 1176,194.5 1178,194.0 1180,194.1 1182,192.7 1184,193.5 1186,193.2 1188,195.7 1190,193.3 1192,193.6 1194,189.3 1196,190.9 1198,193.1 1200,192.0 1202,191.6 1204,189.3 1206,190.4 1208,193.7 1210,191.6 1212,191.5 1214,191.3 1216,193.9 1218,191.6 1220,190.7 1222,190.5 1224,190.5 1226,190.0 1228,190.4 1230,190.2 1232,191.0 1234,189.5 1236,189.1 1238,191.0 1240,190.8 1242,190.9 1244,192.8 1246,192.8 1248,191.8 1250,192.6 1252,192.6 1254,192.0 1256,190.7 1258,190.0 1260,189.9" fill="none" stroke="#d81810" stroke-width="1.05" stroke-opacity="0.75"/>
<polyline points="768,190.6 770,185.2 772,178.1 774,170.8 776,164.0 778,170.8 780,179.7 782,187.0 784,192.6 786,198.0 788,196.4 790,197.5 792,197.8 794,198.4 796,197.8 798,197.7 800,198.7 802,196.9 804,195.7 806,194.9 808,192.6 810,194.8 812,197.8 814,192.1 816,183.8 818,182.7 820,178.4 822,177.0 824,180.1 826,184.9 828,190.7 830,195.6 832,197.4 834,195.2 836,193.4 838,193.7 840,194.7 842,195.7 844,196.4 846,195.2 848,194.1 850,193.8 852,195.9 854,192.8 856,192.2 858,192.1 860,193.9 862,193.4 864,193.3 866,193.3 868,194.6 870,195.0 872,194.3 874,192.3 876,190.8 878,191.5 880,191.2 882,191.9 884,191.9 886,191.1 888,193.3 890,194.0 892,194.2 894,193.1 896,191.2 898,191.9 900,193.9 902,196.2 904,196.9 906,194.7 908,194.9 910,196.4 912,196.2 914,197.1 916,197.1 918,195.4 920,194.8 922,195.7 924,194.7 926,197.7 928,199.8 930,201.6 932,200.4 934,199.9 936,203.0 938,206.4 940,209.5 942,204.4 944,196.5 946,185.6 948,178.1 950,178.2 952,180.6 954,181.1 956,176.8 958,179.6 960,187.3 962,195.6 964,199.9 966,182.2 968,175.1 970,178.1 972,187.0 974,196.1 976,203.2 978,209.5 980,208.1 982,206.0 984,204.9 986,201.8 988,199.9 990,200.5 992,198.8 994,198.5 996,196.7 998,195.0 1000,194.7 1002,195.4 1004,194.4 1006,195.3 1008,194.6 1010,196.5 1012,197.4 1014,196.0 1016,194.9 1018,196.5 1020,197.0 1022,195.4 1024,195.9 1026,194.6 1028,194.9 1030,194.0 1032,192.1 1034,192.5 1036,193.2 1038,193.3 1040,193.9 1042,193.9 1044,193.2 1046,189.9 1048,190.5 1050,192.0 1052,191.6 1054,192.1 1056,193.3 1058,193.0 1060,192.5 1062,193.9 1064,191.4 1066,192.1 1068,190.4 1070,189.0 1072,189.8 1074,190.3 1076,191.2 1078,190.6 1080,191.7 1082,190.4 1084,192.8 1086,192.9 1088,191.3 1090,191.7 1092,190.8 1094,191.4 1096,189.0 1098,188.6 1100,189.8 1102,190.7 1104,190.8 1106,191.6 1108,191.4 1110,191.5 1112,195.9 1114,194.8 1116,195.4 1118,193.5 1120,195.9 1122,195.7 1124,196.5 1126,195.8 1128,195.0 1130,196.7 1132,197.2 1134,198.5 1136,197.7 1138,197.7 1140,198.6 1142,196.0 1144,197.0 1146,195.5 1148,194.7 1150,194.4 1152,193.4 1154,194.9 1156,194.8 1158,194.1 1160,193.8 1162,192.2 1164,192.2 1166,193.6 1168,195.6 1170,193.6 1172,193.4 1174,194.4 1176,192.1 1178,192.9 1180,190.6 1182,190.9 1184,192.8 1186,193.8 1188,192.6 1190,190.4 1192,189.8 1194,191.0 1196,189.1 1198,187.7 1200,187.2 1202,188.6 1204,186.5 1206,189.6 1208,189.9 1210,190.5 1212,191.8 1214,192.3 1216,191.2 1218,192.5 1220,191.5 1222,190.6 1224,189.7 1226,190.7 1228,191.5 1230,191.9 1232,192.6 1234,192.7 1236,191.5 1238,191.1 1240,191.9 1242,192.5 1244,193.0 1246,192.7 1248,192.8 1250,194.3 1252,195.1 1254,195.6 1256,194.2 1258,195.3 1260,194.6" fill="none" stroke="#d81810" stroke-width="1.05" stroke-opacity="0.75"/>
<polyline points="768,195.2 770,196.6 772,196.1 774,195.2 776,197.6 778,199.3 780,199.9 782,197.0 784,199.1 786,197.3 788,198.3 790,198.8 792,190.6 794,183.1 796,174.5 798,165.8 800,173.3 802,181.5 804,188.1 806,197.4 808,196.7 810,194.8 812,195.2 814,197.6 816,195.8 818,194.6 820,195.9 822,194.1 824,195.1 826,195.6 828,195.7 830,195.1 832,194.1 834,193.4 836,193.1 838,193.7 840,193.2 842,194.2 844,193.2 846,196.4 848,194.1 850,194.1 852,192.6 854,185.5 856,180.5 858,173.3 860,166.4 862,160.3 864,167.4 866,172.3 868,178.7 870,185.7 872,192.9 874,193.6 876,194.0 878,194.1 880,195.9 882,195.6 884,196.9 886,196.3 888,195.7 890,195.7 892,194.5 894,192.6 896,192.6 898,192.8 900,194.6 902,196.7 904,196.2 906,196.6 908,194.6 910,193.4 912,192.4 914,194.3 916,195.1 918,194.3 920,196.6 922,197.1 924,198.5 926,199.8 928,200.6 930,199.2 932,202.1 934,201.4 936,206.3 938,212.1 940,213.5 942,202.9 944,187.6 946,173.5 948,166.4 950,169.8 952,173.5 954,166.4 956,164.9 958,176.3 960,191.2 962,203.1 964,187.6 966,161.0 968,165.0 970,176.1 972,189.6 974,203.7 976,212.5 978,213.5 980,213.4 982,211.6 984,205.1 986,201.1 988,199.3 990,200.8 992,198.8 994,199.1 996,199.3 998,199.5 1000,197.5 1002,197.5 1004,196.2 1006,195.3 1008,194.4 1010,194.1 1012,193.9 1014,192.9 1016,192.6 1018,193.7 1020,194.4 1022,194.5 1024,195.9 1026,193.4 1028,190.6 1030,193.4 1032,194.8 1034,195.7 1036,195.6 1038,195.0 1040,193.7 1042,194.1 1044,193.9 1046,192.3 1048,192.4 1050,193.3 1052,193.6 1054,192.3 1056,192.5 1058,192.6 1060,192.7 1062,195.2 1064,195.6 1066,195.5 1068,193.5 1070,191.8 1072,191.1 1074,192.4 1076,192.1 1078,192.5 1080,193.3 1082,193.9 1084,194.8 1086,197.3 1088,195.5 1090,194.9 1092,194.1 1094,195.5 1096,196.0 1098,195.6 1100,196.4 1102,195.1 1104,195.8 1106,197.0 1108,194.5 1110,195.2 1112,194.8 1114,198.2 1116,197.9 1118,195.8 1120,195.0 1122,196.0 1124,195.9 1126,196.0 1128,196.1 1130,197.9 1132,197.8 1134,197.7 1136,196.8 1138,198.1 1140,196.2 1142,196.3 1144,193.3 1146,193.4 1148,193.8 1150,195.0 1152,195.2 1154,194.3 1156,193.0 1158,193.2 1160,193.5 1162,192.5 1164,191.7 1166,191.7 1168,189.8 1170,190.3 1172,190.7 1174,194.0 1176,192.0 1178,191.8 1180,192.4 1182,192.7 1184,191.3 1186,191.2 1188,190.0 1190,191.5 1192,191.0 1194,189.5 1196,189.8 1198,191.4 1200,190.7 1202,190.0 1204,188.8 1206,190.5 1208,191.7 1210,191.6 1212,189.6 1214,190.3 1216,189.3 1218,191.9 1220,192.2 1222,191.5 1224,191.9 1226,192.8 1228,194.3 1230,194.1 1232,194.7 1234,194.4 1236,192.8 1238,194.3 1240,193.5 1242,194.4 1244,195.6 1246,193.5 1248,196.6 1250,196.9 1252,198.1 1254,196.1 1256,195.2 1258,196.2 1260,197.4" fill="none" stroke="#d81810" stroke-width="1.05" stroke-opacity="0.75"/>
<polyline points="768,193.7 770,195.4 772,195.7 774,194.3 776,191.0 778,186.6 780,185.0 782,188.8 784,193.1 786,196.1 788,196.4 790,195.7 792,194.5 794,193.3 796,189.6 798,191.7 800,194.0 802,192.3 804,192.6 806,190.5 808,192.0 810,189.8 812,179.9 814,166.0 816,156.3 818,163.3 820,178.4 822,190.7 824,195.0 826,193.7 828,194.1 830,192.7 832,192.9 834,192.5 836,193.0 838,190.4 840,190.7 842,193.7 844,191.5 846,191.6 848,194.7 850,192.0 852,193.8 854,193.3 856,194.5 858,195.1 860,195.7 862,194.8 864,196.4 866,195.4 868,194.3 870,192.7 872,193.8 874,196.5 876,195.3 878,192.6 880,194.3 882,195.2 884,195.3 886,197.1 888,195.5 890,195.6 892,197.4 894,195.9 896,195.4 898,194.2 900,194.3 902,194.2 904,193.8 906,191.9 908,194.3 910,195.9 912,194.6 914,194.3 916,196.5 918,197.4 920,196.3 922,198.6 924,199.3 926,199.3 928,198.8 930,197.0 932,197.1 934,198.0 936,199.0 938,201.6 940,205.9 942,203.0 944,196.6 946,187.0 948,180.5 950,177.3 952,180.0 954,180.9 956,179.8 958,181.5 960,187.8 962,198.2 964,200.3 966,183.4 968,175.0 970,179.1 972,185.3 974,192.3 976,198.9 978,204.4 980,204.4 982,201.7 984,200.0 986,197.9 988,195.4 990,195.6 992,195.9 994,195.4 996,194.1 998,194.9 1000,193.8 1002,195.0 1004,193.4 1006,192.6 1008,191.9 1010,192.3 1012,192.5 1014,194.7 1016,194.1 1018,192.1 1020,193.1 1022,192.4 1024,191.5 1026,190.7 1028,192.3 1030,191.2 1032,193.0 1034,190.8 1036,189.1 1038,188.2 1040,189.3 1042,189.3 1044,190.4 1046,191.3 1048,190.6 1050,192.3 1052,191.5 1054,192.5 1056,191.9 1058,192.8 1060,192.2 1062,191.1 1064,191.0 1066,193.7 1068,193.5 1070,194.1 1072,194.2 1074,193.7 1076,193.1 1078,193.0 1080,194.2 1082,193.9 1084,193.4 1086,193.7 1088,193.2 1090,192.7 1092,194.0 1094,193.0 1096,195.0 1098,194.7 1100,196.6 1102,194.5 1104,195.9 1106,196.9 1108,196.8 1110,195.4 1112,194.5 1114,194.3 1116,194.6 1118,196.4 1120,194.3 1122,196.7 1124,194.9 1126,194.7 1128,195.6 1130,195.4 1132,195.2 1134,194.4 1136,192.2 1138,193.5 1140,193.6 1142,192.0 1144,192.3 1146,192.0 1148,191.4 1150,192.4 1152,191.7 1154,190.0 1156,193.0 1158,192.2 1160,191.8 1162,191.1 1164,190.5 1166,189.5 1168,190.5 1170,190.5 1172,191.3 1174,190.0 1176,192.1 1178,190.5 1180,192.5 1182,193.1 1184,193.4 1186,192.3 1188,192.2 1190,192.4 1192,189.8 1194,189.6 1196,189.2 1198,192.0 1200,192.1 1202,191.6 1204,192.5 1206,191.5 1208,192.0 1210,190.9 1212,192.7 1214,192.6 1216,192.3 1218,193.9 1220,192.4 1222,191.2 1224,192.5 1226,191.5 1228,191.5 1230,192.8 1232,193.8 1234,194.8 1236,192.7 1238,193.4 1240,194.0 1242,193.5 1244,193.2 1246,195.1 1248,193.9 1250,193.9 1252,195.1 1254,195.4 1256,197.0 1258,196.8 1260,196.8" fill="none" stroke="#d81810" stroke-width="1.05" stroke-opacity="0.75"/>
<polyline points="768,192.7 770,192.3 772,192.5 774,192.3 776,193.4 778,194.7 780,195.2 782,194.5 784,194.4 786,193.7 788,194.0 790,193.6 792,194.3 794,194.2 796,193.3 798,192.7 800,192.4 802,188.0 804,182.5 806,178.4 808,172.9 810,169.3 812,165.8 814,167.7 816,163.2 818,159.1 820,155.3 822,159.1 824,170.6 826,179.7 828,188.1 830,196.2 832,195.7 834,195.5 836,196.5 838,195.1 840,195.5 842,195.6 844,196.8 846,196.6 848,198.7 850,198.4 852,197.6 854,194.1 856,190.8 858,185.0 860,184.3 862,187.3 864,191.2 866,196.7 868,199.5 870,198.5 872,198.2 874,197.7 876,200.0 878,200.5 880,198.7 882,197.6 884,196.8 886,196.0 888,198.4 890,198.0 892,197.4 894,199.1 896,198.9 898,199.7 900,198.2 902,195.7 904,196.4 906,195.3 908,195.9 910,196.7 912,196.5 914,196.8 916,197.7 918,197.8 920,194.9 922,195.8 924,196.7 926,197.8 928,198.7 930,198.2 932,198.3 934,198.9 936,199.9 938,203.7 940,210.1 942,213.5 944,203.5 946,187.3 948,175.3 950,167.9 952,169.2 954,174.1 956,170.7 958,166.4 960,174.2 962,187.9 964,198.2 966,193.2 968,166.0 970,164.8 972,174.2 974,186.8 976,200.1 978,209.7 980,213.5 982,213.5 984,212.1 986,205.2 988,201.5 990,197.4 992,197.0 994,197.3 996,195.2 998,195.5 1000,193.3 1002,193.4 1004,195.7 1006,193.5 1008,194.2 1010,194.2 1012,192.0 1014,193.2 1016,194.5 1018,190.9 1020,190.5 1022,190.9 1024,191.7 1026,190.2 1028,191.8 1030,190.8 1032,190.9 1034,190.7 1036,190.4 1038,190.3 1040,192.1 1042,192.3 1044,194.0 1046,193.3 1048,194.7 1050,195.1 1052,193.0 1054,193.1 1056,194.0 1058,191.3 1060,192.7 1062,192.7 1064,193.0 1066,192.8 1068,196.0 1070,195.8 1072,197.1 1074,197.0 1076,196.4 1078,193.5 1080,195.2 1082,193.2 1084,194.0 1086,196.1 1088,197.4 1090,198.0 1092,197.2 1094,195.6 1096,192.4 1098,193.7 1100,195.9 1102,195.5 1104,195.6 1106,195.5 1108,195.3 1110,197.4 1112,196.8 1114,194.7 1116,194.1 1118,194.6 1120,196.7 1122,195.3 1124,193.4 1126,194.4 1128,194.6 1130,193.0 1132,191.1 1134,191.4 1136,191.2 1138,191.3 1140,191.3 1142,191.6 1144,191.5 1146,190.3 1148,193.0 1150,192.2 1152,191.9 1154,193.6 1156,194.2 1158,191.6 1160,190.2 1162,191.0 1164,191.0 1166,190.2 1168,192.2 1170,191.6 1172,190.0 1174,189.4 1176,189.7 1178,191.6 1180,190.0 1182,192.5 1184,192.9 1186,194.5 1188,196.8 1190,195.5 1192,195.9 1194,196.0 1196,193.3 1198,192.6 1200,191.7 1202,193.3 1204,193.9 1206,196.2 1208,196.7 1210,193.4 1212,193.2 1214,193.3 1216,193.5 1218,195.4 1220,195.4 1222,193.5 1224,193.6 1226,193.9 1228,194.8 1230,194.3 1232,194.4 1234,194.9 1236,194.8 1238,196.2 1240,195.5 1242,196.9 1244,197.0 1246,197.5 1248,197.9 1250,196.8 1252,197.7 1254,198.0 1256,197.2 1258,196.8 1260,196.7" fill="none" stroke="#d81810" stroke-width="1.05" stroke-opacity="0.75"/>
<polyline points="768,199.6 770,200.3 772,200.4 774,198.3 776,200.0 778,198.4 780,196.4 782,196.9 784,198.2 786,199.8 788,200.7 790,198.5 792,199.1 794,198.5 796,202.0 798,202.3 800,201.6 802,200.3 804,199.1 806,199.5 808,200.6 810,201.6 812,198.4 814,194.8 816,190.7 818,189.9 820,192.6 822,195.6 824,201.3 826,201.5 828,202.5 830,202.0 832,203.1 834,202.1 836,202.8 838,202.8 840,202.3 842,202.7 844,203.3 846,201.9 848,201.7 850,202.4 852,201.9 854,200.9 856,201.3 858,200.9 860,200.8 862,199.9 864,199.7 866,201.9 868,202.0 870,203.2 872,201.5 874,200.9 876,202.0 878,201.3 880,202.4 882,201.0 884,200.0 886,199.1 888,198.4 890,200.2 892,199.6 894,200.5 896,199.1 898,200.6 900,200.1 902,199.7 904,199.7 906,199.7 908,201.4 910,198.6 912,198.3 914,200.3 916,199.0 918,199.7 920,201.4 922,201.5 924,202.7 926,203.2 928,203.7 930,204.5 932,205.6 934,201.9 936,200.5 938,201.7 940,207.9 942,208.3 944,208.4 946,205.0 948,196.1 950,189.1 952,187.7 954,187.6 956,190.5 958,187.1 960,188.3 962,195.6 964,201.1 966,202.8 968,189.3 970,182.7 972,186.7 974,191.5 976,198.8 978,205.2 980,208.9 982,211.3 984,211.1 986,206.8 988,204.5 990,201.7 992,201.4 994,200.0 996,202.4 998,199.9 1000,199.7 1002,199.0 1004,200.6 1006,196.7 1008,196.2 1010,196.8 1012,199.2 1014,201.3 1016,199.5 1018,197.9 1020,196.4 1022,197.1 1024,196.0 1026,198.6 1028,198.3 1030,197.5 1032,198.1 1034,198.6 1036,198.4 1038,198.6 1040,197.8 1042,197.0 1044,198.2 1046,198.3 1048,200.0 1050,198.8 1052,198.2 1054,197.5 1056,198.9 1058,199.2 1060,201.8 1062,200.6 1064,199.6 1066,199.1 1068,198.4 1070,199.0 1072,200.5 1074,200.3 1076,199.8 1078,200.0 1080,200.9 1082,200.4 1084,200.1 1086,200.7 1088,200.9 1090,200.3 1092,203.0 1094,200.3 1096,200.0 1098,199.9 1100,200.4 1102,199.0 1104,197.4 1106,197.2 1108,198.1 1110,197.0 1112,196.8 1114,198.5 1116,198.2 1118,197.8 1120,196.0 1122,196.8 1124,196.0 1126,196.9 1128,195.0 1130,195.6 1132,195.9 1134,196.0 1136,196.6 1138,196.4 1140,197.3 1142,195.2 1144,195.5 1146,196.5 1148,196.1 1150,194.9 1152,193.6 1154,192.5 1156,194.1 1158,195.8 1160,196.3 1162,194.3 1164,194.8 1166,196.0 1168,198.6 1170,199.6 1172,199.4 1174,196.5 1176,194.2 1178,196.9 1180,197.1 1182,195.9 1184,197.3 1186,195.9 1188,198.2 1190,197.2 1192,197.6 1194,200.0 1196,199.4 1198,199.3 1200,201.3 1202,200.5 1204,203.2 1206,201.9 1208,200.4 1210,201.3 1212,201.4 1214,202.4 1216,201.4 1218,200.5 1220,199.1 1222,199.3 1224,200.3 1226,198.9 1228,199.1 1230,199.5 1232,199.3 1234,199.4 1236,199.9 1238,197.7 1240,199.6 1242,199.0 1244,197.6 1246,198.9 1248,198.9 1250,199.3 1252,199.5 1254,198.9 1256,200.3 1258,199.9 1260,199.0" fill="none" stroke="#d81810" stroke-width="1.05" stroke-opacity="0.75"/>
<polyline points="768,192.7 770,192.8 772,195.0 774,195.1 776,196.0 778,195.7 780,196.3 782,196.6 784,192.9 786,193.5 788,195.1 790,195.4 792,193.1 794,194.3 796,196.2 798,192.8 800,188.6 802,185.6 804,185.1 806,184.9 808,187.8 810,189.7 812,192.0 814,192.6 816,194.6 818,193.0 820,192.4 822,193.7 824,192.2 826,191.4 828,188.9 830,185.7 832,183.8 834,179.4 836,179.0 838,183.7 840,187.0 842,191.5 844,195.3 846,194.2 848,193.2 850,193.2 852,195.2 854,195.4 856,195.2 858,193.6 860,193.7 862,193.5 864,194.2 866,195.0 868,196.5 870,196.6 872,196.3 874,192.8 876,193.7 878,193.1 880,192.7 882,191.9 884,191.6 886,193.8 888,192.1 890,190.7 892,191.5 894,192.5 896,191.6 898,192.8 900,192.8 902,192.1 904,191.6 906,192.6 908,192.8 910,192.6 912,193.2 914,193.9 916,195.7 918,194.8 920,195.7 922,195.2 924,196.3 926,195.6 928,195.9 930,197.9 932,198.2 934,198.5 936,201.4 938,206.4 940,209.8 942,201.6 944,189.4 946,175.0 948,167.0 950,166.9 952,172.3 954,170.4 956,170.1 958,176.5 960,187.0 962,194.8 964,193.5 966,167.4 968,169.2 970,174.4 972,186.2 974,196.4 976,205.8 978,208.8 980,210.0 982,208.3 984,201.2 986,196.5 988,193.8 990,194.1 992,192.5 994,193.0 996,195.9 998,193.4 1000,192.8 1002,196.0 1004,194.0 1006,189.1 1008,190.9 1010,191.1 1012,188.2 1014,190.0 1016,191.0 1018,189.3 1020,188.2 1022,189.7 1024,188.2 1026,187.3 1028,188.1 1030,186.8 1032,189.6 1034,189.5 1036,190.3 1038,191.2 1040,193.5 1042,192.4 1044,193.0 1046,190.9 1048,192.7 1050,194.0 1052,193.3 1054,191.4 1056,192.4 1058,194.9 1060,194.4 1062,192.1 1064,192.2 1066,191.6 1068,191.8 1070,193.2 1072,192.6 1074,194.3 1076,193.6 1078,193.1 1080,194.1 1082,192.9 1084,191.1 1086,193.9 1088,193.3 1090,192.5 1092,192.7 1094,193.5 1096,192.5 1098,193.8 1100,191.4 1102,192.2 1104,190.1 1106,189.0 1108,189.1 1110,187.7 1112,188.2 1114,189.6 1116,188.8 1118,187.9 1120,189.1 1122,187.0 1124,185.3 1126,187.9 1128,187.8 1130,188.9 1132,187.2 1134,188.8 1136,190.6 1138,190.2 1140,190.3 1142,188.7 1144,189.0 1146,189.0 1148,189.1 1150,188.6 1152,189.2 1154,190.3 1156,189.2 1158,189.2 1160,190.6 1162,190.7 1164,191.9 1166,190.3 1168,191.2 1170,190.5 1172,190.4 1174,192.0 1176,193.4 1178,193.8 1180,191.0 1182,191.3 1184,192.8 1186,195.3 1188,192.6 1190,192.8 1192,190.5 1194,192.4 1196,194.1 1198,194.8 1200,192.7 1202,194.2 1204,192.8 1206,192.3 1208,192.0 1210,193.1 1212,194.4 1214,192.3 1216,192.8 1218,196.5 1220,195.3 1222,192.9 1224,189.8 1226,188.5 1228,191.4 1230,192.7 1232,193.0 1234,193.6 1236,193.0 1238,192.2 1240,190.8 1242,189.8 1244,190.6 1246,191.9 1248,193.2 1250,192.5 1252,192.0 1254,190.1 1256,188.6 1258,187.5 1260,191.2" fill="none" stroke="#d81810" stroke-width="1.05" stroke-opacity="0.75"/>
<polyline points="768,194.1 770,196.2 772,194.6 774,193.3 776,192.6 778,193.2 780,192.4 782,193.0 784,193.6 786,193.6 788,194.4 790,195.1 792,195.6 794,195.9 796,196.5 798,195.8 800,197.7 802,194.8 804,195.0 806,192.8 808,192.3 810,194.7 812,195.5 814,195.8 816,194.3 818,194.3 820,195.3 822,193.7 824,194.3 826,194.4 828,194.6 830,194.2 832,194.3 834,194.7 836,194.3 838,194.0 840,194.8 842,193.9 844,195.3 846,194.8 848,193.0 850,193.7 852,195.1 854,191.8 856,192.5 858,193.8 860,193.8 862,192.2 864,194.6 866,194.1 868,193.2 870,191.3 872,192.4 874,191.7 876,192.9 878,192.3 880,193.1 882,191.0 884,192.0 886,190.3 888,192.5 890,191.8 892,190.4 894,189.7 896,189.9 898,193.4 900,198.3 902,207.6 904,202.5 906,198.4 908,195.2 910,193.4 912,194.6 914,196.2 916,196.9 918,199.0 920,197.3 922,197.4 924,197.0 926,197.3 928,197.3 930,198.1 932,198.0 934,197.0 936,197.1 938,200.4 940,209.9 942,213.5 944,210.1 946,197.2 948,180.9 950,167.5 952,163.7 954,168.9 956,171.3 958,162.1 960,167.3 962,181.6 964,197.4 966,199.8 968,170.5 970,157.3 972,165.3 974,179.1 976,192.3 978,204.7 980,212.4 982,213.5 984,213.2 986,208.0 988,201.6 990,196.7 992,197.5 994,195.1 996,197.9 998,195.5 1000,192.3 1002,193.4 1004,193.1 1006,193.2 1008,194.0 1010,192.4 1012,190.7 1014,191.1 1016,190.0 1018,192.9 1020,195.5 1022,197.9 1024,201.0 1026,200.3 1028,198.4 1030,196.2 1032,196.7 1034,194.3 1036,195.9 1038,195.3 1040,193.7 1042,193.8 1044,194.5 1046,196.5 1048,196.6 1050,196.4 1052,194.6 1054,193.2 1056,192.1 1058,193.3 1060,194.9 1062,192.7 1064,190.5 1066,192.2 1068,192.5 1070,192.2 1072,191.5 1074,193.0 1076,192.2 1078,190.7 1080,191.8 1082,191.7 1084,192.1 1086,188.6 1088,190.5 1090,191.1 1092,190.8 1094,189.9 1096,188.6 1098,190.7 1100,191.3 1102,191.8 1104,191.9 1106,190.0 1108,189.8 1110,188.2 1112,190.4 1114,189.3 1116,188.0 1118,188.2 1120,189.5 1122,190.2 1124,188.0 1126,187.7 1128,189.5 1130,190.6 1132,189.2 1134,188.7 1136,189.8 1138,190.0 1140,192.5 1142,192.8 1144,190.7 1146,190.7 1148,192.1 1150,193.6 1152,194.3 1154,193.7 1156,192.3 1158,190.9 1160,191.4 1162,194.6 1164,195.0 1166,194.2 1168,193.2 1170,193.4 1172,193.7 1174,194.4 1176,195.6 1178,192.6 1180,192.3 1182,192.7 1184,193.5 1186,194.8 1188,193.9 1190,195.9 1192,196.5 1194,195.2 1196,194.7 1198,194.9 1200,193.4 1202,193.0 1204,193.2 1206,193.5 1208,193.8 1210,194.7 1212,192.0 1214,193.2 1216,193.2 1218,192.8 1220,193.4 1222,191.9 1224,191.0 1226,193.8 1228,191.7 1230,190.7 1232,188.9 1234,188.1 1236,190.4 1238,190.8 1240,191.9 1242,191.2 1244,189.6 1246,190.4 1248,187.2 1250,187.5 1252,189.5 1254,190.3 1256,190.9 1258,189.4 1260,190.1" fill="none" stroke="#d81810" stroke-width="1.05" stroke-opacity="0.75"/>
<polyline points="768,200.5 770,200.6 772,200.8 774,200.4 776,199.2 778,198.5 780,199.6 782,199.1 784,199.8 786,198.7 788,197.1 790,197.4 792,198.3 794,198.8 796,198.4 798,197.5 800,200.8 802,204.0 804,207.9 806,206.2 808,202.7 810,198.5 812,197.1 814,195.2 816,195.9 818,194.5 820,192.8 822,193.5 824,195.3 826,194.3 828,194.4 830,194.7 832,194.3 834,194.6 836,195.7 838,194.3 840,196.4 842,196.0 844,195.3 846,196.6 848,194.3 850,194.1 852,195.7 854,194.5 856,192.8 858,192.9 860,193.0 862,192.7 864,193.5 866,195.0 868,197.3 870,196.3 872,196.0 874,198.9 876,198.6 878,198.8 880,196.5 882,198.2 884,196.7 886,195.6 888,196.6 890,195.9 892,197.1 894,195.8 896,195.3 898,195.4 900,196.1 902,198.0 904,196.9 906,198.2 908,197.1 910,197.6 912,198.7 914,196.0 916,197.5 918,197.0 920,198.1 922,198.4 924,201.7 926,201.0 928,200.8 930,201.7 932,203.3 934,203.5 936,206.2 938,211.4 940,213.5 942,212.6 944,196.7 946,177.5 948,165.5 950,165.9 952,174.6 954,172.8 956,163.1 958,168.7 960,185.6 962,202.3 964,208.9 966,174.3 968,162.8 970,168.2 972,183.1 974,199.0 976,212.5 978,213.5 980,213.5 982,213.5 984,210.3 986,205.3 988,202.8 990,202.1 992,200.9 994,199.5 996,198.5 998,199.0 1000,195.9 1002,197.1 1004,198.0 1006,198.1 1008,195.7 1010,193.5 1012,194.4 1014,196.5 1016,195.1 1018,195.1 1020,195.7 1022,198.8 1024,201.7 1026,200.9 1028,199.3 1030,199.0 1032,197.2 1034,198.4 1036,198.8 1038,198.5 1040,198.3 1042,198.8 1044,198.6 1046,198.9 1048,197.7 1050,197.4 1052,197.5 1054,194.5 1056,194.3 1058,195.4 1060,198.6 1062,198.9 1064,197.1 1066,197.7 1068,196.5 1070,196.3 1072,195.2 1074,195.0 1076,195.2 1078,195.4 1080,195.7 1082,196.3 1084,194.5 1086,193.4 1088,191.9 1090,193.0 1092,192.8 1094,192.5 1096,193.2 1098,194.1 1100,194.0 1102,194.6 1104,193.1 1106,193.5 1108,194.8 1110,191.9 1112,193.5 1114,193.5 1116,195.1 1118,193.2 1120,193.6 1122,191.2 1124,195.0 1126,196.2 1128,194.9 1130,194.5 1132,194.9 1134,196.7 1136,198.0 1138,196.1 1140,195.2 1142,195.0 1144,195.3 1146,195.8 1148,196.4 1150,198.3 1152,197.7 1154,195.3 1156,194.8 1158,194.0 1160,195.7 1162,196.4 1164,198.0 1166,197.4 1168,196.7 1170,198.7 1172,197.2 1174,197.7 1176,198.2 1178,199.7 1180,197.1 1182,200.2 1184,201.7 1186,198.3 1188,197.6 1190,196.0 1192,194.4 1194,194.5 1196,195.2 1198,196.4 1200,199.5 1202,199.3 1204,197.8 1206,196.9 1208,197.0 1210,196.4 1212,193.8 1214,194.1 1216,194.6 1218,194.5 1220,194.8 1222,193.8 1224,193.7 1226,191.8 1228,192.6 1230,191.4 1232,193.7 1234,193.6 1236,193.4 1238,193.2 1240,193.1 1242,194.8 1244,198.3 1246,200.5 1248,201.9 1250,205.4 1252,200.4 1254,197.5 1256,197.8 1258,193.3 1260,195.3" fill="none" stroke="#d81810" stroke-width="1.05" stroke-opacity="0.75"/>
<polyline points="768,197.3 770,196.9 772,197.4 774,196.3 776,196.5 778,196.0 780,195.4 782,194.5 784,195.4 786,194.5 788,196.7 790,197.1 792,195.8 794,195.9 796,196.7 798,196.1 800,197.5 802,198.8 804,201.5 806,198.4 808,196.9 810,194.8 812,193.4 814,193.6 816,192.4 818,193.2 820,194.3 822,194.4 824,192.9 826,195.9 828,195.3 830,194.2 832,193.8 834,194.0 836,193.5 838,194.2 840,195.1 842,194.7 844,195.2 846,194.9 848,193.6 850,192.8 852,192.7 854,195.9 856,195.4 858,195.4 860,195.4 862,195.6 864,195.5 866,196.2 868,196.6 870,195.6 872,196.0 874,196.5 876,196.8 878,197.8 880,198.0 882,196.4 884,195.3 886,196.1 888,196.6 890,195.9 892,195.0 894,194.9 896,195.7 898,196.6 900,196.0 902,195.8 904,197.3 906,195.5 908,195.6 910,195.8 912,194.6 914,195.2 916,196.5 918,196.7 920,196.8 922,197.4 924,198.2 926,197.1 928,197.7 930,199.7 932,198.2 934,200.8 936,204.7 938,209.1 940,211.3 942,213.5 944,210.8 946,194.6 948,177.3 950,164.8 952,163.3 954,170.5 956,169.7 958,163.3 960,170.7 962,185.6 964,200.0 966,200.2 968,165.2 970,162.2 972,168.0 974,181.7 976,197.3 978,211.4 980,213.5 982,213.5 984,212.6 986,207.1 988,202.0 990,197.5 992,197.6 994,196.6 996,198.5 998,199.8 1000,199.9 1002,197.8 1004,196.7 1006,194.2 1008,195.9 1010,196.9 1012,197.3 1014,195.2 1016,195.5 1018,195.5 1020,197.1 1022,197.2 1024,196.9 1026,195.6 1028,194.6 1030,196.1 1032,195.3 1034,197.6 1036,195.1 1038,195.6 1040,194.6 1042,193.1 1044,190.5 1046,189.9 1048,192.1 1050,192.1 1052,193.4 1054,194.6 1056,194.7 1058,192.6 1060,193.3 1062,192.3 1064,193.2 1066,191.8 1068,190.4 1070,191.7 1072,192.4 1074,191.9 1076,190.7 1078,191.0 1080,190.7 1082,191.2 1084,190.6 1086,190.4 1088,190.9 1090,191.0 1092,190.8 1094,193.5 1096,194.0 1098,192.5 1100,195.1 1102,191.6 1104,193.5 1106,193.4 1108,192.5 1110,191.0 1112,188.9 1114,190.5 1116,191.3 1118,191.4 1120,191.9 1122,194.6 1124,194.1 1126,194.5 1128,192.4 1130,194.2 1132,197.0 1134,196.4 1136,197.1 1138,195.8 1140,194.4 1142,195.0 1144,193.4 1146,195.1 1148,196.0 1150,198.1 1152,199.6 1154,203.8 1156,208.3 1158,205.8 1160,202.6 1162,201.0 1164,195.5 1166,195.0 1168,194.0 1170,194.7 1172,196.1 1174,196.6 1176,195.5 1178,195.3 1180,197.1 1182,195.7 1184,195.3 1186,195.6 1188,195.4 1190,193.7 1192,195.3 1194,195.8 1196,194.8 1198,194.2 1200,194.2 1202,194.3 1204,196.4 1206,192.6 1208,190.3 1210,191.2 1212,191.5 1214,192.4 1216,189.0 1218,190.2 1220,189.2 1222,190.1 1224,190.4 1226,189.8 1228,191.3 1230,190.5 1232,191.7 1234,193.1 1236,194.8 1238,192.1 1240,191.5 1242,192.4 1244,191.2 1246,192.0 1248,191.2 1250,192.6 1252,190.4 1254,189.4 1256,193.4 1258,194.2 1260,191.9" fill="none" stroke="#d81810" stroke-width="1.05" stroke-opacity="0.75"/>
<polyline points="768,189.2 770,190.5 772,190.5 774,190.1 776,188.6 778,188.6 780,188.4 782,186.7 784,186.8 786,186.6 788,186.6 790,189.8 792,190.4 794,189.3 796,188.8 798,189.6 800,189.0 802,187.6 804,189.7 806,189.0 808,188.4 810,187.7 812,186.8 814,185.3 816,185.7 818,187.2 820,186.9 822,187.9 824,189.0 826,187.0 828,189.2 830,190.6 832,189.9 834,188.8 836,190.5 838,188.9 840,188.6 842,188.1 844,190.2 846,190.5 848,191.0 850,191.3 852,188.8 854,188.6 856,190.2 858,189.8 860,189.5 862,191.0 864,190.1 866,190.7 868,190.2 870,191.6 872,193.0 874,192.3 876,194.1 878,192.3 880,195.0 882,194.1 884,194.8 886,191.8 888,192.7 890,190.9 892,189.4 894,192.5 896,191.3 898,192.8 900,191.9 902,189.0 904,188.6 906,188.9 908,190.4 910,191.3 912,192.4 914,192.7 916,190.2 918,191.5 920,191.1 922,193.3 924,194.6 926,195.7 928,199.7 930,199.8 932,201.3 934,201.1 936,205.2 938,211.6 940,209.4 942,191.7 944,174.5 946,163.2 948,159.7 950,166.3 952,172.1 954,168.2 956,169.6 958,181.3 960,194.6 962,199.2 964,170.0 966,154.5 968,160.7 970,172.9 972,188.7 974,201.9 976,209.5 978,211.6 980,208.8 982,204.8 984,200.0 986,192.7 988,190.5 990,190.5 992,189.9 994,189.2 996,188.6 998,188.2 1000,188.4 1002,189.5 1004,189.8 1006,192.8 1008,191.4 1010,189.5 1012,188.6 1014,190.4 1016,191.2 1018,189.5 1020,189.0 1022,186.0 1024,186.9 1026,187.3 1028,187.5 1030,187.8 1032,187.8 1034,189.0 1036,187.2 1038,188.3 1040,186.3 1042,186.4 1044,184.9 1046,184.7 1048,185.0 1050,186.6 1052,187.0 1054,186.0 1056,187.3 1058,186.5 1060,183.1 1062,182.8 1064,186.0 1066,183.5 1068,183.6 1070,184.0 1072,186.6 1074,184.2 1076,184.9 1078,185.1 1080,186.1 1082,184.8 1084,183.7 1086,184.9 1088,186.0 1090,185.4 1092,186.6 1094,186.4 1096,185.9 1098,188.5 1100,188.6 1102,185.5 1104,186.0 1106,185.6 1108,186.2 1110,187.2 1112,190.3 1114,186.9 1116,189.3 1118,189.8 1120,189.0 1122,188.7 1124,188.6 1126,190.0 1128,190.5 1130,190.0 1132,189.5 1134,189.5 1136,189.1 1138,191.0 1140,190.7 1142,188.6 1144,189.8 1146,188.7 1148,188.5 1150,189.0 1152,188.2 1154,188.1 1156,188.9 1158,190.2 1160,189.1 1162,190.7 1164,189.5 1166,189.8 1168,188.9 1170,189.8 1172,189.0 1174,190.5 1176,189.1 1178,189.0 1180,187.3 1182,188.1 1184,187.4 1186,186.0 1188,183.8 1190,184.8 1192,185.5 1194,186.9 1196,188.3 1198,188.0 1200,186.1 1202,187.3 1204,187.6 1206,184.9 1208,186.4 1210,185.9 1212,184.7 1214,186.7 1216,185.0 1218,185.1 1220,184.8 1222,184.1 1224,183.1 1226,182.6 1228,183.5 1230,184.8 1232,184.7 1234,187.4 1236,186.7 1238,187.4 1240,187.2 1242,186.8 1244,186.6 1246,189.4 1248,188.5 1250,187.8 1252,188.2 1254,187.0 1256,188.8 1258,189.2 1260,189.2" fill="none" stroke="#d81810" stroke-width="1.05" stroke-opacity="0.75"/>
<polyline points="768,193.0 770,193.8 772,193.5 774,194.5 776,194.2 778,193.5 780,194.1 782,195.0 784,198.0 786,196.3 788,195.4 790,193.6 792,194.3 794,193.1 796,195.2 798,193.5 800,194.6 802,195.1 804,195.8 806,195.6 808,193.6 810,193.4 812,195.7 814,190.8 816,194.3 818,194.7 820,197.0 822,198.3 824,200.6 826,198.8 828,196.3 830,196.9 832,198.8 834,197.5 836,198.7 838,196.6 840,196.2 842,196.1 844,196.5 846,197.7 848,198.6 850,198.3 852,196.9 854,197.8 856,197.8 858,198.5 860,196.8 862,195.8 864,197.8 866,197.9 868,198.4 870,197.3 872,198.2 874,198.0 876,198.6 878,199.3 880,198.8 882,198.2 884,198.4 886,198.6 888,198.8 890,197.0 892,194.2 894,196.4 896,195.9 898,194.5 900,195.4 902,195.3 904,195.2 906,195.1 908,195.9 910,198.9 912,197.8 914,196.6 916,196.9 918,197.3 920,197.9 922,198.2 924,198.9 926,198.1 928,199.3 930,198.3 932,198.0 934,201.5 936,200.5 938,204.8 940,209.5 942,213.3 944,204.1 946,190.1 948,176.4 950,168.3 952,172.1 954,176.0 956,171.0 958,171.3 960,182.9 962,194.9 964,204.4 966,193.4 968,165.3 970,167.9 972,177.0 974,189.1 976,202.8 978,211.7 980,213.5 982,212.7 984,210.8 986,203.0 988,198.9 990,199.1 992,197.9 994,198.9 996,199.0 998,196.1 1000,195.7 1002,197.1 1004,195.7 1006,196.7 1008,195.5 1010,197.6 1012,195.1 1014,195.5 1016,194.7 1018,194.3 1020,192.9 1022,192.2 1024,193.1 1026,192.3 1028,193.6 1030,191.1 1032,191.8 1034,191.1 1036,190.3 1038,190.7 1040,192.0 1042,191.6 1044,192.9 1046,191.5 1048,190.9 1050,190.7 1052,189.3 1054,190.7 1056,190.7 1058,190.5 1060,190.4 1062,192.6 1064,193.4 1066,192.1 1068,193.3 1070,192.2 1072,191.1 1074,190.1 1076,191.9 1078,192.8 1080,192.2 1082,190.9 1084,192.5 1086,193.2 1088,193.8 1090,193.4 1092,195.0 1094,194.6 1096,193.3 1098,193.9 1100,195.5 1102,193.7 1104,193.6 1106,195.6 1108,195.2 1110,199.1 1112,198.2 1114,198.5 1116,198.8 1118,196.9 1120,197.0 1122,196.7 1124,196.0 1126,197.1 1128,196.7 1130,197.1 1132,197.7 1134,196.7 1136,197.5 1138,196.7 1140,194.5 1142,197.8 1144,196.6 1146,197.1 1148,197.0 1150,197.1 1152,196.0 1154,197.0 1156,198.3 1158,195.9 1160,193.5 1162,194.5 1164,193.4 1166,194.3 1168,191.6 1170,191.8 1172,192.6 1174,192.8 1176,192.8 1178,189.3 1180,191.6 1182,191.9 1184,192.2 1186,190.9 1188,192.4 1190,191.5 1192,191.0 1194,191.9 1196,189.4 1198,188.2 1200,188.7 1202,190.9 1204,192.0 1206,191.8 1208,192.9 1210,192.9 1212,191.3 1214,191.5 1216,191.1 1218,192.4 1220,194.8 1222,192.3 1224,192.7 1226,193.5 1228,192.6 1230,192.3 1232,192.7 1234,192.7 1236,195.4 1238,192.2 1240,194.2 1242,193.1 1244,192.7 1246,196.4 1248,195.1 1250,195.0 1252,192.8 1254,195.0 1256,194.6 1258,195.2 1260,196.3" fill="none" stroke="#ff1a10" stroke-width="1.05" stroke-opacity="0.75"/>
<polyline points="768,196.9 770,196.8 772,197.6 774,199.0 776,200.0 778,197.8 780,196.3 782,194.4 784,196.2 786,197.2 788,198.4 790,200.0 792,200.1 794,199.0 796,199.2 798,199.0 800,200.3 802,201.2 804,198.5 806,199.6 808,201.0 810,199.4 812,197.4 814,198.5 816,196.2 818,197.6 820,196.4 822,197.1 824,198.7 826,199.7 828,199.5 830,196.9 832,197.9 834,198.6 836,198.9 838,197.2 840,196.5 842,198.8 844,196.2 846,197.0 848,197.2 850,197.2 852,198.6 854,198.1 856,199.1 858,197.4 860,196.6 862,196.6 864,197.6 866,197.9 868,198.4 870,198.0 872,197.3 874,197.2 876,197.7 878,197.3 880,197.4 882,196.8 884,197.5 886,197.8 888,197.6 890,197.8 892,199.9 894,199.3 896,196.4 898,193.4 900,193.4 902,193.6 904,194.9 906,192.5 908,193.3 910,194.2 912,196.7 914,199.3 916,197.5 918,198.2 920,199.0 922,198.7 924,197.4 926,198.0 928,198.1 930,198.9 932,200.4 934,200.5 936,199.5 938,199.0 940,203.7 942,207.5 944,204.4 946,195.6 948,185.3 950,177.3 952,176.5 954,179.0 956,178.6 958,173.6 960,176.2 962,184.9 964,198.7 966,202.6 968,184.8 970,173.2 972,177.2 974,185.5 976,194.4 978,203.3 980,210.6 982,210.9 984,209.4 986,205.8 988,202.4 990,199.7 992,198.3 994,199.1 996,200.2 998,201.0 1000,199.4 1002,198.6 1004,196.7 1006,192.9 1008,192.6 1010,193.1 1012,193.6 1014,193.3 1016,193.0 1018,192.7 1020,193.2 1022,190.7 1024,192.8 1026,191.6 1028,191.8 1030,192.5 1032,191.5 1034,192.4 1036,189.8 1038,188.6 1040,190.0 1042,189.8 1044,190.9 1046,189.4 1048,189.6 1050,191.0 1052,191.2 1054,191.8 1056,192.7 1058,193.7 1060,193.0 1062,195.3 1064,194.5 1066,196.3 1068,194.9 1070,195.4 1072,196.9 1074,195.4 1076,194.4 1078,196.2 1080,195.8 1082,193.0 1084,194.4 1086,194.6 1088,195.3 1090,197.0 1092,195.6 1094,196.9 1096,197.0 1098,197.0 1100,195.6 1102,196.5 1104,199.0 1106,199.7 1108,200.2 1110,201.1 1112,199.4 1114,197.4 1116,196.2 1118,193.9 1120,195.0 1122,198.1 1124,196.9 1126,194.7 1128,196.7 1130,195.4 1132,194.9 1134,197.0 1136,195.9 1138,195.5 1140,196.6 1142,196.3 1144,195.9 1146,197.7 1148,197.0 1150,195.9 1152,196.5 1154,195.2 1156,194.4 1158,193.1 1160,191.7 1162,193.5 1164,194.1 1166,193.5 1168,192.3 1170,192.1 1172,191.8 1174,192.1 1176,191.4 1178,192.0 1180,193.4 1182,192.2 1184,189.9 1186,191.3 1188,190.8 1190,192.4 1192,194.7 1194,194.3 1196,193.4 1198,191.4 1200,191.6 1202,191.3 1204,192.9 1206,192.2 1208,191.0 1210,193.2 1212,193.9 1214,193.2 1216,192.9 1218,193.9 1220,194.0 1222,195.8 1224,196.3 1226,196.7 1228,197.4 1230,197.2 1232,199.2 1234,198.5 1236,197.8 1238,196.3 1240,194.8 1242,196.2 1244,197.5 1246,199.7 1248,197.2 1250,196.2 1252,196.2 1254,196.3 1256,195.2 1258,193.9 1260,196.0" fill="none" stroke="#ff1a10" stroke-width="1.05" stroke-opacity="0.75"/>
<polyline points="768,199.1 770,196.8 772,197.5 774,198.6 776,198.9 778,199.6 780,198.8 782,199.3 784,199.6 786,201.3 788,201.1 790,201.3 792,201.9 794,201.6 796,203.0 798,201.8 800,200.8 802,199.8 804,199.5 806,199.1 808,198.0 810,199.3 812,202.6 814,202.7 816,202.5 818,201.9 820,202.6 822,202.0 824,202.4 826,203.2 828,202.0 830,201.8 832,199.9 834,200.3 836,198.4 838,199.2 840,199.4 842,199.2 844,198.7 846,198.7 848,199.1 850,199.9 852,200.8 854,198.0 856,199.4 858,198.2 860,199.4 862,198.7 864,198.1 866,197.4 868,196.3 870,195.3 872,196.3 874,196.2 876,197.0 878,196.5 880,197.0 882,195.3 884,197.3 886,197.1 888,197.6 890,196.1 892,194.2 894,193.4 896,194.0 898,193.8 900,193.5 902,195.0 904,197.4 906,198.2 908,199.6 910,197.1 912,197.8 914,198.6 916,198.0 918,197.8 920,197.4 922,200.1 924,199.9 926,198.9 928,198.7 930,199.2 932,200.4 934,199.9 936,202.2 938,205.9 940,209.4 942,212.4 944,213.5 946,207.4 948,194.3 950,183.3 952,176.2 954,179.5 956,183.5 958,177.8 960,176.4 962,183.1 964,194.8 966,204.5 968,198.7 970,173.3 972,175.1 974,181.5 976,191.2 978,202.0 980,207.5 982,209.1 984,212.0 986,211.7 988,206.4 990,200.9 992,199.0 994,199.3 996,200.9 998,199.8 1000,197.8 1002,198.2 1004,196.6 1006,193.8 1008,194.1 1010,193.6 1012,192.0 1014,193.2 1016,192.4 1018,193.2 1020,195.0 1022,195.5 1024,193.1 1026,193.6 1028,194.8 1030,194.2 1032,193.0 1034,193.7 1036,194.2 1038,192.3 1040,191.3 1042,192.5 1044,193.6 1046,193.7 1048,193.5 1050,194.3 1052,194.3 1054,196.4 1056,195.8 1058,196.0 1060,196.2 1062,197.1 1064,196.0 1066,195.5 1068,197.5 1070,197.2 1072,198.5 1074,197.5 1076,196.8 1078,198.1 1080,198.4 1082,199.2 1084,201.5 1086,200.6 1088,201.4 1090,202.1 1092,199.7 1094,198.3 1096,197.4 1098,198.9 1100,197.0 1102,198.0 1104,197.4 1106,197.7 1108,199.9 1110,200.2 1112,199.3 1114,198.3 1116,199.0 1118,198.8 1120,198.6 1122,198.1 1124,198.7 1126,199.3 1128,199.8 1130,197.5 1132,197.8 1134,197.8 1136,199.3 1138,198.9 1140,195.4 1142,192.9 1144,195.2 1146,195.9 1148,195.9 1150,194.4 1152,196.2 1154,194.7 1156,193.7 1158,192.6 1160,192.2 1162,193.2 1164,194.5 1166,195.0 1168,195.1 1170,194.5 1172,194.4 1174,194.7 1176,193.9 1178,193.8 1180,193.4 1182,194.2 1184,195.4 1186,195.3 1188,194.5 1190,193.3 1192,194.5 1194,194.9 1196,194.9 1198,194.4 1200,196.1 1202,196.8 1204,197.4 1206,197.2 1208,195.7 1210,195.4 1212,196.9 1214,196.1 1216,197.4 1218,197.7 1220,198.2 1222,197.0 1224,195.1 1226,198.5 1228,200.6 1230,198.8 1232,199.8 1234,197.4 1236,199.0 1238,197.3 1240,199.4 1242,198.3 1244,196.6 1246,197.8 1248,196.7 1250,196.8 1252,200.0 1254,199.7 1256,198.8 1258,198.3 1260,200.3" fill="none" stroke="#ff1a10" stroke-width="1.05" stroke-opacity="0.75"/>
<polyline points="768,197.7 770,197.9 772,197.1 774,196.0 776,197.2 778,196.0 780,195.0 782,195.6 784,196.0 786,195.0 788,195.8 790,196.6 792,198.0 794,198.0 796,197.5 798,195.8 800,195.4 802,197.1 804,197.7 806,197.9 808,198.3 810,196.9 812,194.9 814,194.8 816,193.8 818,194.9 820,196.0 822,197.5 824,195.0 826,195.2 828,194.6 830,193.2 832,193.0 834,191.7 836,195.2 838,196.3 840,197.8 842,195.1 844,195.6 846,195.3 848,193.3 850,194.1 852,192.1 854,189.7 856,190.9 858,192.3 860,193.0 862,191.9 864,189.4 866,190.7 868,192.2 870,194.2 872,191.6 874,194.1 876,192.5 878,194.2 880,193.9 882,193.9 884,193.4 886,193.5 888,192.5 890,193.8 892,194.0 894,192.9 896,194.4 898,192.5 900,192.7 902,196.4 904,195.6 906,196.4 908,195.6 910,194.2 912,195.6 914,196.1 916,194.9 918,196.8 920,194.0 922,194.0 924,199.4 926,196.9 928,197.6 930,199.5 932,200.1 934,198.4 936,200.1 938,205.5 940,208.0 942,203.1 944,191.9 946,179.8 948,176.7 950,178.0 952,180.9 954,176.9 956,174.7 958,179.1 960,187.6 962,196.1 964,193.2 966,169.6 968,172.5 970,177.8 972,185.9 974,195.0 976,204.5 978,207.0 980,207.8 982,206.2 984,203.1 986,201.0 988,197.1 990,199.3 992,197.4 994,197.6 996,197.6 998,196.3 1000,192.7 1002,192.6 1004,192.4 1006,190.6 1008,189.7 1010,189.0 1012,190.1 1014,190.7 1016,192.7 1018,192.1 1020,189.7 1022,190.1 1024,191.7 1026,191.4 1028,190.9 1030,191.9 1032,190.8 1034,191.9 1036,194.1 1038,192.5 1040,193.0 1042,194.6 1044,194.4 1046,194.5 1048,193.8 1050,194.0 1052,195.3 1054,194.6 1056,194.1 1058,195.4 1060,197.4 1062,196.3 1064,195.6 1066,195.9 1068,195.9 1070,196.7 1072,196.4 1074,196.4 1076,196.8 1078,195.9 1080,194.8 1082,195.2 1084,195.0 1086,195.5 1088,195.9 1090,195.8 1092,195.4 1094,195.5 1096,194.4 1098,194.3 1100,196.6 1102,198.3 1104,195.8 1106,194.7 1108,192.6 1110,193.2 1112,193.5 1114,194.3 1116,193.9 1118,194.0 1120,194.4 1122,192.6 1124,193.5 1126,193.4 1128,190.8 1130,191.9 1132,191.7 1134,192.4 1136,193.1 1138,191.4 1140,190.7 1142,190.6 1144,189.3 1146,189.2 1148,189.6 1150,187.5 1152,188.8 1154,190.8 1156,190.1 1158,189.1 1160,186.9 1162,190.3 1164,191.5 1166,190.5 1168,189.5 1170,189.3 1172,190.3 1174,192.6 1176,193.2 1178,191.8 1180,192.2 1182,192.5 1184,192.6 1186,193.5 1188,192.0 1190,190.8 1192,191.0 1194,192.7 1196,192.8 1198,193.1 1200,194.2 1202,194.9 1204,196.5 1206,196.8 1208,196.8 1210,194.2 1212,195.4 1214,193.2 1216,193.7 1218,195.7 1220,196.9 1222,195.8 1224,195.0 1226,192.7 1228,194.1 1230,194.1 1232,195.8 1234,196.2 1236,194.6 1238,194.8 1240,196.0 1242,195.6 1244,193.9 1246,194.5 1248,192.6 1250,193.3 1252,192.9 1254,193.2 1256,192.0 1258,190.8 1260,191.9" fill="none" stroke="#ff1a10" stroke-width="1.05" stroke-opacity="0.75"/>
<polyline points="768,193.6 770,191.0 772,191.8 774,189.8 776,189.5 778,189.9 780,189.3 782,190.3 784,191.8 786,191.1 788,191.1 790,190.0 792,190.8 794,188.9 796,186.4 798,188.0 800,185.9 802,188.6 804,190.7 806,189.3 808,188.7 810,187.6 812,187.4 814,188.5 816,190.8 818,191.6 820,190.2 822,189.2 824,185.6 826,186.3 828,187.8 830,190.0 832,190.1 834,188.0 836,188.8 838,189.9 840,188.8 842,186.8 844,187.0 846,189.5 848,188.9 850,188.4 852,189.9 854,189.9 856,189.2 858,190.5 860,191.6 862,190.1 864,189.7 866,189.8 868,188.6 870,190.0 872,189.0 874,189.2 876,190.5 878,188.8 880,190.6 882,188.4 884,189.0 886,189.8 888,190.0 890,190.0 892,188.3 894,189.2 896,188.9 898,189.3 900,190.3 902,191.1 904,189.8 906,190.3 908,191.0 910,189.2 912,189.3 914,191.2 916,191.8 918,192.8 920,190.8 922,191.8 924,189.2 926,189.1 928,192.7 930,194.2 932,195.5 934,193.1 936,193.3 938,195.9 940,200.7 942,204.7 944,201.3 946,190.3 948,178.4 950,168.9 952,170.6 954,173.0 956,171.0 958,167.3 960,172.0 962,183.5 964,192.3 966,192.8 968,168.9 970,164.1 972,170.0 974,181.6 976,191.8 978,199.1 980,203.8 982,204.7 984,204.6 986,200.1 988,197.4 990,194.0 992,192.7 994,192.3 996,192.3 998,193.1 1000,192.9 1002,191.2 1004,191.3 1006,186.8 1008,188.9 1010,188.8 1012,189.0 1014,190.6 1016,189.2 1018,190.8 1020,190.9 1022,191.3 1024,189.4 1026,190.9 1028,190.0 1030,189.1 1032,190.8 1034,191.6 1036,189.7 1038,191.3 1040,190.5 1042,192.2 1044,190.2 1046,188.8 1048,190.1 1050,190.8 1052,192.4 1054,190.6 1056,192.2 1058,191.4 1060,192.8 1062,192.4 1064,190.6 1066,190.9 1068,192.2 1070,190.6 1072,191.7 1074,190.8 1076,191.0 1078,191.1 1080,189.8 1082,189.6 1084,187.7 1086,191.1 1088,189.0 1090,190.5 1092,189.9 1094,188.8 1096,189.0 1098,188.6 1100,189.2 1102,188.6 1104,189.7 1106,187.9 1108,186.5 1110,186.2 1112,185.7 1114,184.7 1116,184.4 1118,186.2 1120,186.5 1122,186.0 1124,185.8 1126,185.5 1128,187.1 1130,186.0 1132,185.9 1134,184.9 1136,185.6 1138,184.8 1140,185.4 1142,186.6 1144,186.6 1146,188.3 1148,187.0 1150,187.4 1152,187.5 1154,188.0 1156,188.0 1158,188.9 1160,190.1 1162,191.2 1164,190.5 1166,188.9 1168,189.3 1170,187.2 1172,186.9 1174,188.5 1176,191.3 1178,191.3 1180,191.4 1182,190.9 1184,192.5 1186,190.9 1188,189.8 1190,189.4 1192,189.5 1194,190.7 1196,189.3 1198,189.6 1200,191.9 1202,195.2 1204,195.1 1206,194.1 1208,193.4 1210,192.4 1212,193.8 1214,191.6 1216,190.6 1218,193.2 1220,192.2 1222,190.0 1224,190.7 1226,189.3 1228,191.6 1230,190.4 1232,190.4 1234,191.1 1236,190.1 1238,188.1 1240,187.8 1242,185.6 1244,186.3 1246,188.3 1248,187.3 1250,187.6 1252,184.9 1254,184.5 1256,183.9 1258,184.8 1260,183.1" fill="none" stroke="#ff1a10" stroke-width="1.05" stroke-opacity="0.75"/>
<polyline points="768,193.8 770,192.9 772,190.9 774,191.2 776,192.2 778,193.2 780,194.4 782,194.6 784,193.8 786,192.6 788,191.7 790,190.6 792,190.1 794,194.0 796,191.8 798,191.5 800,191.7 802,190.0 804,192.7 806,193.5 808,191.4 810,190.5 812,190.5 814,192.2 816,191.6 818,192.4 820,194.3 822,193.0 824,192.9 826,191.7 828,190.7 830,191.1 832,191.4 834,191.8 836,191.1 838,191.4 840,194.4 842,194.1 844,194.1 846,194.5 848,192.4 850,193.1 852,194.9 854,195.0 856,195.1 858,194.3 860,194.1 862,197.5 864,196.7 866,196.0 868,194.9 870,192.7 872,195.7 874,196.5 876,196.1 878,194.0 880,194.9 882,196.0 884,194.7 886,192.6 888,193.6 890,193.8 892,194.3 894,193.1 896,195.7 898,191.6 900,192.8 902,192.5 904,193.9 906,194.4 908,194.3 910,196.4 912,197.1 914,195.4 916,195.6 918,192.6 920,193.9 922,193.9 924,194.5 926,194.0 928,196.1 930,197.8 932,198.5 934,199.6 936,203.7 938,210.0 940,212.7 942,201.4 944,185.7 946,172.2 948,165.9 950,168.8 952,174.3 954,167.9 956,166.6 958,176.9 960,191.1 962,199.6 964,186.9 966,162.5 968,164.8 970,176.2 972,190.5 974,203.6 976,212.2 978,213.5 980,213.0 982,209.5 984,204.4 986,199.9 988,197.4 990,199.5 992,198.4 994,196.7 996,195.8 998,193.5 1000,194.6 1002,194.0 1004,195.4 1006,195.5 1008,194.3 1010,195.1 1012,194.5 1014,191.3 1016,192.4 1018,193.6 1020,193.9 1022,193.4 1024,193.0 1026,193.6 1028,194.4 1030,193.2 1032,190.5 1034,192.7 1036,193.4 1038,193.1 1040,192.6 1042,191.9 1044,191.5 1046,191.7 1048,190.7 1050,191.6 1052,191.5 1054,193.7 1056,193.9 1058,192.9 1060,192.8 1062,195.0 1064,195.0 1066,195.6 1068,193.0 1070,193.8 1072,192.8 1074,195.1 1076,193.2 1078,194.8 1080,194.1 1082,193.1 1084,193.6 1086,193.6 1088,192.2 1090,194.3 1092,190.9 1094,190.3 1096,191.3 1098,190.3 1100,192.6 1102,193.7 1104,194.6 1106,193.6 1108,191.7 1110,190.0 1112,188.8 1114,189.2 1116,187.8 1118,185.4 1120,186.2 1122,187.0 1124,186.7 1126,187.8 1128,189.6 1130,191.7 1132,190.5 1134,192.0 1136,190.0 1138,190.2 1140,189.3 1142,190.2 1144,189.9 1146,190.5 1148,191.9 1150,194.2 1152,192.8 1154,192.8 1156,190.7 1158,191.2 1160,191.2 1162,193.3 1164,194.6 1166,193.3 1168,193.2 1170,194.3 1172,194.6 1174,193.7 1176,192.3 1178,194.3 1180,192.4 1182,194.8 1184,194.2 1186,192.5 1188,192.7 1190,194.1 1192,194.5 1194,195.3 1196,194.9 1198,194.5 1200,193.0 1202,191.4 1204,191.0 1206,193.1 1208,192.7 1210,193.5 1212,193.3 1214,193.0 1216,192.0 1218,191.2 1220,192.5 1222,191.6 1224,191.7 1226,190.7 1228,191.4 1230,192.7 1232,193.0 1234,193.5 1236,194.6 1238,193.5 1240,193.6 1242,189.6 1244,189.9 1246,191.1 1248,188.1 1250,188.3 1252,189.6 1254,188.9 1256,188.6 1258,188.9 1260,188.9" fill="none" stroke="#ff1a10" stroke-width="1.05" stroke-opacity="0.75"/>
<polyline points="768,192.6 770,194.2 772,193.2 774,192.0 776,191.8 778,190.3 780,193.4 782,192.6 784,193.5 786,194.1 788,192.7 790,192.7 792,192.9 794,191.3 796,191.7 798,192.5 800,191.7 802,192.3 804,191.6 806,192.9 808,193.7 810,194.7 812,194.8 814,194.6 816,193.7 818,192.1 820,193.8 822,194.4 824,194.8 826,194.2 828,193.6 830,195.1 832,194.6 834,194.5 836,195.0 838,194.6 840,194.7 842,193.2 844,194.1 846,194.4 848,195.3 850,193.6 852,193.3 854,196.0 856,195.5 858,194.9 860,194.8 862,196.0 864,193.6 866,193.6 868,191.6 870,194.6 872,196.2 874,195.9 876,196.2 878,199.0 880,198.8 882,198.7 884,198.6 886,198.6 888,198.1 890,194.9 892,195.5 894,194.6 896,197.9 898,195.1 900,196.9 902,194.8 904,193.4 906,196.5 908,194.8 910,194.1 912,193.0 914,194.1 916,195.2 918,197.0 920,196.4 922,194.4 924,194.8 926,196.2 928,196.1 930,196.2 932,194.5 934,197.4 936,199.4 938,201.8 940,205.4 942,207.6 944,200.6 946,189.6 948,177.3 950,172.1 952,171.7 954,177.0 956,176.2 958,171.2 960,176.4 962,186.8 964,197.9 966,197.9 968,171.4 970,168.1 972,174.5 974,184.0 976,196.8 978,205.4 980,211.0 982,212.7 984,210.3 986,206.0 988,198.9 990,195.6 992,196.6 994,196.5 996,195.8 998,194.4 1000,192.4 1002,192.4 1004,195.3 1006,193.2 1008,193.6 1010,194.1 1012,191.0 1014,192.2 1016,191.7 1018,194.0 1020,194.5 1022,195.1 1024,196.8 1026,193.8 1028,194.0 1030,192.3 1032,193.0 1034,192.4 1036,195.1 1038,193.9 1040,193.7 1042,193.1 1044,193.9 1046,193.1 1048,195.8 1050,195.6 1052,192.7 1054,191.1 1056,191.4 1058,192.1 1060,193.7 1062,196.0 1064,194.0 1066,192.9 1068,193.7 1070,190.8 1072,189.7 1074,192.0 1076,192.7 1078,191.7 1080,190.2 1082,191.6 1084,189.8 1086,187.9 1088,187.2 1090,188.5 1092,187.6 1094,188.5 1096,189.1 1098,193.1 1100,192.0 1102,190.5 1104,188.6 1106,187.1 1108,189.5 1110,189.4 1112,188.6 1114,189.4 1116,190.8 1118,190.8 1120,190.4 1122,190.3 1124,191.6 1126,191.3 1128,191.2 1130,190.4 1132,190.6 1134,189.5 1136,188.1 1138,190.5 1140,190.0 1142,190.7 1144,192.5 1146,194.6 1148,193.8 1150,195.1 1152,193.8 1154,196.4 1156,197.8 1158,197.1 1160,195.7 1162,196.5 1164,194.4 1166,192.8 1168,192.2 1170,193.3 1172,195.9 1174,195.4 1176,194.8 1178,196.9 1180,196.0 1182,196.1 1184,193.8 1186,192.1 1188,194.7 1190,193.5 1192,193.7 1194,194.7 1196,194.2 1198,193.2 1200,193.3 1202,194.8 1204,194.6 1206,193.9 1208,192.8 1210,194.4 1212,193.1 1214,192.6 1216,191.4 1218,191.8 1220,190.2 1222,189.7 1224,190.8 1226,191.2 1228,191.1 1230,190.1 1232,188.7 1234,189.6 1236,189.9 1238,189.7 1240,191.0 1242,190.2 1244,189.0 1246,188.9 1248,190.1 1250,190.5 1252,187.3 1254,188.5 1256,189.0 1258,189.1 1260,188.7" fill="none" stroke="#ff1a10" stroke-width="1.05" stroke-opacity="0.75"/>
<polyline points="768,197.8 770,196.4 772,193.2 774,195.6 776,195.6 778,195.6 780,196.1 782,195.3 784,196.6 786,197.0 788,197.3 790,196.9 792,197.6 794,196.1 796,195.5 798,196.1 800,196.2 802,197.8 804,197.0 806,194.8 808,193.8 810,194.1 812,195.2 814,196.2 816,195.6 818,194.8 820,194.7 822,198.1 824,197.9 826,198.7 828,196.8 830,197.2 832,197.3 834,196.0 836,196.2 838,196.2 840,196.5 842,197.8 844,199.1 846,198.7 848,196.6 850,195.9 852,196.2 854,195.8 856,198.8 858,197.6 860,196.6 862,199.2 864,197.4 866,197.0 868,196.0 870,197.9 872,200.3 874,199.4 876,200.5 878,200.5 880,199.2 882,198.5 884,194.3 886,195.0 888,196.5 890,196.4 892,196.2 894,197.0 896,195.4 898,193.4 900,192.1 902,192.2 904,193.4 906,194.4 908,193.1 910,194.6 912,193.0 914,194.5 916,194.1 918,195.8 920,198.2 922,199.0 924,198.3 926,197.8 928,197.1 930,198.3 932,198.6 934,199.8 936,199.8 938,203.6 940,209.9 942,213.5 944,212.5 946,193.2 948,177.0 950,166.4 952,161.9 954,167.7 956,170.6 958,161.6 960,165.7 962,180.7 964,197.5 966,202.0 968,170.8 970,159.4 972,165.8 974,179.5 976,196.4 978,208.2 980,213.5 982,213.5 984,213.5 986,210.1 988,202.5 990,196.8 992,194.8 994,195.0 996,194.8 998,194.6 1000,193.1 1002,195.0 1004,194.9 1006,195.5 1008,196.7 1010,197.9 1012,195.9 1014,194.2 1016,195.0 1018,195.2 1020,196.9 1022,196.3 1024,194.8 1026,195.7 1028,198.0 1030,197.8 1032,197.3 1034,196.9 1036,197.0 1038,198.2 1040,198.6 1042,197.5 1044,195.5 1046,194.5 1048,194.3 1050,193.7 1052,196.1 1054,195.3 1056,193.8 1058,194.3 1060,194.5 1062,195.1 1064,195.5 1066,195.7 1068,193.6 1070,192.5 1072,194.1 1074,194.6 1076,192.0 1078,190.3 1080,190.3 1082,190.2 1084,191.9 1086,191.6 1088,191.6 1090,191.4 1092,191.8 1094,192.8 1096,191.8 1098,190.2 1100,191.5 1102,192.1 1104,192.6 1106,191.0 1108,192.6 1110,193.7 1112,190.7 1114,191.7 1116,192.0 1118,192.5 1120,194.0 1122,193.2 1124,193.2 1126,195.4 1128,194.7 1130,191.9 1132,195.1 1134,195.6 1136,197.1 1138,198.4 1140,197.3 1142,196.6 1144,194.9 1146,193.8 1148,195.9 1150,195.0 1152,194.7 1154,194.1 1156,194.7 1158,193.9 1160,194.5 1162,195.9 1164,196.9 1166,197.3 1168,195.5 1170,193.3 1172,196.6 1174,198.2 1176,197.8 1178,196.2 1180,195.0 1182,194.1 1184,193.1 1186,195.2 1188,191.8 1190,193.3 1192,195.4 1194,194.3 1196,192.0 1198,190.9 1200,190.8 1202,190.9 1204,191.0 1206,193.6 1208,191.3 1210,191.7 1212,191.0 1214,190.9 1216,187.3 1218,186.6 1220,188.7 1222,191.1 1224,190.4 1226,189.9 1228,192.7 1230,191.0 1232,189.6 1234,188.5 1236,190.0 1238,188.9 1240,188.9 1242,188.5 1244,191.8 1246,193.9 1248,191.1 1250,191.5 1252,192.6 1254,191.4 1256,192.1 1258,191.7 1260,192.5" fill="none" stroke="#ff1a10" stroke-width="1.05" stroke-opacity="0.75"/>
<polyline points="768,202.3 770,202.8 772,201.8 774,201.4 776,203.5 778,202.2 780,202.0 782,200.9 784,200.9 786,201.9 788,203.5 790,203.9 792,204.9 794,207.2 796,206.9 798,206.0 800,202.4 802,203.0 804,203.9 806,202.4 808,201.3 810,199.9 812,202.5 814,203.6 816,203.6 818,203.2 820,204.3 822,203.3 824,202.1 826,202.8 828,203.3 830,202.5 832,202.0 834,204.5 836,202.8 838,201.9 840,200.7 842,202.4 844,203.7 846,202.9 848,204.7 850,204.8 852,202.1 854,203.3 856,203.0 858,200.9 860,200.9 862,199.7 864,201.3 866,200.5 868,201.2 870,200.5 872,200.5 874,199.3 876,202.1 878,201.4 880,201.8 882,200.0 884,200.4 886,197.8 888,200.0 890,201.9 892,201.6 894,199.9 896,199.9 898,196.7 900,198.3 902,201.2 904,200.9 906,202.9 908,204.4 910,204.0 912,204.9 914,205.9 916,206.5 918,206.9 920,207.3 922,207.4 924,206.7 926,206.0 928,205.8 930,206.5 932,208.1 934,208.0 936,213.5 938,213.5 940,213.5 942,213.5 944,195.6 946,178.7 948,168.9 950,166.5 952,175.0 954,173.7 956,170.1 958,177.7 960,192.5 962,207.7 964,205.8 966,172.7 968,169.1 970,175.1 972,188.0 974,202.9 976,213.5 978,213.5 980,213.5 982,213.5 984,213.5 986,208.3 988,204.7 990,203.9 992,202.8 994,202.9 996,202.4 998,203.3 1000,201.7 1002,199.4 1004,201.0 1006,201.1 1008,201.7 1010,201.4 1012,200.8 1014,200.9 1016,200.0 1018,200.8 1020,200.8 1022,200.0 1024,199.2 1026,197.3 1028,197.8 1030,196.7 1032,198.3 1034,201.2 1036,201.7 1038,198.5 1040,196.2 1042,197.0 1044,198.2 1046,199.6 1048,197.4 1050,197.1 1052,199.6 1054,196.4 1056,196.8 1058,194.8 1060,196.8 1062,196.2 1064,195.8 1066,194.7 1068,196.0 1070,197.4 1072,198.6 1074,198.2 1076,198.9 1078,197.4 1080,196.9 1082,197.8 1084,199.1 1086,199.7 1088,199.7 1090,200.6 1092,198.0 1094,198.3 1096,198.6 1098,197.0 1100,196.1 1102,197.9 1104,196.9 1106,196.9 1108,201.7 1110,203.6 1112,201.4 1114,201.6 1116,200.8 1118,200.4 1120,200.0 1122,198.3 1124,199.6 1126,198.7 1128,200.3 1130,202.4 1132,202.6 1134,202.2 1136,201.4 1138,201.9 1140,199.9 1142,201.2 1144,201.2 1146,199.6 1148,201.5 1150,202.4 1152,202.0 1154,202.4 1156,203.0 1158,204.1 1160,204.6 1162,201.5 1164,200.7 1166,200.4 1168,201.9 1170,202.3 1172,201.7 1174,200.5 1176,199.0 1178,200.9 1180,202.5 1182,202.8 1184,200.1 1186,202.4 1188,201.6 1190,199.3 1192,200.3 1194,201.0 1196,202.3 1198,201.8 1200,200.8 1202,199.6 1204,198.1 1206,199.6 1208,197.9 1210,197.7 1212,197.5 1214,196.9 1216,195.9 1218,197.8 1220,197.3 1222,195.7 1224,196.7 1226,195.7 1228,198.2 1230,197.3 1232,198.8 1234,200.1 1236,199.8 1238,198.0 1240,198.8 1242,197.8 1244,200.9 1246,200.5 1248,201.2 1250,202.1 1252,200.6 1254,199.8 1256,202.1 1258,203.5 1260,204.2" fill="none" stroke="#ff1a10" stroke-width="1.05" stroke-opacity="0.75"/>
<polyline points="768,192.1 770,190.5 772,191.2 774,190.7 776,191.7 778,192.8 780,194.4 782,193.7 784,192.4 786,192.1 788,192.8 790,191.2 792,192.2 794,194.8 796,195.4 798,192.3 800,191.8 802,193.8 804,193.7 806,192.3 808,191.5 810,193.1 812,191.6 814,192.9 816,193.2 818,191.6 820,190.7 822,192.3 824,189.4 826,190.4 828,190.9 830,190.1 832,191.7 834,190.6 836,191.4 838,189.6 840,189.1 842,189.0 844,189.3 846,187.9 848,189.0 850,189.0 852,188.8 854,190.9 856,191.0 858,191.6 860,190.8 862,191.3 864,192.2 866,193.3 868,192.3 870,192.2 872,193.1 874,190.2 876,191.8 878,191.7 880,193.8 882,191.8 884,192.7 886,187.6 888,188.1 890,188.4 892,188.0 894,189.7 896,192.7 898,191.8 900,191.8 902,194.5 904,193.8 906,191.4 908,189.3 910,192.4 912,190.6 914,192.0 916,193.6 918,195.5 920,192.7 922,193.3 924,194.3 926,194.5 928,195.1 930,195.7 932,197.2 934,196.4 936,202.8 938,209.2 940,210.8 942,198.2 944,181.1 946,165.1 948,157.8 950,161.4 952,166.9 954,161.3 956,160.2 958,173.0 960,188.3 962,198.5 964,182.8 966,152.5 968,157.4 970,168.1 972,184.5 974,199.7 976,209.0 978,212.9 980,211.6 982,211.1 984,202.4 986,197.4 988,195.6 990,194.7 992,196.0 994,193.8 996,193.8 998,193.3 1000,193.2 1002,192.5 1004,191.1 1006,191.6 1008,192.7 1010,193.0 1012,190.9 1014,189.3 1016,189.6 1018,190.2 1020,189.9 1022,188.1 1024,187.0 1026,188.9 1028,186.8 1030,186.4 1032,189.1 1034,188.9 1036,189.8 1038,187.1 1040,188.6 1042,187.8 1044,185.6 1046,187.3 1048,185.0 1050,183.0 1052,186.6 1054,186.6 1056,186.7 1058,187.5 1060,187.8 1062,189.3 1064,189.7 1066,189.9 1068,185.7 1070,185.8 1072,182.7 1074,187.0 1076,186.5 1078,188.8 1080,188.7 1082,186.9 1084,187.6 1086,189.7 1088,187.9 1090,190.3 1092,189.4 1094,188.7 1096,188.3 1098,188.9 1100,189.8 1102,191.2 1104,190.7 1106,191.5 1108,192.2 1110,192.6 1112,191.3 1114,191.1 1116,192.4 1118,191.6 1120,191.2 1122,191.4 1124,191.6 1126,190.8 1128,192.7 1130,192.5 1132,193.0 1134,193.0 1136,191.4 1138,190.6 1140,192.2 1142,191.6 1144,191.1 1146,192.4 1148,191.2 1150,190.7 1152,190.8 1154,190.4 1156,189.9 1158,192.0 1160,192.2 1162,192.2 1164,190.3 1166,192.0 1168,190.0 1170,188.7 1172,189.7 1174,187.3 1176,186.9 1178,186.9 1180,188.3 1182,187.8 1184,186.4 1186,187.6 1188,188.6 1190,187.9 1192,188.7 1194,187.2 1196,189.2 1198,186.6 1200,185.9 1202,186.6 1204,187.8 1206,187.4 1208,186.5 1210,186.8 1212,186.3 1214,188.3 1216,190.2 1218,188.9 1220,189.8 1222,190.7 1224,190.2 1226,189.3 1228,188.8 1230,188.3 1232,188.6 1234,189.6 1236,191.1 1238,190.8 1240,190.3 1242,191.0 1244,190.2 1246,190.7 1248,189.5 1250,191.5 1252,191.6 1254,191.6 1256,192.2 1258,192.8 1260,193.7" fill="none" stroke="#ff1a10" stroke-width="1.05" stroke-opacity="0.75"/>
<polyline points="768,195.1 770,196.3 772,197.5 774,197.8 776,198.0 778,196.1 780,197.3 782,196.0 784,196.4 786,194.7 788,196.6 790,198.5 792,197.1 794,195.8 796,196.6 798,194.9 800,194.6 802,192.9 804,191.4 806,190.7 808,192.0 810,192.4 812,193.4 814,193.6 816,194.5 818,195.7 820,194.4 822,194.2 824,195.1 826,195.0 828,196.5 830,196.3 832,195.7 834,195.4 836,196.0 838,193.3 840,190.3 842,190.3 844,192.8 846,190.4 848,193.7 850,194.2 852,193.0 854,195.6 856,195.5 858,196.3 860,195.4 862,196.3 864,195.9 866,195.4 868,194.5 870,193.9 872,193.8 874,195.2 876,196.1 878,196.1 880,197.1 882,199.9 884,198.1 886,195.5 888,193.8 890,194.5 892,192.3 894,193.4 896,194.3 898,194.2 900,195.0 902,195.9 904,198.2 906,197.0 908,196.9 910,198.1 912,194.8 914,194.7 916,197.6 918,196.8 920,197.5 922,199.8 924,199.8 926,199.1 928,199.6 930,198.9 932,201.8 934,202.7 936,200.8 938,200.4 940,203.8 942,205.8 944,209.0 946,201.0 948,187.9 950,175.6 952,172.0 954,173.0 956,178.6 958,175.3 960,172.1 962,178.1 964,190.3 966,199.7 968,194.5 970,170.0 972,174.2 974,180.6 976,189.3 978,197.1 980,204.5 982,208.4 984,208.9 986,208.7 988,203.3 990,201.5 992,197.0 994,199.1 996,197.0 998,194.0 1000,193.6 1002,195.1 1004,193.6 1006,190.4 1008,193.9 1010,191.7 1012,188.9 1014,192.7 1016,192.8 1018,192.1 1020,191.5 1022,190.7 1024,191.2 1026,193.4 1028,193.2 1030,192.5 1032,192.0 1034,192.1 1036,193.5 1038,191.2 1040,188.9 1042,190.2 1044,189.5 1046,189.6 1048,189.2 1050,190.1 1052,190.2 1054,189.1 1056,190.8 1058,189.9 1060,190.8 1062,191.9 1064,192.0 1066,192.1 1068,193.2 1070,194.0 1072,193.6 1074,192.8 1076,192.9 1078,193.3 1080,195.7 1082,195.1 1084,193.6 1086,195.3 1088,193.8 1090,194.6 1092,194.9 1094,197.1 1096,195.7 1098,194.7 1100,195.4 1102,194.5 1104,198.3 1106,198.0 1108,198.4 1110,197.3 1112,196.3 1114,196.2 1116,195.4 1118,195.7 1120,194.5 1122,194.3 1124,195.1 1126,194.8 1128,194.2 1130,193.9 1132,194.6 1134,194.0 1136,192.1 1138,191.5 1140,190.4 1142,193.2 1144,192.9 1146,193.1 1148,194.7 1150,193.4 1152,193.1 1154,192.8 1156,192.2 1158,192.7 1160,194.2 1162,192.6 1164,191.0 1166,191.1 1168,189.7 1170,191.3 1172,190.9 1174,189.6 1176,190.5 1178,191.1 1180,192.3 1182,193.2 1184,192.9 1186,191.0 1188,192.1 1190,192.2 1192,193.7 1194,192.4 1196,192.1 1198,191.7 1200,189.5 1202,191.5 1204,191.5 1206,192.1 1208,192.9 1210,191.2 1212,192.5 1214,193.6 1216,193.4 1218,191.9 1220,191.9 1222,190.4 1224,193.0 1226,193.2 1228,193.8 1230,192.4 1232,193.1 1234,194.5 1236,193.2 1238,194.6 1240,195.2 1242,196.4 1244,194.9 1246,196.0 1248,195.5 1250,198.2 1252,195.1 1254,195.3 1256,195.0 1258,196.8 1260,195.6" fill="none" stroke="#ff1a10" stroke-width="1.05" stroke-opacity="0.75"/>
<polyline points="768,188.3 770,187.4 772,189.8 774,190.3 776,186.6 778,188.6 780,186.4 782,187.6 784,188.3 786,187.5 788,187.0 790,189.0 792,188.4 794,188.9 796,186.0 798,185.8 800,186.6 802,187.4 804,188.0 806,186.8 808,188.1 810,188.5 812,188.9 814,187.1 816,187.1 818,186.8 820,188.5 822,187.9 824,187.9 826,189.8 828,188.5 830,188.9 832,188.3 834,190.1 836,190.0 838,189.2 840,190.0 842,190.3 844,189.6 846,189.4 848,189.9 850,189.0 852,188.6 854,189.4 856,188.8 858,189.6 860,188.5 862,188.7 864,190.3 866,190.2 868,189.2 870,188.9 872,187.2 874,187.7 876,189.6 878,188.5 880,188.5 882,186.0 884,187.4 886,188.7 888,187.5 890,187.4 892,188.0 894,191.2 896,190.7 898,189.9 900,190.5 902,189.6 904,191.6 906,189.9 908,189.0 910,189.6 912,191.8 914,190.4 916,190.1 918,191.4 920,190.9 922,193.4 924,193.4 926,190.0 928,188.1 930,189.9 932,191.5 934,194.8 936,194.1 938,192.9 940,195.0 942,201.4 944,202.7 946,193.7 948,182.2 950,171.5 952,166.5 954,170.0 956,173.3 958,168.1 960,165.3 962,173.1 964,187.5 966,195.5 968,187.7 970,163.0 972,166.9 974,174.1 976,186.5 978,195.3 980,202.5 982,204.4 984,201.3 986,197.8 988,195.0 990,190.9 992,192.2 994,192.8 996,193.2 998,192.4 1000,189.6 1002,188.3 1004,187.8 1006,184.7 1008,184.5 1010,185.5 1012,185.9 1014,186.9 1016,189.3 1018,187.2 1020,186.7 1022,184.9 1024,186.3 1026,186.8 1028,187.9 1030,184.7 1032,184.6 1034,187.0 1036,186.6 1038,186.4 1040,185.6 1042,186.9 1044,185.4 1046,189.7 1048,187.8 1050,186.0 1052,186.6 1054,186.2 1056,188.0 1058,188.4 1060,187.9 1062,188.5 1064,188.6 1066,188.4 1068,190.0 1070,191.4 1072,191.3 1074,191.2 1076,194.6 1078,192.9 1080,192.4 1082,192.6 1084,191.6 1086,191.5 1088,192.1 1090,192.9 1092,193.2 1094,190.8 1096,188.4 1098,187.1 1100,187.3 1102,189.4 1104,187.1 1106,189.1 1108,188.8 1110,189.1 1112,189.1 1114,188.7 1116,189.6 1118,188.7 1120,188.9 1122,188.7 1124,189.2 1126,190.5 1128,189.8 1130,188.2 1132,187.3 1134,185.7 1136,186.8 1138,187.7 1140,188.6 1142,189.9 1144,190.1 1146,187.6 1148,187.2 1150,187.9 1152,186.8 1154,188.4 1156,190.0 1158,187.6 1160,185.7 1162,186.3 1164,184.5 1166,183.7 1168,184.9 1170,185.4 1172,186.6 1174,187.3 1176,185.4 1178,184.0 1180,185.0 1182,181.5 1184,181.7 1186,183.9 1188,183.3 1190,185.3 1192,186.8 1194,187.9 1196,188.4 1198,187.6 1200,187.7 1202,188.1 1204,187.7 1206,187.8 1208,188.7 1210,188.0 1212,188.8 1214,188.6 1216,190.6 1218,191.8 1220,188.3 1222,189.4 1224,188.0 1226,189.6 1228,190.2 1230,190.9 1232,188.5 1234,188.6 1236,188.0 1238,191.4 1240,189.7 1242,189.2 1244,187.7 1246,188.0 1248,190.3 1250,189.8 1252,191.2 1254,190.9 1256,191.9 1258,192.0 1260,191.6" fill="none" stroke="#ff1a10" stroke-width="1.05" stroke-opacity="0.75"/>
<polyline points="768,195.2 770,194.4 772,194.0 774,195.6 776,193.0 778,194.7 780,194.6 782,196.5 784,195.5 786,194.5 788,194.8 790,195.9 792,196.0 794,196.1 796,195.8 798,194.6 800,195.3 802,195.1 804,194.5 806,194.4 808,195.6 810,195.1 812,196.8 814,195.3 816,194.8 818,195.5 820,197.2 822,198.4 824,194.4 826,194.2 828,193.2 830,195.1 832,194.9 834,196.2 836,197.1 838,197.7 840,196.7 842,197.8 844,197.8 846,196.7 848,196.6 850,198.0 852,197.4 854,197.8 856,200.0 858,199.1 860,197.7 862,197.7 864,197.3 866,196.6 868,195.9 870,196.7 872,196.3 874,200.0 876,199.0 878,198.7 880,198.6 882,199.9 884,199.9 886,198.8 888,198.3 890,198.3 892,196.1 894,194.2 896,196.1 898,195.2 900,197.0 902,195.6 904,196.0 906,198.3 908,196.0 910,197.1 912,196.6 914,198.6 916,198.0 918,196.5 920,197.1 922,199.7 924,197.3 926,199.8 928,200.1 930,198.9 932,198.5 934,197.6 936,197.8 938,200.9 940,202.2 942,205.5 944,201.0 946,192.7 948,185.5 950,182.2 952,183.2 954,185.8 956,183.1 958,181.7 960,187.6 962,194.1 964,200.7 966,199.1 968,184.3 970,183.4 972,186.7 974,192.0 976,199.9 978,204.7 980,205.9 982,205.5 984,205.4 986,203.1 988,200.3 990,198.1 992,198.6 994,198.6 996,197.5 998,197.8 1000,198.1 1002,198.4 1004,196.3 1006,191.3 1008,191.3 1010,192.2 1012,193.2 1014,192.4 1016,191.8 1018,192.5 1020,192.3 1022,194.9 1024,195.1 1026,196.5 1028,196.3 1030,196.3 1032,196.2 1034,196.6 1036,196.7 1038,198.7 1040,196.4 1042,194.7 1044,194.7 1046,194.0 1048,198.8 1050,198.9 1052,199.7 1054,198.1 1056,199.1 1058,197.9 1060,196.0 1062,198.0 1064,197.0 1066,197.0 1068,196.2 1070,196.0 1072,195.6 1074,196.6 1076,195.6 1078,196.0 1080,198.2 1082,196.0 1084,196.3 1086,197.7 1088,196.3 1090,197.3 1092,197.9 1094,196.2 1096,196.7 1098,195.1 1100,196.4 1102,198.5 1104,200.0 1106,197.6 1108,196.2 1110,196.6 1112,196.1 1114,196.0 1116,197.4 1118,195.4 1120,194.9 1122,193.8 1124,193.5 1126,192.9 1128,192.9 1130,192.5 1132,193.5 1134,193.0 1136,194.0 1138,193.0 1140,195.5 1142,193.6 1144,195.9 1146,194.5 1148,194.2 1150,190.8 1152,190.7 1154,191.3 1156,191.0 1158,193.3 1160,192.1 1162,193.1 1164,191.5 1166,192.6 1168,194.5 1170,194.3 1172,193.1 1174,193.2 1176,192.1 1178,194.5 1180,195.4 1182,194.3 1184,193.5 1186,194.9 1188,194.5 1190,196.0 1192,196.5 1194,193.9 1196,197.1 1198,197.9 1200,196.6 1202,194.8 1204,196.0 1206,196.7 1208,197.6 1210,198.7 1212,197.8 1214,197.7 1216,198.2 1218,197.1 1220,195.9 1222,197.1 1224,197.9 1226,198.6 1228,200.2 1230,200.9 1232,199.0 1234,200.1 1236,201.5 1238,199.0 1240,198.6 1242,197.8 1244,196.4 1246,198.2 1248,200.7 1250,198.2 1252,197.2 1254,196.5 1256,197.6 1258,198.0 1260,195.5" fill="none" stroke="#ff1a10" stroke-width="1.05" stroke-opacity="0.75"/>
<polyline points="768,191.7 770,191.6 772,190.3 774,190.8 776,190.9 778,190.3 780,191.1 782,190.2 784,189.8 786,191.1 788,190.7 790,191.6 792,191.2 794,192.6 796,191.5 798,190.6 800,193.4 802,194.4 804,193.2 806,192.0 808,193.6 810,193.8 812,192.8 814,191.5 816,192.4 818,191.6 820,194.0 822,190.0 824,188.6 826,188.2 828,189.2 830,189.8 832,190.7 834,192.9 836,194.9 838,194.1 840,192.1 842,192.1 844,192.7 846,192.0 848,192.9 850,192.9 852,192.9 854,193.6 856,192.0 858,188.5 860,191.1 862,192.4 864,191.6 866,193.2 868,194.3 870,195.2 872,194.7 874,195.4 876,194.4 878,192.3 880,193.9 882,191.1 884,191.5 886,191.4 888,192.3 890,191.6 892,193.7 894,192.8 896,191.2 898,190.9 900,189.2 902,189.3 904,188.5 906,189.6 908,190.6 910,191.9 912,192.7 914,192.7 916,192.3 918,192.4 920,192.4 922,192.0 924,193.3 926,193.3 928,194.3 930,192.4 932,192.0 934,193.9 936,195.5 938,195.6 940,198.7 942,203.5 944,202.9 946,194.3 948,181.8 950,172.9 952,171.1 954,169.9 956,174.4 958,169.0 960,172.2 962,179.7 964,189.8 966,193.9 968,179.2 970,166.0 972,171.4 974,178.3 976,185.4 978,194.7 980,204.7 982,204.8 984,203.8 986,202.1 988,198.4 990,195.8 992,193.1 994,191.3 996,192.5 998,191.7 1000,191.5 1002,193.5 1004,191.4 1006,189.2 1008,188.5 1010,189.9 1012,187.5 1014,188.0 1016,188.5 1018,190.0 1020,189.0 1022,187.8 1024,187.8 1026,189.4 1028,190.4 1030,190.2 1032,190.5 1034,189.5 1036,191.5 1038,190.6 1040,191.4 1042,191.3 1044,190.1 1046,191.2 1048,189.9 1050,192.3 1052,191.1 1054,192.0 1056,190.5 1058,191.3 1060,190.6 1062,189.5 1064,191.4 1066,192.3 1068,195.1 1070,194.1 1072,190.5 1074,193.3 1076,195.3 1078,195.6 1080,193.1 1082,192.1 1084,192.7 1086,191.9 1088,192.5 1090,190.1 1092,192.3 1094,190.2 1096,188.8 1098,188.8 1100,189.6 1102,189.6 1104,186.2 1106,187.3 1108,187.7 1110,189.3 1112,190.1 1114,188.0 1116,187.2 1118,186.5 1120,189.0 1122,187.9 1124,187.0 1126,185.4 1128,185.3 1130,183.8 1132,184.3 1134,183.5 1136,184.2 1138,184.9 1140,185.2 1142,187.1 1144,187.1 1146,190.0 1148,189.1 1150,189.6 1152,190.2 1154,187.7 1156,189.6 1158,189.7 1160,189.4 1162,188.9 1164,188.8 1166,190.5 1168,191.6 1170,189.7 1172,190.4 1174,189.5 1176,187.6 1178,187.2 1180,189.9 1182,191.6 1184,192.4 1186,191.2 1188,189.6 1190,190.5 1192,189.5 1194,190.2 1196,190.5 1198,190.8 1200,191.4 1202,191.6 1204,190.3 1206,192.7 1208,191.9 1210,190.6 1212,191.2 1214,192.8 1216,191.0 1218,192.3 1220,188.9 1222,190.2 1224,189.7 1226,191.4 1228,188.3 1230,186.6 1232,186.8 1234,186.8 1236,188.5 1238,188.6 1240,188.9 1242,188.5 1244,189.6 1246,189.6 1248,190.1 1250,190.2 1252,190.8 1254,190.4 1256,188.9 1258,187.8 1260,187.8" fill="none" stroke="#ff1a10" stroke-width="1.05" stroke-opacity="0.75"/>
<polyline points="768,194.8 770,193.6 772,194.8 774,194.7 776,195.0 778,196.9 780,197.6 782,199.3 784,197.6 786,198.1 788,198.3 790,196.4 792,194.0 794,197.3 796,195.6 798,194.7 800,194.4 802,193.5 804,194.1 806,195.8 808,193.9 810,195.2 812,195.1 814,195.1 816,195.5 818,196.0 820,196.5 822,197.8 824,196.7 826,197.6 828,195.6 830,195.2 832,195.1 834,197.4 836,196.0 838,193.4 840,194.1 842,194.7 844,196.6 846,195.3 848,196.7 850,196.0 852,195.2 854,194.0 856,196.2 858,197.1 860,195.3 862,196.4 864,193.8 866,195.2 868,195.7 870,194.7 872,192.8 874,192.7 876,192.5 878,194.3 880,194.1 882,194.3 884,194.2 886,194.4 888,195.1 890,193.3 892,194.3 894,193.9 896,194.7 898,194.7 900,194.5 902,195.6 904,194.2 906,192.2 908,191.7 910,194.9 912,196.5 914,195.0 916,196.0 918,196.8 920,195.6 922,195.4 924,195.2 926,196.1 928,195.0 930,195.3 932,194.8 934,196.5 936,198.3 938,203.2 940,206.8 942,205.6 944,193.6 946,178.4 948,171.3 950,171.6 952,176.6 954,180.3 956,174.8 958,177.5 960,187.2 962,199.3 964,202.5 966,179.7 968,171.8 970,176.5 972,186.0 974,195.6 976,205.4 978,211.7 980,210.1 982,209.4 984,203.7 986,197.2 988,197.6 990,197.9 992,196.4 994,196.7 996,196.7 998,197.0 1000,195.8 1002,196.7 1004,195.1 1006,192.5 1008,190.2 1010,190.2 1012,191.8 1014,193.2 1016,195.2 1018,193.4 1020,194.8 1022,194.6 1024,194.2 1026,195.6 1028,193.5 1030,192.7 1032,194.6 1034,193.0 1036,192.9 1038,195.4 1040,194.1 1042,197.3 1044,195.9 1046,194.9 1048,194.8 1050,193.3 1052,193.8 1054,192.4 1056,192.6 1058,193.4 1060,194.1 1062,195.5 1064,192.0 1066,191.0 1068,193.2 1070,193.2 1072,192.1 1074,193.1 1076,193.4 1078,190.4 1080,190.5 1082,188.7 1084,193.7 1086,190.4 1088,192.1 1090,192.4 1092,191.9 1094,193.3 1096,190.6 1098,191.0 1100,190.3 1102,190.8 1104,189.8 1106,188.4 1108,190.0 1110,191.8 1112,192.1 1114,191.0 1116,191.4 1118,191.5 1120,190.4 1122,189.6 1124,191.0 1126,193.1 1128,190.6 1130,191.5 1132,190.0 1134,192.6 1136,191.3 1138,191.6 1140,191.7 1142,190.5 1144,191.3 1146,192.4 1148,191.6 1150,191.7 1152,191.9 1154,193.0 1156,192.0 1158,192.7 1160,194.2 1162,195.3 1164,193.6 1166,194.4 1168,192.5 1170,193.4 1172,196.2 1174,196.1 1176,195.6 1178,195.7 1180,194.9 1182,192.0 1184,192.3 1186,192.5 1188,192.4 1190,194.6 1192,195.7 1194,194.6 1196,193.4 1198,194.0 1200,192.9 1202,194.7 1204,195.0 1206,193.2 1208,195.5 1210,194.0 1212,195.2 1214,195.0 1216,195.8 1218,195.0 1220,195.4 1222,194.2 1224,190.4 1226,192.4 1228,189.3 1230,189.9 1232,191.7 1234,192.1 1236,190.6 1238,191.9 1240,189.7 1242,191.8 1244,192.1 1246,188.9 1248,189.4 1250,189.4 1252,188.8 1254,188.2 1256,191.0 1258,190.3 1260,190.3" fill="none" stroke="#ff1a10" stroke-width="1.05" stroke-opacity="0.75"/>
<polyline points="768,202.6 770,201.2 772,199.0 774,198.7 776,197.1 778,198.2 780,199.6 782,199.3 784,197.5 786,200.2 788,198.8 790,199.3 792,199.8 794,200.3 796,200.0 798,203.2 800,201.9 802,200.8 804,201.7 806,201.0 808,200.8 810,200.8 812,200.7 814,199.5 816,199.7 818,201.5 820,200.3 822,199.5 824,199.2 826,198.6 828,202.6 830,201.8 832,201.5 834,202.4 836,202.1 838,200.3 840,199.8 842,197.9 844,199.4 846,200.4 848,198.7 850,196.4 852,198.4 854,197.1 856,198.0 858,200.1 860,200.8 862,197.4 864,198.1 866,196.7 868,197.6 870,197.9 872,197.3 874,197.3 876,198.7 878,196.7 880,196.6 882,198.4 884,198.3 886,198.0 888,197.2 890,198.8 892,197.8 894,197.2 896,196.9 898,194.2 900,194.9 902,199.9 904,199.3 906,197.9 908,198.2 910,201.1 912,199.5 914,198.9 916,201.6 918,201.8 920,202.4 922,201.5 924,203.4 926,200.3 928,201.6 930,199.7 932,202.2 934,203.7 936,203.3 938,204.5 940,207.2 942,208.8 944,209.6 946,203.7 948,193.9 950,188.7 952,183.0 954,187.6 956,187.8 958,184.5 960,186.2 962,191.1 964,200.1 966,201.9 968,191.7 970,180.3 972,183.3 974,190.6 976,198.5 978,204.3 980,205.4 982,208.4 984,208.9 986,207.5 988,202.1 990,200.7 992,198.0 994,196.1 996,195.9 998,197.8 1000,199.1 1002,198.2 1004,201.6 1006,201.0 1008,200.0 1010,200.5 1012,200.8 1014,200.5 1016,200.3 1018,200.8 1020,199.8 1022,200.7 1024,201.2 1026,199.8 1028,200.7 1030,201.8 1032,202.3 1034,199.2 1036,197.9 1038,199.7 1040,199.5 1042,197.9 1044,197.9 1046,198.8 1048,199.4 1050,200.3 1052,199.5 1054,200.1 1056,199.8 1058,199.3 1060,197.6 1062,199.6 1064,198.7 1066,196.9 1068,196.8 1070,197.1 1072,198.0 1074,196.6 1076,197.9 1078,197.4 1080,194.4 1082,195.2 1084,195.6 1086,194.6 1088,194.3 1090,196.4 1092,195.7 1094,195.4 1096,196.4 1098,197.0 1100,195.0 1102,195.8 1104,196.9 1106,196.0 1108,196.6 1110,194.5 1112,196.0 1114,197.5 1116,196.5 1118,196.5 1120,195.5 1122,194.9 1124,194.3 1126,193.3 1128,194.9 1130,196.4 1132,198.2 1134,197.8 1136,197.7 1138,198.0 1140,198.8 1142,198.9 1144,197.3 1146,198.1 1148,199.9 1150,198.6 1152,198.6 1154,198.0 1156,198.6 1158,199.2 1160,197.7 1162,198.2 1164,199.9 1166,200.0 1168,200.9 1170,195.6 1172,195.0 1174,196.2 1176,196.3 1178,195.3 1180,197.3 1182,198.7 1184,198.2 1186,201.6 1188,202.5 1190,202.1 1192,201.6 1194,202.8 1196,202.6 1198,202.1 1200,199.8 1202,198.7 1204,198.8 1206,198.1 1208,195.5 1210,194.9 1212,196.7 1214,197.2 1216,198.2 1218,197.5 1220,195.6 1222,196.7 1224,197.5 1226,196.0 1228,194.9 1230,195.5 1232,195.6 1234,194.0 1236,195.0 1238,195.9 1240,196.0 1242,197.4 1244,195.6 1246,192.9 1248,194.4 1250,197.2 1252,194.6 1254,195.5 1256,196.2 1258,197.2 1260,195.4" fill="none" stroke="#ff1a10" stroke-width="1.05" stroke-opacity="0.75"/>
<polyline points="768,196.3 770,197.2 772,196.4 774,197.9 776,196.1 778,196.6 780,197.3 782,196.7 784,196.6 786,196.5 788,197.1 790,195.8 792,197.9 794,196.0 796,195.3 798,195.1 800,195.6 802,198.2 804,196.3 806,196.4 808,199.7 810,196.1 812,195.6 814,195.2 816,194.9 818,196.8 820,194.4 822,193.9 824,197.5 826,196.6 828,196.0 830,196.9 832,195.3 834,196.6 836,195.0 838,192.9 840,190.8 842,191.4 844,192.9 846,194.4 848,196.5 850,197.0 852,194.2 854,194.8 856,193.6 858,194.7 860,193.3 862,194.6 864,197.2 866,196.3 868,195.9 870,193.8 872,193.0 874,191.5 876,191.2 878,191.0 880,191.8 882,193.2 884,193.8 886,194.4 888,194.7 890,194.5 892,196.7 894,196.4 896,195.6 898,196.8 900,195.4 902,197.8 904,194.8 906,196.2 908,194.5 910,195.8 912,194.0 914,196.1 916,196.6 918,198.6 920,195.5 922,195.9 924,197.6 926,196.0 928,197.7 930,197.8 932,196.3 934,197.6 936,199.1 938,199.0 940,203.0 942,203.0 944,198.3 946,188.5 948,181.9 950,178.2 952,178.8 954,180.5 956,179.4 958,179.2 960,183.9 962,190.1 964,196.7 966,196.4 968,179.9 970,180.8 972,187.1 974,193.5 976,199.8 978,203.6 980,208.6 982,207.0 984,204.1 986,199.3 988,196.4 990,196.4 992,195.9 994,194.0 996,193.6 998,194.7 1000,194.6 1002,194.8 1004,198.1 1006,196.6 1008,197.6 1010,196.9 1012,198.6 1014,196.8 1016,196.6 1018,196.5 1020,195.1 1022,196.6 1024,194.0 1026,195.9 1028,195.4 1030,193.5 1032,196.3 1034,196.8 1036,195.7 1038,196.5 1040,195.9 1042,195.9 1044,196.6 1046,194.4 1048,195.3 1050,192.0 1052,191.4 1054,190.3 1056,191.6 1058,193.3 1060,193.1 1062,193.5 1064,195.3 1066,193.0 1068,191.8 1070,192.8 1072,194.0 1074,192.2 1076,190.4 1078,190.1 1080,191.1 1082,191.1 1084,191.3 1086,189.8 1088,191.4 1090,190.2 1092,191.4 1094,191.7 1096,193.7 1098,190.9 1100,190.4 1102,189.4 1104,191.4 1106,191.2 1108,194.2 1110,193.9 1112,194.5 1114,195.2 1116,195.0 1118,193.5 1120,192.4 1122,192.4 1124,195.3 1126,193.9 1128,195.7 1130,196.2 1132,195.2 1134,193.6 1136,193.8 1138,194.5 1140,193.6 1142,193.7 1144,197.0 1146,195.2 1148,196.5 1150,197.8 1152,195.7 1154,194.1 1156,196.1 1158,196.2 1160,195.8 1162,194.1 1164,193.2 1166,193.7 1168,191.9 1170,194.0 1172,195.6 1174,195.1 1176,194.2 1178,194.3 1180,196.2 1182,197.2 1184,194.7 1186,196.0 1188,196.7 1190,196.9 1192,195.0 1194,193.4 1196,194.1 1198,193.6 1200,192.2 1202,193.4 1204,193.4 1206,195.0 1208,193.0 1210,193.2 1212,191.6 1214,191.9 1216,192.6 1218,193.5 1220,193.5 1222,191.8 1224,189.7 1226,189.6 1228,188.8 1230,190.7 1232,190.0 1234,190.2 1236,189.8 1238,192.3 1240,192.2 1242,190.6 1244,191.6 1246,192.8 1248,191.6 1250,194.1 1252,195.5 1254,193.1 1256,192.5 1258,193.0 1260,193.4" fill="none" stroke="#ff1a10" stroke-width="1.05" stroke-opacity="0.75"/>
<polyline points="768,197.3 770,195.1 772,195.4 774,193.0 776,194.5 778,194.1 780,193.2 782,194.1 784,194.3 786,193.5 788,194.4 790,193.3 792,193.3 794,193.3 796,194.1 798,193.9 800,194.5 802,193.6 804,194.1 806,192.5 808,191.8 810,192.4 812,193.3 814,194.1 816,193.3 818,193.7 820,193.1 822,193.5 824,194.0 826,194.7 828,194.7 830,194.1 832,194.7 834,192.8 836,193.8 838,193.5 840,193.0 842,193.9 844,195.6 846,196.7 848,195.7 850,195.5 852,194.9 854,194.1 856,193.1 858,193.3 860,195.9 862,197.4 864,196.6 866,196.9 868,197.7 870,197.4 872,193.8 874,195.1 876,194.7 878,194.0 880,194.6 882,193.8 884,197.5 886,198.1 888,198.1 890,198.8 892,196.5 894,198.1 896,199.6 898,196.0 900,195.1 902,196.8 904,197.5 906,197.9 908,196.2 910,197.3 912,197.2 914,199.3 916,199.8 918,198.3 920,198.8 922,199.6 924,199.1 926,200.9 928,200.8 930,200.3 932,199.7 934,201.2 936,201.7 938,202.2 940,208.2 942,213.5 944,213.5 946,197.5 948,179.4 950,168.2 952,164.6 954,171.2 956,172.7 958,165.6 960,171.4 962,182.5 964,198.6 966,204.9 968,178.5 970,165.8 972,169.2 974,181.2 976,194.6 978,208.6 980,213.5 982,213.5 984,213.3 986,211.5 988,205.9 990,203.3 992,201.1 994,199.0 996,198.4 998,198.3 1000,196.9 1002,195.4 1004,194.4 1006,195.5 1008,197.5 1010,196.5 1012,195.6 1014,194.4 1016,194.2 1018,193.6 1020,195.1 1022,193.9 1024,195.4 1026,195.6 1028,195.8 1030,195.4 1032,192.5 1034,194.2 1036,192.9 1038,192.4 1040,192.0 1042,192.8 1044,194.6 1046,194.2 1048,194.4 1050,194.0 1052,195.1 1054,193.6 1056,192.8 1058,194.2 1060,193.4 1062,192.5 1064,192.1 1066,193.1 1068,191.7 1070,192.1 1072,191.1 1074,192.2 1076,192.6 1078,192.7 1080,195.7 1082,193.8 1084,195.1 1086,195.3 1088,194.0 1090,193.9 1092,194.7 1094,193.7 1096,194.0 1098,194.1 1100,194.1 1102,194.8 1104,193.4 1106,192.0 1108,193.4 1110,193.8 1112,195.2 1114,195.6 1116,197.1 1118,196.6 1120,195.9 1122,195.1 1124,195.7 1126,195.9 1128,195.9 1130,196.2 1132,197.1 1134,197.1 1136,199.3 1138,196.5 1140,196.7 1142,193.6 1144,193.8 1146,193.7 1148,196.6 1150,197.4 1152,197.0 1154,197.6 1156,196.5 1158,197.5 1160,195.8 1162,197.4 1164,196.6 1166,195.6 1168,195.7 1170,196.1 1172,194.6 1174,193.3 1176,194.3 1178,195.2 1180,197.3 1182,194.1 1184,194.2 1186,191.4 1188,193.3 1190,194.4 1192,194.0 1194,193.2 1196,193.2 1198,193.2 1200,193.6 1202,193.8 1204,192.9 1206,192.4 1208,189.3 1210,190.7 1212,191.6 1214,192.2 1216,192.0 1218,191.8 1220,191.1 1222,189.8 1224,190.6 1226,190.5 1228,191.7 1230,192.2 1232,192.0 1234,193.8 1236,193.9 1238,194.1 1240,193.9 1242,194.3 1244,193.0 1246,191.3 1248,191.3 1250,192.8 1252,195.5 1254,196.1 1256,196.0 1258,196.2 1260,195.4" fill="none" stroke="#ff1a10" stroke-width="1.05" stroke-opacity="0.75"/>
<polyline points="768,192.2 770,191.6 772,188.8 774,191.3 776,192.2 778,191.6 780,191.1 782,190.6 784,192.7 786,191.7 788,192.0 790,194.6 792,194.6 794,194.0 796,192.3 798,191.0 800,189.9 802,191.8 804,192.2 806,191.9 808,190.3 810,192.3 812,190.8 814,191.6 816,193.5 818,192.9 820,192.3 822,192.6 824,193.2 826,193.0 828,192.7 830,189.5 832,191.2 834,193.2 836,194.2 838,193.6 840,193.8 842,195.2 844,195.3 846,195.0 848,195.9 850,195.9 852,195.2 854,193.0 856,194.7 858,195.5 860,195.8 862,193.6 864,192.3 866,190.5 868,190.0 870,193.0 872,194.7 874,193.4 876,194.6 878,195.6 880,196.2 882,197.0 884,196.9 886,196.8 888,196.7 890,194.3 892,192.5 894,194.3 896,194.8 898,195.4 900,197.0 902,195.3 904,194.7 906,195.2 908,194.2 910,196.2 912,197.2 914,195.4 916,196.6 918,197.3 920,198.8 922,197.6 924,197.8 926,198.5 928,199.4 930,196.8 932,199.4 934,200.6 936,203.1 938,210.1 940,213.5 942,204.5 944,186.6 946,169.9 948,162.3 950,164.6 952,171.1 954,166.6 956,163.6 958,174.3 960,190.5 962,199.0 964,190.2 966,158.5 968,161.9 970,169.9 972,183.4 974,196.4 976,209.1 978,213.5 980,211.2 982,210.7 984,205.5 986,200.2 988,199.4 990,198.2 992,197.4 994,198.1 996,195.5 998,193.5 1000,193.7 1002,193.6 1004,195.3 1006,195.7 1008,193.7 1010,193.3 1012,192.1 1014,190.0 1016,188.9 1018,188.7 1020,188.9 1022,191.3 1024,190.6 1026,189.7 1028,187.2 1030,187.1 1032,187.9 1034,187.8 1036,187.9 1038,188.0 1040,191.2 1042,190.8 1044,190.9 1046,189.7 1048,190.3 1050,190.9 1052,191.1 1054,189.9 1056,189.8 1058,190.2 1060,189.9 1062,189.5 1064,190.5 1066,191.3 1068,192.3 1070,191.4 1072,192.5 1074,189.2 1076,187.0 1078,189.1 1080,190.5 1082,188.5 1084,189.0 1086,192.7 1088,192.3 1090,192.1 1092,188.5 1094,189.2 1096,190.8 1098,190.0 1100,192.4 1102,192.4 1104,194.5 1106,194.8 1108,194.9 1110,195.0 1112,193.6 1114,194.0 1116,195.8 1118,193.5 1120,196.2 1122,195.4 1124,193.0 1126,192.4 1128,191.8 1130,192.7 1132,193.9 1134,191.7 1136,192.8 1138,194.7 1140,194.0 1142,193.8 1144,192.7 1146,192.9 1148,195.1 1150,194.0 1152,193.3 1154,192.2 1156,191.7 1158,192.4 1160,191.9 1162,192.5 1164,191.7 1166,190.7 1168,191.1 1170,191.2 1172,191.7 1174,190.0 1176,190.9 1178,192.7 1180,191.4 1182,192.0 1184,189.9 1186,189.0 1188,189.6 1190,189.2 1192,191.2 1194,189.5 1196,189.7 1198,188.6 1200,190.5 1202,190.8 1204,187.7 1206,186.4 1208,188.2 1210,189.5 1212,187.5 1214,190.3 1216,191.9 1218,190.4 1220,188.8 1222,190.9 1224,189.9 1226,189.5 1228,190.6 1230,189.3 1232,189.4 1234,189.9 1236,193.7 1238,191.8 1240,191.8 1242,191.1 1244,190.5 1246,190.5 1248,191.7 1250,192.3 1252,193.5 1254,194.9 1256,195.2 1258,196.3 1260,193.3" fill="none" stroke="#ff1a10" stroke-width="1.05" stroke-opacity="0.75"/>
<polyline points="768,193.2 770,194.0 772,194.1 774,194.2 776,193.2 778,193.9 780,194.9 782,196.5 784,195.4 786,194.8 788,196.6 790,195.8 792,193.3 794,194.2 796,197.6 798,198.0 800,198.5 802,198.6 804,197.5 806,193.8 808,194.9 810,193.9 812,195.0 814,194.4 816,195.6 818,196.7 820,197.7 822,197.5 824,198.9 826,199.4 828,200.5 830,199.5 832,197.1 834,197.3 836,196.8 838,198.8 840,198.8 842,199.8 844,196.5 846,196.9 848,197.7 850,199.3 852,200.4 854,200.4 856,199.9 858,198.5 860,197.8 862,198.5 864,196.6 866,198.9 868,199.7 870,198.9 872,199.9 874,198.2 876,195.1 878,198.8 880,199.5 882,200.3 884,199.1 886,200.6 888,201.6 890,200.5 892,198.6 894,197.1 896,195.8 898,197.4 900,198.8 902,198.3 904,198.1 906,197.5 908,197.1 910,194.8 912,195.6 914,200.3 916,200.6 918,202.2 920,200.9 922,200.4 924,201.1 926,199.7 928,201.0 930,202.7 932,201.2 934,203.6 936,203.2 938,207.9 940,213.3 942,213.5 944,199.0 946,182.7 948,170.1 950,164.2 952,170.6 954,171.0 956,166.0 958,170.4 960,184.5 962,199.8 964,205.6 966,177.5 968,163.2 970,167.7 972,181.5 974,195.5 976,208.6 978,213.5 980,213.5 982,213.5 984,213.5 986,208.7 988,204.4 990,202.9 992,201.4 994,200.1 996,199.7 998,196.5 1000,195.2 1002,196.9 1004,197.6 1006,195.6 1008,194.7 1010,194.7 1012,193.4 1014,193.6 1016,193.2 1018,192.7 1020,194.4 1022,194.1 1024,193.4 1026,191.6 1028,191.7 1030,192.4 1032,193.3 1034,193.5 1036,193.0 1038,192.6 1040,191.3 1042,194.1 1044,193.3 1046,194.7 1048,193.0 1050,192.3 1052,193.1 1054,192.4 1056,192.8 1058,192.0 1060,194.3 1062,194.4 1064,194.0 1066,192.8 1068,194.9 1070,193.4 1072,196.1 1074,195.6 1076,198.1 1078,196.0 1080,196.6 1082,197.2 1084,197.6 1086,198.5 1088,195.6 1090,196.8 1092,196.3 1094,196.4 1096,196.6 1098,198.0 1100,199.5 1102,199.8 1104,198.8 1106,197.8 1108,199.6 1110,197.2 1112,197.0 1114,198.5 1116,195.0 1118,195.5 1120,196.1 1122,195.3 1124,196.7 1126,197.5 1128,198.0 1130,198.9 1132,196.2 1134,193.8 1136,193.8 1138,193.1 1140,194.7 1142,194.6 1144,194.5 1146,194.1 1148,194.3 1150,191.2 1152,193.1 1154,193.5 1156,194.7 1158,194.8 1160,194.3 1162,191.2 1164,191.3 1166,191.6 1168,192.2 1170,194.9 1172,192.9 1174,190.1 1176,190.6 1178,190.0 1180,189.8 1182,190.7 1184,191.5 1186,191.3 1188,192.6 1190,191.9 1192,192.4 1194,192.9 1196,192.4 1198,192.4 1200,193.3 1202,194.8 1204,195.3 1206,195.4 1208,193.2 1210,193.1 1212,193.7 1214,193.9 1216,192.9 1218,193.3 1220,194.3 1222,195.5 1224,196.6 1226,195.9 1228,197.4 1230,195.9 1232,193.9 1234,193.9 1236,196.0 1238,196.5 1240,196.4 1242,196.8 1244,198.4 1246,197.9 1248,199.1 1250,198.6 1252,197.5 1254,200.1 1256,199.8 1258,199.8 1260,200.6" fill="none" stroke="#ff1a10" stroke-width="1.05" stroke-opacity="0.75"/>
<polyline points="768,188.9 770,186.3 772,187.3 774,188.2 776,187.9 778,189.0 780,187.0 782,190.2 784,189.3 786,191.1 788,192.5 790,193.2 792,193.9 794,193.0 796,193.6 798,192.5 800,194.0 802,193.4 804,194.6 806,192.9 808,194.2 810,194.4 812,193.0 814,193.3 816,190.5 818,192.1 820,194.4 822,194.4 824,191.4 826,191.4 828,190.6 830,190.5 832,191.0 834,190.7 836,191.2 838,192.5 840,193.7 842,195.2 844,191.5 846,192.5 848,191.3 850,191.8 852,190.5 854,193.1 856,192.0 858,190.6 860,190.9 862,190.8 864,189.4 866,189.9 868,189.5 870,190.3 872,190.4 874,193.2 876,192.4 878,191.7 880,190.1 882,189.6 884,190.7 886,187.5 888,189.2 890,190.5 892,188.3 894,188.5 896,189.7 898,189.4 900,188.8 902,189.5 904,189.1 906,188.3 908,189.6 910,189.9 912,189.6 914,192.2 916,191.1 918,193.6 920,193.9 922,192.7 924,194.9 926,193.4 928,195.2 930,194.3 932,196.3 934,195.9 936,199.7 938,204.3 940,210.3 942,205.0 944,191.5 946,174.4 948,160.5 950,158.7 952,165.8 954,165.9 956,159.1 958,162.9 960,177.9 962,193.9 964,200.3 966,162.9 968,155.0 970,163.0 972,175.7 974,189.9 976,203.3 978,211.5 980,210.6 982,208.5 984,202.0 986,196.2 988,191.7 990,193.9 992,194.9 994,191.9 996,191.3 998,193.9 1000,191.6 1002,192.0 1004,190.8 1006,185.8 1008,185.9 1010,188.7 1012,188.1 1014,188.3 1016,186.3 1018,188.6 1020,186.7 1022,186.6 1024,188.9 1026,186.6 1028,185.9 1030,187.7 1032,189.2 1034,188.2 1036,186.3 1038,186.7 1040,186.4 1042,186.9 1044,185.9 1046,185.4 1048,185.6 1050,186.9 1052,186.4 1054,184.5 1056,184.7 1058,188.9 1060,187.7 1062,189.5 1064,191.2 1066,191.2 1068,192.2 1070,192.1 1072,190.0 1074,189.7 1076,192.4 1078,190.8 1080,192.2 1082,191.5 1084,192.4 1086,190.2 1088,188.4 1090,187.5 1092,187.2 1094,186.9 1096,187.9 1098,189.1 1100,188.7 1102,191.1 1104,192.6 1106,190.1 1108,190.3 1110,190.6 1112,190.8 1114,190.8 1116,188.4 1118,189.0 1120,188.1 1122,186.5 1124,187.5 1126,189.6 1128,188.7 1130,189.6 1132,187.5 1134,187.8 1136,187.9 1138,184.8 1140,186.9 1142,186.4 1144,185.9 1146,187.1 1148,187.2 1150,187.9 1152,186.5 1154,187.2 1156,187.1 1158,186.3 1160,186.4 1162,185.2 1164,186.0 1166,186.2 1168,187.8 1170,183.9 1172,184.3 1174,184.9 1176,184.7 1178,183.1 1180,184.4 1182,184.3 1184,184.1 1186,185.4 1188,185.1 1190,186.2 1192,187.9 1194,188.4 1196,190.4 1198,190.8 1200,188.9 1202,187.9 1204,186.8 1206,187.7 1208,187.5 1210,189.9 1212,191.2 1214,191.9 1216,190.5 1218,190.1 1220,189.4 1222,189.2 1224,187.8 1226,189.1 1228,189.5 1230,187.3 1232,189.6 1234,190.1 1236,188.8 1238,189.9 1240,188.4 1242,188.6 1244,189.7 1246,191.8 1248,192.1 1250,191.2 1252,192.4 1254,189.2 1256,190.4 1258,189.4 1260,188.7" fill="none" stroke="#ff1a10" stroke-width="1.05" stroke-opacity="0.75"/>
<polyline points="768,199.6 770,198.1 772,200.7 774,202.1 776,201.2 778,202.1 780,200.3 782,201.6 784,200.6 786,199.6 788,200.2 790,200.1 792,200.6 794,198.5 796,197.4 798,197.6 800,198.3 802,197.9 804,198.8 806,199.0 808,198.1 810,198.4 812,200.0 814,198.2 816,199.0 818,198.9 820,197.8 822,197.9 824,195.4 826,197.7 828,198.3 830,197.7 832,196.2 834,196.3 836,197.2 838,198.8 840,199.7 842,198.1 844,198.0 846,194.9 848,197.0 850,195.8 852,196.2 854,194.3 856,195.3 858,196.3 860,195.7 862,195.5 864,194.7 866,195.4 868,195.5 870,195.2 872,195.7 874,194.7 876,195.2 878,194.9 880,195.9 882,195.3 884,196.2 886,195.3 888,194.3 890,193.4 892,193.3 894,192.4 896,191.9 898,194.8 900,195.1 902,197.9 904,196.8 906,197.8 908,196.1 910,196.4 912,195.4 914,195.3 916,199.0 918,199.6 920,199.1 922,197.9 924,199.2 926,199.9 928,200.0 930,199.7 932,199.5 934,197.5 936,199.2 938,199.6 940,204.9 942,211.0 944,209.5 946,198.8 948,181.7 950,169.5 952,164.6 954,167.9 956,172.2 958,166.2 960,166.9 962,178.9 964,194.9 966,201.4 968,183.1 970,160.2 972,165.1 974,176.9 976,193.4 978,208.2 980,213.5 982,213.5 984,213.5 986,211.1 988,204.3 990,201.4 992,198.3 994,197.1 996,198.8 998,197.3 1000,198.3 1002,198.4 1004,195.6 1006,191.0 1008,191.3 1010,193.1 1012,190.5 1014,190.0 1016,192.8 1018,193.4 1020,191.8 1022,195.1 1024,192.6 1026,192.0 1028,193.4 1030,192.3 1032,190.8 1034,191.9 1036,192.5 1038,194.7 1040,194.9 1042,195.1 1044,194.1 1046,194.9 1048,194.7 1050,196.1 1052,197.9 1054,196.9 1056,195.6 1058,196.8 1060,196.4 1062,196.3 1064,195.9 1066,196.9 1068,198.7 1070,198.2 1072,199.3 1074,199.9 1076,199.1 1078,200.0 1080,201.5 1082,199.2 1084,198.9 1086,197.9 1088,196.7 1090,197.0 1092,196.5 1094,193.1 1096,193.5 1098,196.1 1100,194.7 1102,195.1 1104,196.3 1106,195.8 1108,197.0 1110,196.3 1112,195.9 1114,193.6 1116,193.1 1118,195.5 1120,194.2 1122,194.5 1124,193.3 1126,192.4 1128,193.7 1130,192.7 1132,191.9 1134,195.2 1136,192.2 1138,192.8 1140,188.3 1142,189.3 1144,191.4 1146,192.3 1148,192.5 1150,191.2 1152,190.7 1154,191.3 1156,192.7 1158,190.5 1160,192.2 1162,193.6 1164,195.5 1166,195.9 1168,194.0 1170,192.1 1172,192.7 1174,192.0 1176,194.5 1178,193.6 1180,193.0 1182,194.1 1184,194.2 1186,195.6 1188,195.2 1190,196.4 1192,195.1 1194,194.4 1196,194.6 1198,195.5 1200,195.1 1202,197.9 1204,195.8 1206,196.0 1208,197.3 1210,197.7 1212,198.9 1214,197.1 1216,195.7 1218,195.1 1220,196.9 1222,196.2 1224,196.0 1226,197.2 1228,197.6 1230,197.6 1232,199.7 1234,198.1 1236,198.4 1238,200.3 1240,200.2 1242,198.2 1244,198.9 1246,199.2 1248,199.1 1250,196.1 1252,195.5 1254,194.7 1256,195.5 1258,193.3 1260,192.6" fill="none" stroke="#ff1a10" stroke-width="1.05" stroke-opacity="0.75"/>
<polyline points="768,197.2 770,197.0 772,196.3 774,197.5 776,195.1 778,196.6 780,195.0 782,193.5 784,196.8 786,200.0 788,200.9 790,197.5 792,197.8 794,195.8 796,195.3 798,195.6 800,194.5 802,195.9 804,195.7 806,193.6 808,191.9 810,194.0 812,196.3 814,196.7 816,197.2 818,196.2 820,196.6 822,197.5 824,198.5 826,196.3 828,196.0 830,195.2 832,194.2 834,194.4 836,191.3 838,192.1 840,192.0 842,193.5 844,193.6 846,193.8 848,194.2 850,195.5 852,191.9 854,192.0 856,192.3 858,192.0 860,191.4 862,192.4 864,195.1 866,196.4 868,196.3 870,195.1 872,196.0 874,196.0 876,196.3 878,195.2 880,195.7 882,194.9 884,195.8 886,193.8 888,193.5 890,193.7 892,194.0 894,197.0 896,195.1 898,195.2 900,196.7 902,196.2 904,195.6 906,196.3 908,195.0 910,194.5 912,192.7 914,196.4 916,197.0 918,198.1 920,200.7 922,199.9 924,198.5 926,197.3 928,195.8 930,196.7 932,199.0 934,199.1 936,199.6 938,197.0 940,199.8 942,203.2 944,201.9 946,197.1 948,190.0 950,183.2 952,180.2 954,182.4 956,186.3 958,182.1 960,182.6 962,187.9 964,195.0 966,198.1 968,193.0 970,181.2 972,182.9 974,185.8 976,193.3 978,199.1 980,202.7 982,203.5 984,203.3 986,201.1 988,198.6 990,197.7 992,196.9 994,197.2 996,196.9 998,196.6 1000,198.1 1002,196.4 1004,196.3 1006,193.6 1008,192.7 1010,193.6 1012,190.5 1014,191.8 1016,192.8 1018,190.4 1020,191.7 1022,192.7 1024,192.0 1026,191.4 1028,194.3 1030,192.2 1032,193.5 1034,194.5 1036,194.2 1038,190.5 1040,189.9 1042,191.3 1044,192.6 1046,193.6 1048,194.7 1050,194.8 1052,194.7 1054,196.6 1056,198.1 1058,197.2 1060,197.2 1062,199.0 1064,197.5 1066,196.4 1068,196.1 1070,196.7 1072,197.1 1074,196.6 1076,196.4 1078,195.4 1080,194.6 1082,193.1 1084,195.4 1086,194.9 1088,195.8 1090,195.7 1092,194.3 1094,195.1 1096,192.8 1098,194.9 1100,193.2 1102,195.8 1104,195.0 1106,194.0 1108,194.5 1110,193.7 1112,194.5 1114,193.3 1116,192.0 1118,192.9 1120,190.9 1122,190.3 1124,190.6 1126,188.9 1128,188.2 1130,190.3 1132,192.2 1134,191.5 1136,192.3 1138,191.8 1140,190.3 1142,189.9 1144,189.6 1146,190.6 1148,188.7 1150,190.8 1152,190.5 1154,190.1 1156,191.4 1158,194.0 1160,194.8 1162,195.3 1164,197.2 1166,198.6 1168,198.3 1170,196.7 1172,194.4 1174,194.6 1176,192.3 1178,193.4 1180,192.6 1182,192.8 1184,193.5 1186,193.0 1188,193.5 1190,193.3 1192,194.9 1194,195.9 1196,196.5 1198,195.8 1200,194.4 1202,197.1 1204,197.5 1206,197.9 1208,198.1 1210,197.1 1212,196.3 1214,199.9 1216,199.4 1218,199.1 1220,196.5 1222,195.8 1224,196.0 1226,193.0 1228,194.3 1230,194.2 1232,196.3 1234,194.4 1236,195.0 1238,198.4 1240,198.5 1242,195.9 1244,193.0 1246,194.3 1248,193.1 1250,194.4 1252,193.7 1254,192.8 1256,190.8 1258,190.5 1260,192.1" fill="none" stroke="#ff1a10" stroke-width="1.05" stroke-opacity="0.75"/>
<polyline points="768,196.5 770,194.9 772,197.1 774,196.6 776,196.5 778,196.8 780,195.4 782,196.3 784,197.1 786,195.2 788,195.0 790,193.1 792,192.0 794,193.5 796,195.7 798,195.6 800,196.2 802,195.4 804,194.6 806,194.4 808,194.5 810,195.3 812,195.7 814,195.6 816,195.1 818,195.6 820,195.5 822,197.7 824,196.4 826,196.9 828,197.1 830,194.6 832,195.2 834,192.9 836,196.3 838,195.8 840,195.8 842,194.7 844,195.0 846,193.5 848,193.2 850,194.8 852,193.9 854,193.0 856,194.9 858,194.0 860,194.4 862,193.3 864,194.6 866,195.5 868,196.6 870,196.5 872,196.2 874,196.1 876,195.4 878,197.5 880,197.7 882,195.6 884,193.5 886,194.0 888,193.5 890,195.5 892,196.4 894,196.3 896,195.4 898,195.6 900,195.6 902,195.4 904,197.8 906,195.5 908,194.7 910,196.0 912,193.4 914,194.0 916,195.1 918,196.2 920,196.2 922,196.5 924,199.0 926,198.0 928,199.7 930,201.2 932,201.1 934,202.1 936,199.7 938,204.3 940,209.7 942,213.5 944,209.8 946,194.1 948,178.2 950,167.7 952,163.9 954,170.7 956,171.9 958,165.0 960,169.8 962,186.2 964,200.1 966,200.0 968,169.9 970,163.7 972,173.3 974,184.6 976,199.1 978,211.3 980,213.5 982,213.5 984,212.2 986,205.0 988,201.6 990,199.2 992,200.2 994,196.8 996,195.2 998,194.2 1000,193.6 1002,194.5 1004,197.1 1006,194.7 1008,197.5 1010,195.4 1012,192.4 1014,190.9 1016,192.2 1018,192.4 1020,194.4 1022,193.8 1024,195.1 1026,195.3 1028,195.2 1030,196.9 1032,195.9 1034,195.0 1036,193.4 1038,194.7 1040,196.1 1042,197.8 1044,197.5 1046,197.5 1048,198.3 1050,199.2 1052,197.5 1054,199.1 1056,197.7 1058,198.3 1060,196.6 1062,196.0 1064,195.6 1066,196.0 1068,196.9 1070,196.2 1072,194.7 1074,193.2 1076,194.1 1078,192.6 1080,193.5 1082,194.3 1084,195.2 1086,197.5 1088,194.5 1090,194.7 1092,192.7 1094,191.2 1096,190.3 1098,192.4 1100,191.6 1102,191.7 1104,192.9 1106,195.3 1108,193.3 1110,191.4 1112,190.6 1114,189.7 1116,191.4 1118,191.9 1120,192.0 1122,192.6 1124,193.1 1126,192.2 1128,190.3 1130,191.5 1132,194.0 1134,193.3 1136,192.6 1138,194.3 1140,193.5 1142,192.9 1144,192.4 1146,192.1 1148,191.7 1150,193.8 1152,192.8 1154,194.4 1156,192.5 1158,192.7 1160,193.4 1162,196.1 1164,194.7 1166,195.0 1168,195.1 1170,194.9 1172,196.0 1174,195.6 1176,195.8 1178,194.3 1180,196.0 1182,197.0 1184,196.9 1186,198.5 1188,197.6 1190,195.5 1192,196.7 1194,198.0 1196,196.4 1198,195.1 1200,195.4 1202,196.4 1204,194.3 1206,194.4 1208,192.7 1210,192.8 1212,192.7 1214,193.6 1216,192.6 1218,193.3 1220,194.2 1222,193.2 1224,193.1 1226,196.0 1228,193.3 1230,192.7 1232,192.1 1234,191.9 1236,193.4 1238,191.9 1240,189.6 1242,192.1 1244,190.4 1246,191.7 1248,190.5 1250,192.7 1252,192.4 1254,192.8 1256,192.7 1258,192.5 1260,192.7" fill="none" stroke="#ff1a10" stroke-width="1.05" stroke-opacity="0.75"/>
<polyline points="768,194.6 770,194.2 772,192.1 774,193.6 776,190.9 778,192.6 780,193.7 782,193.4 784,192.6 786,192.1 788,192.8 790,194.1 792,196.0 794,197.3 796,195.9 798,192.0 800,191.9 802,191.4 804,193.3 806,194.4 808,195.7 810,195.1 812,194.9 814,194.0 816,193.5 818,191.5 820,192.5 822,192.7 824,192.3 826,192.1 828,193.1 830,193.9 832,195.7 834,195.4 836,193.9 838,193.8 840,193.4 842,194.1 844,194.8 846,195.1 848,195.3 850,195.9 852,195.1 854,194.5 856,194.1 858,194.0 860,195.4 862,195.5 864,196.3 866,196.4 868,197.3 870,195.0 872,196.0 874,197.0 876,197.0 878,198.7 880,198.7 882,197.1 884,196.9 886,198.1 888,198.3 890,199.7 892,199.3 894,198.9 896,200.2 898,198.1 900,196.8 902,196.5 904,198.0 906,196.3 908,197.2 910,195.3 912,195.4 914,197.4 916,197.6 918,197.3 920,199.8 922,202.2 924,200.5 926,199.4 928,199.5 930,198.2 932,197.0 934,197.1 936,199.6 938,201.3 940,206.9 942,213.5 944,211.0 946,197.6 948,181.2 950,171.3 952,168.3 954,173.2 956,172.7 958,166.4 960,167.3 962,180.9 964,195.3 966,202.3 968,175.9 970,164.1 972,168.2 974,179.9 976,192.9 978,206.8 980,213.0 982,213.5 984,211.7 986,208.0 988,204.4 990,201.4 992,199.7 994,197.9 996,196.0 998,195.7 1000,195.4 1002,195.0 1004,197.0 1006,197.5 1008,197.6 1010,195.1 1012,195.8 1014,196.0 1016,196.5 1018,197.5 1020,198.3 1022,195.2 1024,194.6 1026,195.1 1028,196.4 1030,197.2 1032,196.9 1034,196.8 1036,196.6 1038,198.2 1040,198.7 1042,197.4 1044,195.2 1046,194.3 1048,194.3 1050,194.5 1052,195.9 1054,197.7 1056,196.8 1058,196.8 1060,194.7 1062,193.1 1064,195.7 1066,191.7 1068,191.9 1070,192.7 1072,192.2 1074,192.6 1076,190.4 1078,191.4 1080,191.0 1082,192.3 1084,192.8 1086,190.2 1088,193.6 1090,192.5 1092,192.2 1094,193.7 1096,194.0 1098,191.0 1100,191.9 1102,191.4 1104,191.0 1106,189.6 1108,191.1 1110,191.6 1112,189.6 1114,190.4 1116,190.2 1118,190.1 1120,191.5 1122,192.9 1124,195.5 1126,194.7 1128,193.3 1130,195.3 1132,195.5 1134,195.7 1136,196.3 1138,194.6 1140,194.2 1142,195.2 1144,195.7 1146,196.0 1148,196.4 1150,196.1 1152,197.4 1154,198.0 1156,196.3 1158,196.0 1160,197.1 1162,196.5 1164,195.7 1166,197.7 1168,196.2 1170,196.6 1172,198.4 1174,199.4 1176,198.8 1178,196.4 1180,195.9 1182,196.1 1184,197.2 1186,194.7 1188,195.3 1190,198.0 1192,196.7 1194,196.0 1196,197.0 1198,196.3 1200,195.1 1202,195.3 1204,195.4 1206,195.7 1208,196.1 1210,193.5 1212,192.5 1214,193.7 1216,193.5 1218,194.3 1220,192.8 1222,192.7 1224,191.3 1226,189.9 1228,189.8 1230,190.2 1232,191.8 1234,191.8 1236,191.1 1238,191.0 1240,190.9 1242,188.5 1244,191.5 1246,189.6 1248,189.6 1250,188.4 1252,189.1 1254,190.3 1256,190.6 1258,190.7 1260,190.8" fill="none" stroke="#ff1a10" stroke-width="1.05" stroke-opacity="0.75"/>
<polyline points="768,195.4 770,196.0 772,197.5 774,196.7 776,197.6 778,198.9 780,198.6 782,196.6 784,196.1 786,195.8 788,194.3 790,197.4 792,197.6 794,197.8 796,196.5 798,197.0 800,196.0 802,195.5 804,196.7 806,198.3 808,199.1 810,199.2 812,199.7 814,200.1 816,199.8 818,199.1 820,198.6 822,198.8 824,199.6 826,200.5 828,201.6 830,201.3 832,199.7 834,200.3 836,202.0 838,202.8 840,202.9 842,201.5 844,202.0 846,199.8 848,198.7 850,198.9 852,200.2 854,199.8 856,197.9 858,197.6 860,201.2 862,201.2 864,200.2 866,199.8 868,202.4 870,202.7 872,203.4 874,203.4 876,202.5 878,201.3 880,200.3 882,201.8 884,201.5 886,200.5 888,201.0 890,200.3 892,202.0 894,202.9 896,200.7 898,202.0 900,202.3 902,201.2 904,203.1 906,203.7 908,202.1 910,198.4 912,198.5 914,199.6 916,197.6 918,198.0 920,200.3 922,202.2 924,201.1 926,200.9 928,201.9 930,202.0 932,201.5 934,202.7 936,204.6 938,206.7 940,213.5 942,213.5 944,213.0 946,195.8 948,179.4 950,170.0 952,169.2 954,177.4 956,173.7 958,169.0 960,176.5 962,189.5 964,204.7 966,202.7 968,165.4 970,165.0 972,175.1 974,189.3 976,202.6 978,213.5 980,213.5 982,213.5 984,213.5 986,211.7 988,205.3 990,200.2 992,199.4 994,199.5 996,200.0 998,198.8 1000,198.1 1002,201.1 1004,202.2 1006,203.0 1008,202.1 1010,201.5 1012,200.3 1014,199.6 1016,198.7 1018,197.3 1020,197.6 1022,200.2 1024,197.9 1026,197.2 1028,198.5 1030,200.7 1032,200.5 1034,200.3 1036,198.0 1038,198.8 1040,197.6 1042,198.7 1044,198.2 1046,198.3 1048,198.1 1050,197.3 1052,198.0 1054,197.3 1056,197.1 1058,197.7 1060,196.3 1062,195.9 1064,195.8 1066,196.2 1068,199.0 1070,196.2 1072,196.5 1074,196.0 1076,196.5 1078,193.9 1080,193.5 1082,194.4 1084,193.1 1086,194.1 1088,194.9 1090,194.7 1092,196.4 1094,197.1 1096,196.3 1098,194.8 1100,198.0 1102,195.6 1104,196.3 1106,195.8 1108,197.0 1110,195.9 1112,198.6 1114,196.0 1116,196.5 1118,197.3 1120,196.0 1122,196.6 1124,197.8 1126,196.3 1128,197.6 1130,195.8 1132,198.0 1134,197.3 1136,197.1 1138,197.1 1140,197.0 1142,195.4 1144,195.3 1146,196.0 1148,196.8 1150,198.9 1152,199.3 1154,200.8 1156,202.0 1158,202.7 1160,201.9 1162,201.6 1164,199.8 1166,199.7 1168,197.3 1170,199.4 1172,199.3 1174,199.9 1176,199.6 1178,200.8 1180,200.7 1182,199.3 1184,199.9 1186,199.1 1188,199.3 1190,199.5 1192,198.2 1194,197.4 1196,194.6 1198,194.3 1200,192.9 1202,195.1 1204,195.0 1206,194.4 1208,194.6 1210,195.9 1212,195.6 1214,195.2 1216,195.6 1218,194.6 1220,192.8 1222,192.1 1224,193.7 1226,195.3 1228,195.8 1230,193.2 1232,194.1 1234,196.5 1236,194.6 1238,194.1 1240,195.9 1242,193.7 1244,196.3 1246,194.9 1248,194.8 1250,194.4 1252,193.9 1254,193.6 1256,193.7 1258,194.9 1260,195.1" fill="none" stroke="#ff1a10" stroke-width="1.05" stroke-opacity="0.75"/>
<polyline points="768,182.7 770,183.7 772,183.0 774,183.1 776,181.6 778,181.1 780,182.8 782,185.2 784,184.7 786,185.7 788,185.0 790,184.5 792,185.2 794,188.0 796,185.4 798,185.5 800,184.5 802,184.5 804,186.2 806,185.8 808,186.7 810,186.0 812,185.3 814,184.1 816,185.4 818,186.9 820,187.4 822,187.1 824,187.3 826,186.5 828,185.1 830,186.2 832,188.2 834,186.1 836,189.1 838,190.8 840,190.8 842,188.2 844,187.8 846,186.9 848,185.9 850,187.7 852,187.2 854,184.9 856,185.8 858,184.0 860,184.5 862,184.5 864,184.7 866,184.4 868,186.3 870,188.1 872,187.7 874,186.9 876,186.4 878,185.5 880,186.1 882,185.5 884,185.2 886,185.6 888,183.0 890,182.8 892,186.3 894,185.1 896,185.6 898,184.9 900,184.8 902,184.7 904,185.6 906,187.3 908,186.4 910,183.6 912,184.6 914,185.9 916,186.2 918,186.6 920,186.1 922,186.9 924,187.9 926,188.4 928,186.8 930,187.3 932,187.3 934,188.7 936,187.4 938,193.2 940,199.7 942,199.3 944,189.3 946,175.3 948,165.3 950,162.7 952,167.8 954,167.1 956,161.9 958,163.9 960,173.9 962,184.8 964,190.6 966,173.9 968,160.1 970,164.9 972,172.1 974,181.9 976,191.8 978,199.8 980,200.0 982,202.3 984,195.0 986,190.6 988,188.7 990,184.9 992,185.8 994,184.0 996,184.1 998,183.0 1000,184.2 1002,182.9 1004,184.9 1006,184.2 1008,186.5 1010,185.0 1012,184.8 1014,184.5 1016,184.7 1018,183.9 1020,182.9 1022,181.9 1024,183.0 1026,181.0 1028,181.8 1030,182.1 1032,183.4 1034,183.3 1036,184.3 1038,184.1 1040,183.7 1042,182.6 1044,179.9 1046,180.2 1048,182.2 1050,182.7 1052,182.8 1054,181.1 1056,181.8 1058,181.8 1060,179.9 1062,178.7 1064,180.8 1066,180.4 1068,179.8 1070,180.3 1072,182.0 1074,179.9 1076,177.9 1078,179.3 1080,178.0 1082,178.2 1084,178.4 1086,178.0 1088,179.6 1090,179.1 1092,182.7 1094,182.2 1096,180.5 1098,181.5 1100,181.9 1102,180.8 1104,181.1 1106,181.5 1108,181.0 1110,182.6 1112,182.4 1114,182.8 1116,184.4 1118,182.4 1120,181.4 1122,183.6 1124,185.6 1126,184.0 1128,184.2 1130,186.4 1132,185.7 1134,187.1 1136,184.9 1138,183.4 1140,183.0 1142,182.8 1144,184.3 1146,184.6 1148,186.3 1150,187.0 1152,185.7 1154,184.3 1156,186.3 1158,187.9 1160,188.4 1162,186.9 1164,184.4 1166,185.8 1168,185.3 1170,185.7 1172,183.9 1174,183.4 1176,183.3 1178,182.1 1180,182.0 1182,181.1 1184,182.8 1186,182.8 1188,184.2 1190,184.3 1192,180.4 1194,182.4 1196,184.1 1198,185.4 1200,183.2 1202,181.4 1204,179.7 1206,178.7 1208,178.6 1210,179.2 1212,181.7 1214,179.6 1216,181.2 1218,180.8 1220,181.9 1222,180.9 1224,179.4 1226,180.3 1228,181.1 1230,180.5 1232,179.4 1234,180.5 1236,181.3 1238,181.0 1240,179.9 1242,179.4 1244,179.5 1246,180.1 1248,179.2 1250,180.3 1252,181.2 1254,180.9 1256,182.3 1258,183.3 1260,184.9" fill="none" stroke="#ff1a10" stroke-width="1.05" stroke-opacity="0.75"/>
<polyline points="768,197.4 770,197.1 772,197.0 774,197.9 776,198.3 778,200.6 780,198.6 782,199.0 784,200.3 786,203.1 788,201.7 790,202.3 792,202.8 794,199.5 796,200.0 798,201.2 800,200.2 802,200.1 804,201.1 806,200.9 808,199.2 810,198.9 812,199.3 814,199.3 816,198.9 818,199.0 820,199.0 822,200.8 824,202.0 826,197.9 828,198.1 830,197.9 832,197.5 834,197.7 836,197.5 838,199.8 840,198.1 842,198.1 844,200.6 846,197.8 848,197.4 850,198.0 852,198.1 854,200.3 856,200.4 858,198.0 860,197.8 862,198.7 864,195.9 866,199.7 868,198.5 870,197.9 872,197.7 874,197.6 876,197.1 878,197.6 880,196.4 882,195.0 884,197.6 886,195.8 888,193.8 890,193.7 892,194.8 894,195.7 896,195.7 898,197.8 900,195.9 902,199.7 904,197.1 906,199.5 908,200.0 910,200.0 912,198.9 914,197.7 916,198.1 918,198.0 920,198.9 922,200.0 924,199.0 926,198.6 928,201.3 930,201.3 932,202.1 934,204.8 936,202.9 938,207.0 940,210.7 942,210.2 944,199.1 946,184.3 948,172.7 950,165.6 952,171.8 954,175.8 956,169.6 958,169.5 960,184.2 962,198.4 964,207.0 966,187.1 968,167.6 970,170.6 972,181.5 974,195.0 976,208.2 978,213.5 980,213.5 982,213.5 984,210.8 986,204.5 988,201.5 990,200.7 992,199.6 994,203.7 996,201.1 998,199.1 1000,197.6 1002,198.1 1004,199.5 1006,196.7 1008,196.1 1010,197.2 1012,193.4 1014,193.4 1016,194.9 1018,195.9 1020,196.7 1022,195.1 1024,194.6 1026,195.0 1028,193.8 1030,194.5 1032,193.3 1034,194.9 1036,191.5 1038,189.7 1040,190.4 1042,191.2 1044,191.1 1046,192.2 1048,191.3 1050,190.0 1052,191.4 1054,192.1 1056,194.6 1058,194.6 1060,193.8 1062,193.3 1064,192.2 1066,192.1 1068,190.9 1070,192.0 1072,194.5 1074,196.5 1076,197.9 1078,197.2 1080,197.2 1082,196.9 1084,197.4 1086,200.0 1088,198.3 1090,197.7 1092,197.0 1094,195.5 1096,198.7 1098,198.1 1100,197.8 1102,199.4 1104,198.8 1106,198.3 1108,198.4 1110,199.7 1112,197.6 1114,196.2 1116,196.3 1118,198.6 1120,198.2 1122,198.3 1124,198.1 1126,198.7 1128,201.1 1130,200.6 1132,201.0 1134,199.6 1136,199.9 1138,198.3 1140,198.5 1142,199.9 1144,200.1 1146,199.7 1148,197.3 1150,197.4 1152,197.2 1154,197.2 1156,197.0 1158,197.0 1160,197.9 1162,196.1 1164,197.7 1166,197.4 1168,195.7 1170,195.3 1172,195.7 1174,194.8 1176,195.0 1178,195.8 1180,195.2 1182,196.2 1184,194.0 1186,195.7 1188,195.4 1190,193.7 1192,194.3 1194,193.3 1196,193.9 1198,194.6 1200,194.1 1202,193.5 1204,193.5 1206,192.1 1208,190.0 1210,194.0 1212,196.3 1214,193.2 1216,193.0 1218,194.4 1220,192.5 1222,192.1 1224,193.6 1226,193.3 1228,194.5 1230,193.8 1232,192.4 1234,193.6 1236,195.5 1238,196.0 1240,194.6 1242,195.8 1244,196.8 1246,195.0 1248,195.0 1250,195.6 1252,197.1 1254,197.0 1256,196.4 1258,196.4 1260,195.8" fill="none" stroke="#ff1a10" stroke-width="1.05" stroke-opacity="0.75"/>
<polyline points="768,192.8 770,193.8 772,195.1 774,195.4 776,193.2 778,194.4 780,193.0 782,194.6 784,195.0 786,195.2 788,192.9 790,194.0 792,192.7 794,191.1 796,189.8 798,190.3 800,190.6 802,192.1 804,194.7 806,194.3 808,195.0 810,193.8 812,191.4 814,189.7 816,189.9 818,191.0 820,189.7 822,190.9 824,189.8 826,191.0 828,189.7 830,190.9 832,188.7 834,189.0 836,190.1 838,191.5 840,189.1 842,189.3 844,189.0 846,190.3 848,189.6 850,188.8 852,189.9 854,190.3 856,190.0 858,190.8 860,188.6 862,188.9 864,191.3 866,188.4 868,189.6 870,188.5 872,188.9 874,189.0 876,188.0 878,190.5 880,189.5 882,189.2 884,187.8 886,189.7 888,189.5 890,189.6 892,190.1 894,189.3 896,188.6 898,192.1 900,190.8 902,190.4 904,189.4 906,189.8 908,191.0 910,191.8 912,192.0 914,190.8 916,192.1 918,192.4 920,192.6 922,191.1 924,192.9 926,193.7 928,192.6 930,190.5 932,192.5 934,190.4 936,191.5 938,197.4 940,200.1 942,199.5 944,192.6 946,184.6 948,179.7 950,176.7 952,178.4 954,178.8 956,178.3 958,178.1 960,184.4 962,190.5 964,195.2 966,190.3 968,171.6 970,174.2 972,179.2 974,185.8 976,192.6 978,198.2 980,203.8 982,202.9 984,198.3 986,196.4 988,192.9 990,193.0 992,192.4 994,192.2 996,193.1 998,193.2 1000,193.4 1002,192.6 1004,191.4 1006,188.2 1008,190.7 1010,190.4 1012,190.0 1014,188.8 1016,188.2 1018,187.8 1020,186.8 1022,187.2 1024,187.5 1026,187.5 1028,188.9 1030,186.9 1032,188.9 1034,190.0 1036,188.0 1038,188.6 1040,187.1 1042,186.3 1044,186.5 1046,186.4 1048,186.6 1050,186.0 1052,185.5 1054,185.9 1056,185.6 1058,186.0 1060,187.4 1062,187.7 1064,188.2 1066,187.9 1068,187.2 1070,188.8 1072,187.7 1074,189.9 1076,190.8 1078,190.8 1080,189.5 1082,189.0 1084,191.2 1086,190.4 1088,190.6 1090,191.6 1092,193.2 1094,192.2 1096,192.6 1098,191.7 1100,191.6 1102,190.9 1104,192.2 1106,192.8 1108,192.9 1110,193.5 1112,189.5 1114,191.5 1116,189.4 1118,188.8 1120,188.6 1122,188.1 1124,189.5 1126,188.7 1128,187.1 1130,190.9 1132,190.7 1134,190.3 1136,187.6 1138,187.7 1140,188.7 1142,187.7 1144,185.4 1146,187.5 1148,186.6 1150,186.7 1152,186.0 1154,184.2 1156,185.1 1158,186.4 1160,189.0 1162,186.2 1164,188.4 1166,189.4 1168,188.1 1170,186.2 1172,185.2 1174,185.4 1176,183.9 1178,185.3 1180,185.1 1182,185.4 1184,185.5 1186,188.2 1188,188.1 1190,188.5 1192,188.9 1194,187.5 1196,187.4 1198,184.9 1200,185.6 1202,186.2 1204,189.0 1206,186.7 1208,186.8 1210,187.0 1212,187.6 1214,189.1 1216,189.0 1218,190.7 1220,188.9 1222,185.7 1224,185.5 1226,186.1 1228,188.3 1230,189.3 1232,189.2 1234,189.4 1236,192.3 1238,190.4 1240,190.9 1242,192.3 1244,191.2 1246,191.5 1248,191.7 1250,189.0 1252,188.1 1254,189.7 1256,192.8 1258,191.5 1260,190.8" fill="none" stroke="#ff1a10" stroke-width="1.05" stroke-opacity="0.75"/>
<polyline points="768,203.3 770,202.9 772,204.4 774,203.5 776,202.0 778,201.4 780,204.1 782,204.4 784,202.6 786,201.9 788,201.4 790,200.5 792,199.1 794,197.0 796,198.0 798,199.8 800,201.1 802,198.7 804,199.3 806,200.9 808,199.9 810,197.6 812,199.6 814,198.9 816,199.3 818,199.8 820,200.1 822,199.8 824,200.7 826,201.4 828,200.0 830,200.0 832,198.2 834,197.7 836,199.7 838,198.6 840,198.5 842,198.7 844,199.0 846,198.0 848,197.3 850,198.0 852,198.4 854,200.8 856,200.4 858,199.0 860,202.2 862,199.5 864,198.4 866,202.5 868,202.6 870,202.0 872,200.5 874,200.9 876,198.6 878,199.2 880,199.7 882,199.3 884,198.9 886,197.4 888,200.3 890,201.9 892,203.6 894,200.7 896,201.5 898,202.7 900,199.3 902,201.3 904,199.9 906,200.6 908,198.1 910,199.4 912,199.8 914,201.0 916,201.4 918,202.7 920,203.8 922,203.9 924,204.0 926,205.2 928,206.0 930,207.1 932,205.7 934,205.2 936,207.0 938,212.8 940,213.5 942,213.5 944,205.7 946,186.4 948,172.5 950,166.8 952,172.4 954,177.0 956,169.2 958,172.0 960,187.3 962,204.9 964,212.8 966,191.4 968,167.0 970,171.6 972,182.3 974,197.0 976,209.3 978,213.5 980,213.5 982,213.5 984,213.5 986,210.2 988,205.2 990,201.4 992,199.7 994,198.5 996,200.6 998,199.8 1000,200.7 1002,201.0 1004,199.6 1006,196.4 1008,195.5 1010,196.2 1012,196.6 1014,197.3 1016,197.0 1018,197.3 1020,196.5 1022,195.7 1024,196.2 1026,196.2 1028,196.3 1030,198.6 1032,198.7 1034,196.1 1036,198.0 1038,199.2 1040,195.8 1042,195.5 1044,194.7 1046,197.3 1048,197.2 1050,196.0 1052,198.6 1054,197.8 1056,199.0 1058,200.6 1060,197.8 1062,199.8 1064,200.6 1066,200.2 1068,200.3 1070,200.9 1072,200.0 1074,200.6 1076,201.2 1078,200.9 1080,201.1 1082,200.3 1084,200.0 1086,200.4 1088,202.1 1090,204.9 1092,205.8 1094,206.9 1096,206.3 1098,202.9 1100,202.8 1102,200.7 1104,201.3 1106,201.9 1108,201.5 1110,201.0 1112,200.8 1114,200.2 1116,201.7 1118,202.0 1120,200.1 1122,200.2 1124,200.5 1126,199.4 1128,200.3 1130,199.9 1132,200.8 1134,198.8 1136,200.4 1138,198.5 1140,196.3 1142,197.7 1144,197.4 1146,198.5 1148,198.0 1150,198.2 1152,198.4 1154,197.4 1156,197.8 1158,198.5 1160,198.0 1162,197.8 1164,196.9 1166,196.3 1168,196.4 1170,196.7 1172,197.4 1174,196.5 1176,199.8 1178,198.7 1180,198.4 1182,196.5 1184,196.9 1186,196.3 1188,197.1 1190,198.2 1192,197.9 1194,198.1 1196,195.7 1198,197.1 1200,197.5 1202,199.2 1204,199.3 1206,201.2 1208,200.4 1210,202.1 1212,201.5 1214,199.6 1216,202.8 1218,203.0 1220,201.8 1222,201.4 1224,199.1 1226,198.3 1228,199.6 1230,201.3 1232,202.4 1234,202.3 1236,202.4 1238,203.1 1240,202.0 1242,201.8 1244,200.3 1246,202.2 1248,201.2 1250,200.8 1252,203.0 1254,201.7 1256,200.6 1258,199.6 1260,200.0" fill="none" stroke="#ff1a10" stroke-width="1.05" stroke-opacity="0.75"/>
<polyline points="768,188.9 770,188.7 772,189.7 774,191.3 776,190.8 778,189.8 780,189.9 782,187.9 784,187.7 786,187.9 788,190.6 790,188.6 792,186.8 794,187.8 796,186.7 798,187.8 800,187.2 802,188.7 804,188.0 806,187.9 808,188.2 810,189.4 812,189.4 814,190.8 816,189.1 818,190.8 820,190.2 822,187.5 824,189.3 826,190.1 828,189.4 830,188.3 832,189.2 834,188.0 836,188.8 838,190.0 840,188.4 842,188.1 844,187.0 846,188.7 848,190.4 850,191.3 852,192.3 854,188.6 856,188.4 858,189.4 860,187.0 862,189.8 864,189.0 866,188.9 868,191.1 870,188.9 872,191.6 874,190.7 876,192.2 878,191.3 880,190.5 882,192.3 884,191.5 886,190.9 888,191.5 890,191.4 892,190.8 894,192.3 896,193.7 898,193.0 900,190.9 902,189.9 904,189.1 906,189.5 908,190.0 910,191.3 912,191.0 914,192.4 916,191.8 918,193.3 920,194.0 922,194.1 924,194.7 926,192.3 928,192.8 930,194.5 932,194.0 934,193.1 936,198.7 938,203.9 940,202.2 942,194.0 944,182.8 946,172.2 948,167.1 950,170.7 952,172.1 954,166.3 956,167.1 958,178.4 960,189.1 962,195.6 964,179.9 966,164.4 968,168.0 970,175.4 972,187.4 974,197.3 976,205.6 978,207.4 980,206.5 982,205.8 984,199.8 986,196.1 988,190.1 990,189.7 992,190.7 994,191.2 996,191.4 998,189.0 1000,188.8 1002,189.5 1004,190.2 1006,185.5 1008,184.8 1010,184.4 1012,185.9 1014,185.2 1016,185.8 1018,185.0 1020,185.2 1022,186.5 1024,188.9 1026,187.7 1028,187.1 1030,187.4 1032,188.0 1034,187.7 1036,186.2 1038,188.0 1040,187.3 1042,187.9 1044,187.4 1046,190.9 1048,191.0 1050,189.2 1052,189.0 1054,191.3 1056,189.1 1058,190.8 1060,189.8 1062,190.4 1064,190.5 1066,190.9 1068,186.8 1070,186.1 1072,187.2 1074,189.1 1076,189.1 1078,189.8 1080,190.6 1082,189.8 1084,190.9 1086,190.5 1088,188.9 1090,190.0 1092,191.0 1094,190.4 1096,191.1 1098,189.3 1100,188.8 1102,189.9 1104,189.2 1106,190.4 1108,189.7 1110,188.5 1112,190.6 1114,189.4 1116,188.3 1118,188.2 1120,187.9 1122,190.0 1124,187.6 1126,186.2 1128,186.2 1130,185.1 1132,183.5 1134,185.5 1136,184.0 1138,185.5 1140,186.2 1142,185.4 1144,183.7 1146,184.1 1148,186.6 1150,186.4 1152,184.3 1154,184.6 1156,186.0 1158,183.8 1160,185.4 1162,186.2 1164,186.4 1166,188.1 1168,186.5 1170,184.5 1172,185.3 1174,185.8 1176,186.3 1178,184.8 1180,185.6 1182,184.8 1184,188.0 1186,188.6 1188,189.0 1190,188.9 1192,187.8 1194,188.0 1196,190.8 1198,189.3 1200,188.3 1202,191.1 1204,189.5 1206,188.7 1208,189.3 1210,191.3 1212,191.0 1214,190.4 1216,189.0 1218,191.9 1220,192.4 1222,191.4 1224,192.5 1226,191.7 1228,190.9 1230,191.3 1232,191.1 1234,193.2 1236,192.9 1238,192.5 1240,192.7 1242,192.4 1244,194.4 1246,191.6 1248,189.8 1250,186.8 1252,186.9 1254,186.8 1256,186.6 1258,187.2 1260,187.5" fill="none" stroke="#ff1a10" stroke-width="1.05" stroke-opacity="0.75"/>
<polyline points="768,187.2 770,186.9 772,187.4 774,188.8 776,190.1 778,190.4 780,192.4 782,191.6 784,189.2 786,188.6 788,188.3 790,187.9 792,187.9 794,188.7 796,189.6 798,190.5 800,190.8 802,190.0 804,190.0 806,189.4 808,189.1 810,189.2 812,190.5 814,189.4 816,188.4 818,187.5 820,189.4 822,189.4 824,186.9 826,190.2 828,188.6 830,189.2 832,189.7 834,192.5 836,192.1 838,191.3 840,191.3 842,193.4 844,194.3 846,195.6 848,193.1 850,190.8 852,192.1 854,193.9 856,192.9 858,194.4 860,194.4 862,194.7 864,192.1 866,192.7 868,194.4 870,190.8 872,191.2 874,190.3 876,190.6 878,189.5 880,189.8 882,192.1 884,192.8 886,191.3 888,192.2 890,194.0 892,194.9 894,191.9 896,190.9 898,190.6 900,191.8 902,190.3 904,190.7 906,191.7 908,190.3 910,191.5 912,192.7 914,191.2 916,190.0 918,190.3 920,190.8 922,192.7 924,192.5 926,193.2 928,195.5 930,194.6 932,195.7 934,195.3 936,197.8 938,203.2 940,209.6 942,211.3 944,197.6 946,178.6 948,165.1 950,160.0 952,163.0 954,165.8 956,160.6 958,158.6 960,170.3 962,189.1 964,197.6 966,180.0 968,155.1 970,159.7 972,170.8 974,184.9 976,197.8 978,207.7 980,209.1 982,209.8 984,204.4 986,199.3 988,195.5 990,193.6 992,191.1 994,190.4 996,190.8 998,189.4 1000,191.3 1002,190.7 1004,191.8 1006,188.6 1008,187.0 1010,187.5 1012,187.7 1014,186.6 1016,186.2 1018,186.5 1020,187.0 1022,187.5 1024,189.1 1026,188.7 1028,189.6 1030,189.3 1032,190.9 1034,190.2 1036,188.4 1038,192.8 1040,193.5 1042,191.9 1044,190.9 1046,191.7 1048,190.3 1050,190.3 1052,191.7 1054,191.2 1056,193.5 1058,194.4 1060,194.7 1062,194.7 1064,191.7 1066,191.0 1068,190.1 1070,190.4 1072,191.2 1074,190.1 1076,190.2 1078,191.4 1080,190.8 1082,189.4 1084,190.1 1086,188.9 1088,189.4 1090,188.9 1092,187.7 1094,188.5 1096,189.9 1098,188.6 1100,187.8 1102,188.9 1104,188.2 1106,189.6 1108,188.4 1110,189.6 1112,187.8 1114,187.4 1116,186.1 1118,185.7 1120,188.2 1122,187.2 1124,187.0 1126,185.4 1128,186.9 1130,187.3 1132,184.3 1134,182.8 1136,183.3 1138,184.4 1140,186.7 1142,186.3 1144,186.9 1146,186.1 1148,184.8 1150,186.3 1152,186.3 1154,187.5 1156,187.8 1158,189.6 1160,189.4 1162,187.7 1164,188.5 1166,189.5 1168,187.9 1170,187.4 1172,187.1 1174,188.9 1176,189.3 1178,189.5 1180,189.5 1182,187.6 1184,189.8 1186,189.3 1188,189.9 1190,188.0 1192,187.6 1194,187.7 1196,188.7 1198,190.7 1200,191.0 1202,190.7 1204,189.7 1206,190.0 1208,190.6 1210,190.6 1212,191.5 1214,191.0 1216,191.6 1218,189.9 1220,189.3 1222,189.2 1224,189.7 1226,190.1 1228,191.2 1230,192.3 1232,192.0 1234,191.0 1236,191.7 1238,190.2 1240,190.1 1242,188.9 1244,187.8 1246,189.0 1248,190.2 1250,187.8 1252,188.1 1254,186.7 1256,188.1 1258,188.2 1260,187.1" fill="none" stroke="#ff1a10" stroke-width="1.05" stroke-opacity="0.75"/>
<polyline points="768,198.8 770,198.3 772,197.7 774,196.4 776,197.4 778,199.1 780,200.2 782,199.4 784,200.5 786,199.8 788,198.6 790,200.0 792,197.5 794,197.0 796,197.8 798,200.1 800,199.7 802,199.5 804,201.0 806,201.3 808,201.1 810,198.7 812,201.4 814,200.1 816,201.6 818,200.3 820,202.0 822,200.0 824,202.5 826,202.0 828,203.5 830,205.1 832,205.1 834,204.3 836,205.4 838,205.3 840,203.8 842,203.9 844,202.6 846,202.7 848,201.1 850,202.4 852,201.8 854,200.7 856,201.5 858,202.1 860,202.7 862,201.3 864,202.1 866,202.6 868,202.5 870,201.4 872,199.5 874,201.7 876,202.4 878,203.7 880,203.6 882,202.4 884,202.5 886,203.8 888,203.7 890,202.4 892,202.2 894,201.5 896,200.7 898,201.5 900,199.7 902,198.1 904,196.3 906,195.0 908,198.2 910,200.4 912,200.5 914,200.7 916,200.4 918,201.0 920,203.8 922,203.5 924,204.9 926,204.8 928,205.0 930,204.0 932,203.8 934,202.6 936,205.3 938,207.5 940,208.3 942,201.3 944,191.4 946,184.6 948,180.5 950,185.6 952,188.7 954,184.2 956,183.6 958,190.9 960,200.3 962,203.7 964,193.5 966,180.4 968,183.8 970,191.2 972,197.4 974,207.6 976,211.6 978,213.2 980,209.3 982,205.9 984,203.3 986,204.6 988,203.0 990,203.0 992,202.4 994,201.9 996,199.4 998,198.1 1000,200.4 1002,199.9 1004,201.4 1006,198.2 1008,197.6 1010,197.0 1012,198.5 1014,198.6 1016,199.3 1018,201.7 1020,197.7 1022,199.5 1024,198.5 1026,197.0 1028,198.3 1030,199.9 1032,200.7 1034,200.4 1036,199.7 1038,200.8 1040,200.6 1042,199.1 1044,199.9 1046,201.6 1048,201.9 1050,201.5 1052,201.0 1054,201.4 1056,200.2 1058,198.7 1060,197.5 1062,194.5 1064,197.9 1066,198.0 1068,197.1 1070,198.4 1072,198.4 1074,197.5 1076,196.1 1078,197.2 1080,196.3 1082,197.0 1084,198.6 1086,197.0 1088,197.3 1090,197.0 1092,197.7 1094,196.8 1096,197.6 1098,197.3 1100,196.9 1102,197.1 1104,195.2 1106,193.7 1108,195.1 1110,194.3 1112,196.7 1114,196.3 1116,195.8 1118,192.9 1120,192.1 1122,193.6 1124,195.2 1126,196.9 1128,194.5 1130,196.9 1132,193.7 1134,195.8 1136,195.1 1138,195.7 1140,194.1 1142,194.5 1144,195.8 1146,194.2 1148,196.4 1150,195.9 1152,197.0 1154,194.3 1156,195.1 1158,196.9 1160,197.3 1162,196.0 1164,194.2 1166,197.7 1168,199.0 1170,198.9 1172,198.0 1174,196.8 1176,198.4 1178,197.9 1180,201.6 1182,202.8 1184,204.3 1186,203.3 1188,200.3 1190,200.7 1192,201.7 1194,200.6 1196,201.7 1198,201.8 1200,201.7 1202,201.7 1204,202.7 1206,200.3 1208,197.5 1210,199.0 1212,199.2 1214,196.7 1216,197.5 1218,198.9 1220,199.7 1222,199.2 1224,199.5 1226,199.4 1228,199.1 1230,196.2 1232,195.8 1234,197.5 1236,197.1 1238,197.7 1240,198.1 1242,196.9 1244,196.1 1246,195.2 1248,195.0 1250,195.2 1252,195.3 1254,195.7 1256,195.5 1258,196.0 1260,196.1" fill="none" stroke="#ff1a10" stroke-width="1.05" stroke-opacity="0.75"/>
<polyline points="768,190.9 770,191.8 772,194.0 774,191.2 776,193.2 778,195.1 780,192.9 782,195.0 784,195.5 786,194.8 788,193.1 790,193.5 792,191.3 794,191.2 796,192.5 798,193.1 800,192.0 802,194.8 804,192.8 806,191.9 808,193.9 810,194.2 812,193.1 814,190.7 816,192.0 818,192.6 820,190.6 822,191.6 824,192.3 826,192.1 828,191.5 830,191.3 832,191.4 834,190.2 836,192.3 838,191.0 840,192.5 842,193.9 844,193.4 846,195.1 848,193.1 850,191.3 852,191.0 854,191.4 856,192.8 858,191.6 860,193.5 862,191.9 864,189.8 866,190.5 868,192.0 870,190.2 872,188.2 874,188.5 876,190.0 878,189.8 880,189.5 882,190.1 884,191.4 886,194.1 888,191.3 890,190.8 892,191.3 894,190.0 896,190.4 898,190.2 900,189.2 902,191.0 904,192.7 906,192.5 908,191.1 910,190.1 912,189.5 914,189.6 916,188.9 918,191.6 920,192.3 922,193.1 924,192.7 926,192.7 928,193.7 930,193.7 932,193.1 934,194.6 936,194.3 938,195.9 940,198.7 942,199.2 944,193.1 946,184.0 948,179.1 950,178.4 952,179.0 954,182.6 956,176.6 958,180.2 960,187.2 962,194.9 964,197.2 966,185.4 968,176.1 970,177.8 972,183.6 974,191.1 976,195.8 978,199.6 980,202.2 982,200.1 984,197.9 986,196.0 988,193.3 990,194.4 992,193.8 994,192.9 996,192.5 998,190.9 1000,190.6 1002,189.7 1004,191.5 1006,189.5 1008,190.4 1010,189.5 1012,191.8 1014,190.8 1016,189.8 1018,190.7 1020,191.7 1022,191.4 1024,192.6 1026,192.8 1028,192.3 1030,190.2 1032,188.7 1034,189.2 1036,191.3 1038,189.7 1040,191.5 1042,190.9 1044,190.0 1046,189.6 1048,190.1 1050,189.3 1052,188.7 1054,188.8 1056,187.6 1058,189.7 1060,189.5 1062,191.8 1064,189.1 1066,187.9 1068,186.7 1070,186.6 1072,186.5 1074,186.1 1076,186.3 1078,186.0 1080,189.1 1082,188.9 1084,189.6 1086,188.3 1088,185.8 1090,185.3 1092,186.1 1094,185.3 1096,187.2 1098,185.4 1100,183.7 1102,184.3 1104,185.6 1106,186.7 1108,186.8 1110,188.0 1112,186.7 1114,189.0 1116,191.2 1118,190.4 1120,186.8 1122,185.4 1124,185.5 1126,188.7 1128,189.4 1130,190.0 1132,188.2 1134,190.2 1136,191.7 1138,192.6 1140,192.7 1142,190.4 1144,193.5 1146,193.1 1148,191.2 1150,190.4 1152,190.6 1154,190.8 1156,192.7 1158,191.4 1160,192.4 1162,190.3 1164,192.1 1166,192.2 1168,191.5 1170,192.2 1172,191.9 1174,190.9 1176,190.4 1178,191.2 1180,191.5 1182,192.1 1184,194.6 1186,193.3 1188,192.8 1190,190.8 1192,191.7 1194,192.3 1196,188.4 1198,190.1 1200,189.3 1202,190.1 1204,189.0 1206,188.8 1208,189.8 1210,189.9 1212,190.0 1214,189.2 1216,188.5 1218,188.6 1220,189.8 1222,189.8 1224,190.0 1226,188.3 1228,190.0 1230,189.1 1232,188.5 1234,189.0 1236,189.4 1238,189.1 1240,188.9 1242,188.2 1244,188.0 1246,188.9 1248,188.5 1250,188.0 1252,189.0 1254,186.8 1256,189.0 1258,187.4 1260,188.1" fill="none" stroke="#ff1a10" stroke-width="1.05" stroke-opacity="0.75"/>
<polyline points="768,197.0 770,197.9 772,198.0 774,199.6 776,201.3 778,200.1 780,198.8 782,199.8 784,201.3 786,201.9 788,199.8 790,201.1 792,197.0 794,198.2 796,198.1 798,195.8 800,199.3 802,199.2 804,198.5 806,198.9 808,198.1 810,199.2 812,195.2 814,194.7 816,196.0 818,196.7 820,197.2 822,197.9 824,197.3 826,198.4 828,199.6 830,199.6 832,198.0 834,198.0 836,197.1 838,197.0 840,197.1 842,197.4 844,198.4 846,198.4 848,196.6 850,195.1 852,196.0 854,197.4 856,196.0 858,193.1 860,192.8 862,191.3 864,194.8 866,195.1 868,194.8 870,194.9 872,195.8 874,196.6 876,194.4 878,197.5 880,197.3 882,195.0 884,195.0 886,195.2 888,198.3 890,195.5 892,195.8 894,196.8 896,196.1 898,194.6 900,194.8 902,195.1 904,195.7 906,197.4 908,197.1 910,196.7 912,195.5 914,196.5 916,196.8 918,198.6 920,197.7 922,196.8 924,195.3 926,197.2 928,197.4 930,197.4 932,198.1 934,198.6 936,199.5 938,201.7 940,204.6 942,208.1 944,203.6 946,193.9 948,185.6 950,181.7 952,182.8 954,184.3 956,185.2 958,182.3 960,187.2 962,193.1 964,201.3 966,199.7 968,182.9 970,182.7 972,187.4 974,191.3 976,198.9 978,205.2 980,206.9 982,206.7 984,206.8 986,205.9 988,201.2 990,199.9 992,198.4 994,200.1 996,199.1 998,199.1 1000,196.7 1002,195.5 1004,194.9 1006,197.2 1008,196.0 1010,198.2 1012,196.7 1014,196.8 1016,197.8 1018,200.3 1020,198.4 1022,201.7 1024,200.5 1026,198.7 1028,199.7 1030,199.3 1032,199.8 1034,199.9 1036,197.3 1038,196.5 1040,197.5 1042,192.3 1044,193.0 1046,194.4 1048,197.6 1050,195.5 1052,196.5 1054,196.5 1056,194.9 1058,195.3 1060,193.6 1062,194.1 1064,196.0 1066,193.9 1068,193.1 1070,193.9 1072,192.8 1074,193.6 1076,192.2 1078,192.9 1080,190.6 1082,192.4 1084,190.1 1086,191.5 1088,195.2 1090,193.6 1092,191.8 1094,192.7 1096,194.4 1098,194.5 1100,195.1 1102,195.6 1104,194.2 1106,191.7 1108,191.6 1110,191.0 1112,192.9 1114,192.4 1116,193.8 1118,194.3 1120,194.8 1122,195.5 1124,196.6 1126,196.4 1128,197.6 1130,198.5 1132,199.0 1134,197.4 1136,196.0 1138,198.2 1140,196.3 1142,196.1 1144,196.4 1146,193.9 1148,194.9 1150,194.4 1152,195.0 1154,196.4 1156,197.3 1158,198.4 1160,199.0 1162,199.9 1164,198.9 1166,198.8 1168,199.9 1170,199.7 1172,199.8 1174,196.7 1176,197.5 1178,196.3 1180,196.1 1182,198.2 1184,200.0 1186,197.6 1188,196.3 1190,195.4 1192,195.6 1194,195.9 1196,194.9 1198,195.9 1200,192.3 1202,191.5 1204,192.9 1206,193.4 1208,193.1 1210,193.2 1212,195.6 1214,197.1 1216,193.5 1218,193.5 1220,193.2 1222,192.8 1224,197.0 1226,197.5 1228,196.6 1230,195.1 1232,193.1 1234,190.7 1236,193.9 1238,195.0 1240,196.0 1242,194.4 1244,193.7 1246,193.7 1248,192.3 1250,193.3 1252,193.7 1254,194.1 1256,192.4 1258,193.2 1260,192.2" fill="none" stroke="#ff1a10" stroke-width="1.05" stroke-opacity="0.75"/>
<polyline points="768,196.7 770,195.5 772,193.6 774,194.9 776,195.3 778,197.1 780,195.2 782,194.5 784,195.5 786,195.2 788,193.7 790,191.7 792,193.8 794,193.4 796,193.2 798,192.3 800,194.2 802,194.9 804,194.3 806,194.8 808,194.6 810,194.1 812,192.5 814,193.0 816,192.6 818,193.6 820,192.0 822,191.9 824,191.4 826,193.7 828,193.4 830,194.0 832,192.4 834,196.3 836,195.2 838,191.8 840,190.9 842,192.2 844,192.8 846,193.5 848,191.6 850,190.5 852,192.5 854,192.5 856,191.4 858,193.1 860,193.0 862,192.8 864,191.9 866,195.5 868,192.5 870,192.1 872,190.6 874,191.7 876,192.5 878,194.2 880,195.0 882,196.5 884,195.4 886,192.5 888,193.9 890,193.5 892,194.8 894,194.6 896,194.7 898,193.6 900,195.8 902,193.2 904,192.7 906,192.6 908,189.8 910,191.8 912,192.8 914,193.5 916,194.9 918,193.8 920,193.1 922,195.6 924,197.7 926,198.7 928,201.2 930,199.6 932,199.6 934,199.3 936,200.9 938,204.6 940,207.4 942,200.7 944,190.7 946,183.0 948,177.7 950,177.2 952,180.8 954,178.6 956,176.8 958,182.0 960,191.7 962,199.0 964,192.6 966,173.4 968,175.9 970,182.2 972,191.3 974,197.9 976,205.5 978,205.8 980,201.4 982,201.6 984,198.5 986,197.6 988,197.4 990,197.5 992,197.1 994,197.7 996,197.1 998,194.8 1000,192.1 1002,191.3 1004,192.0 1006,193.8 1008,194.5 1010,195.5 1012,193.0 1014,194.7 1016,195.3 1018,194.5 1020,194.6 1022,192.2 1024,193.6 1026,193.9 1028,194.2 1030,191.3 1032,191.3 1034,192.8 1036,192.1 1038,192.7 1040,191.1 1042,191.1 1044,189.8 1046,191.4 1048,193.9 1050,193.6 1052,192.5 1054,190.1 1056,190.2 1058,193.0 1060,191.6 1062,190.6 1064,191.3 1066,190.1 1068,193.1 1070,192.7 1072,191.9 1074,191.6 1076,193.1 1078,190.0 1080,190.2 1082,190.1 1084,191.5 1086,191.9 1088,191.6 1090,191.7 1092,190.8 1094,189.7 1096,190.0 1098,190.9 1100,190.7 1102,192.3 1104,191.2 1106,193.6 1108,192.5 1110,192.6 1112,193.4 1114,193.3 1116,195.6 1118,194.9 1120,194.3 1122,194.3 1124,194.8 1126,194.5 1128,194.7 1130,191.8 1132,191.9 1134,194.4 1136,195.3 1138,195.6 1140,196.5 1142,195.9 1144,195.3 1146,196.1 1148,194.0 1150,193.3 1152,195.1 1154,193.8 1156,195.9 1158,195.3 1160,194.8 1162,195.9 1164,195.1 1166,194.2 1168,194.6 1170,195.6 1172,196.1 1174,193.0 1176,191.4 1178,191.6 1180,194.9 1182,194.0 1184,193.0 1186,191.7 1188,193.5 1190,192.1 1192,191.2 1194,191.8 1196,193.0 1198,192.4 1200,193.4 1202,193.1 1204,192.2 1206,191.6 1208,190.9 1210,190.0 1212,190.7 1214,193.2 1216,193.7 1218,192.9 1220,192.7 1222,190.3 1224,190.8 1226,191.6 1228,193.0 1230,193.5 1232,191.4 1234,193.3 1236,192.2 1238,191.2 1240,192.0 1242,190.4 1244,190.3 1246,192.8 1248,194.3 1250,193.0 1252,194.4 1254,194.6 1256,193.7 1258,192.2 1260,192.9" fill="none" stroke="#ff1a10" stroke-width="1.05" stroke-opacity="0.75"/>
<polyline points="768,192.7 770,190.0 772,188.3 774,188.1 776,188.1 778,187.9 780,187.4 782,187.8 784,190.7 786,190.8 788,190.1 790,188.4 792,190.1 794,190.1 796,190.3 798,189.0 800,188.2 802,189.0 804,189.4 806,188.8 808,187.9 810,187.5 812,187.8 814,187.1 816,186.5 818,189.6 820,191.4 822,189.7 824,188.9 826,188.7 828,189.4 830,188.3 832,188.5 834,189.6 836,191.8 838,192.6 840,193.3 842,194.2 844,192.3 846,190.7 848,191.1 850,190.3 852,188.8 854,188.6 856,189.0 858,190.6 860,189.4 862,191.4 864,192.7 866,191.0 868,190.3 870,189.8 872,189.0 874,187.1 876,188.4 878,189.2 880,188.1 882,188.1 884,190.3 886,190.9 888,192.4 890,192.6 892,193.5 894,193.8 896,192.9 898,192.3 900,192.0 902,189.7 904,189.8 906,189.0 908,190.5 910,189.4 912,188.4 914,189.1 916,191.0 918,192.1 920,191.6 922,190.9 924,190.7 926,194.5 928,194.7 930,194.7 932,194.7 934,193.5 936,194.9 938,199.7 940,202.7 942,197.6 944,188.2 946,179.5 948,171.2 950,171.9 952,174.7 954,175.1 956,170.9 958,174.0 960,184.7 962,192.6 964,192.6 966,172.8 968,169.4 970,175.6 972,184.6 974,192.7 976,199.8 978,201.0 980,201.1 982,199.1 984,194.3 986,192.4 988,192.9 990,194.5 992,193.6 994,193.0 996,190.7 998,193.3 1000,190.3 1002,191.7 1004,192.6 1006,191.6 1008,189.4 1010,188.4 1012,187.5 1014,186.2 1016,188.4 1018,188.5 1020,189.1 1022,187.6 1024,188.5 1026,188.5 1028,189.0 1030,187.8 1032,186.6 1034,186.8 1036,186.3 1038,186.1 1040,184.4 1042,184.9 1044,187.7 1046,188.4 1048,186.4 1050,187.0 1052,186.6 1054,185.1 1056,183.5 1058,186.2 1060,187.4 1062,186.8 1064,185.6 1066,188.2 1068,187.4 1070,187.9 1072,187.6 1074,190.0 1076,187.6 1078,187.1 1080,186.9 1082,188.0 1084,187.2 1086,187.5 1088,186.2 1090,187.3 1092,188.0 1094,186.8 1096,188.4 1098,189.7 1100,188.6 1102,190.3 1104,189.7 1106,189.6 1108,189.9 1110,189.4 1112,191.0 1114,191.8 1116,191.2 1118,190.2 1120,189.6 1122,189.6 1124,190.5 1126,191.2 1128,191.1 1130,192.9 1132,194.4 1134,192.3 1136,190.7 1138,191.5 1140,192.5 1142,191.1 1144,190.9 1146,190.5 1148,189.6 1150,185.8 1152,186.9 1154,188.4 1156,188.0 1158,189.8 1160,189.5 1162,190.0 1164,188.7 1166,187.2 1168,188.1 1170,188.8 1172,190.8 1174,189.1 1176,189.5 1178,187.4 1180,188.4 1182,189.3 1184,188.0 1186,189.2 1188,188.3 1190,187.5 1192,185.6 1194,186.5 1196,186.5 1198,186.3 1200,188.2 1202,187.6 1204,188.0 1206,186.6 1208,186.3 1210,186.3 1212,187.9 1214,186.8 1216,187.2 1218,185.6 1220,185.0 1222,183.9 1224,185.6 1226,187.3 1228,188.0 1230,188.7 1232,189.1 1234,189.0 1236,188.6 1238,191.0 1240,189.6 1242,190.7 1244,188.3 1246,188.3 1248,190.2 1250,189.6 1252,189.7 1254,188.9 1256,187.9 1258,189.1 1260,188.6" fill="none" stroke="#ff1a10" stroke-width="1.05" stroke-opacity="0.75"/>
<polyline points="768,194.9 770,196.4 772,195.9 774,195.0 776,193.5 778,194.7 780,194.6 782,193.9 784,194.0 786,193.4 788,192.9 790,192.2 792,193.2 794,191.8 796,192.4 798,192.4 800,193.0 802,193.3 804,194.5 806,192.6 808,192.0 810,193.5 812,195.3 814,195.5 816,192.9 818,191.4 820,191.2 822,192.4 824,194.5 826,195.6 828,194.5 830,192.9 832,194.1 834,193.6 836,194.7 838,193.8 840,195.2 842,196.4 844,197.3 846,197.1 848,195.2 850,196.1 852,194.8 854,196.4 856,193.6 858,194.4 860,193.3 862,194.9 864,196.0 866,197.2 868,196.4 870,196.7 872,196.2 874,196.9 876,197.5 878,196.7 880,195.8 882,195.2 884,196.1 886,196.1 888,196.2 890,196.8 892,197.0 894,197.2 896,196.9 898,196.7 900,196.6 902,196.0 904,194.9 906,192.9 908,192.6 910,192.2 912,192.5 914,193.1 916,192.6 918,193.7 920,195.1 922,193.1 924,194.0 926,194.4 928,193.9 930,195.5 932,198.1 934,198.7 936,197.6 938,202.3 940,205.8 942,206.2 944,198.0 946,183.8 948,174.8 950,171.1 952,173.6 954,177.0 956,171.9 958,172.6 960,182.7 962,194.2 964,199.4 966,184.0 968,170.0 970,172.9 972,182.0 974,192.8 976,201.7 978,207.8 980,207.9 982,209.1 984,205.3 986,199.7 988,198.4 990,196.2 992,194.9 994,196.7 996,198.2 998,195.4 1000,195.2 1002,194.2 1004,193.0 1006,192.5 1008,192.5 1010,193.6 1012,192.1 1014,192.3 1016,193.5 1018,192.8 1020,192.8 1022,190.4 1024,188.7 1026,189.8 1028,190.0 1030,191.8 1032,191.6 1034,190.6 1036,193.5 1038,193.5 1040,191.2 1042,190.8 1044,190.4 1046,188.5 1048,190.1 1050,191.7 1052,190.8 1054,191.3 1056,191.1 1058,190.8 1060,193.0 1062,190.7 1064,190.5 1066,190.4 1068,190.1 1070,191.0 1072,192.8 1074,193.2 1076,195.0 1078,195.6 1080,196.0 1082,194.3 1084,193.2 1086,195.0 1088,196.9 1090,195.1 1092,197.5 1094,197.3 1096,195.7 1098,194.9 1100,193.8 1102,193.1 1104,194.4 1106,195.0 1108,194.3 1110,195.8 1112,197.3 1114,196.4 1116,195.0 1118,194.2 1120,193.8 1122,195.8 1124,196.2 1126,196.5 1128,195.5 1130,197.4 1132,194.6 1134,192.5 1136,193.6 1138,195.3 1140,194.0 1142,193.2 1144,192.4 1146,189.7 1148,192.4 1150,192.3 1152,190.2 1154,192.3 1156,192.5 1158,193.2 1160,191.0 1162,191.1 1164,192.5 1166,191.6 1168,190.8 1170,190.5 1172,189.3 1174,188.4 1176,188.1 1178,189.4 1180,191.1 1182,190.9 1184,190.3 1186,191.6 1188,190.5 1190,192.4 1192,189.9 1194,191.1 1196,191.8 1198,190.7 1200,192.3 1202,190.2 1204,192.6 1206,192.3 1208,193.7 1210,193.6 1212,191.9 1214,194.8 1216,192.4 1218,194.0 1220,193.6 1222,195.0 1224,194.1 1226,195.2 1228,192.6 1230,195.4 1232,193.5 1234,193.0 1236,194.2 1238,194.1 1240,194.9 1242,193.1 1244,194.1 1246,194.1 1248,196.1 1250,195.4 1252,195.7 1254,195.5 1256,196.3 1258,195.4 1260,195.8" fill="none" stroke="#ff1a10" stroke-width="1.05" stroke-opacity="0.75"/>
<polyline points="767.5,138.4 769.0,138.4 770.5,138.3 772.0,138.4 773.5,138.4 775.0,138.2 776.5,138.2 778.0,138.2 779.5,138.3 781.0,138.3 782.5,138.4 784.0,138.2 785.5,138.3 787.0,138.3 788.5,138.3 790.0,138.3 791.5,138.2 793.0,138.4 794.5,138.4 796.0,138.2 797.5,138.4 799.0,138.2 800.5,138.2 802.0,138.3 803.5,138.3 805.0,138.3 806.5,138.4 808.0,138.4 809.5,138.4 811.0,138.3 812.5,138.3 814.0,138.3 815.5,138.4 817.0,138.3 818.5,138.4 820.0,138.2 821.5,138.2 823.0,138.3 824.5,138.2 826.0,138.2 827.5,138.3 829.0,138.3 830.5,138.2 832.0,138.3 833.5,138.2 835.0,138.2 836.5,138.4 838.0,138.2 839.5,138.2 841.0,138.4 842.5,138.3 844.0,138.2 845.5,138.2 847.0,138.2 848.5,138.3 850.0,138.4 851.5,138.4 853.0,138.2 854.5,138.4 856.0,138.4 857.5,138.4 859.0,138.4 860.5,138.3 862.0,138.2 863.5,138.4 865.0,138.4 866.5,138.3 868.0,138.2 869.5,138.4 871.0,138.2 872.5,138.2 874.0,138.3 875.5,138.3 877.0,138.3 878.5,138.3 880.0,138.4 881.5,138.3 883.0,138.3 884.5,138.4 886.0,138.3 887.5,138.3 889.0,138.4 890.5,138.3 892.0,138.3 893.5,138.3 895.0,138.3 896.5,138.2 898.0,138.2 899.5,138.3 901.0,138.4 902.5,138.4 904.0,138.2 905.5,138.3 907.0,138.2 908.5,138.2 910.0,138.6 911.5,139.2 913.0,139.5 914.5,139.9 916.0,140.4 917.5,140.9 919.0,141.4 920.5,141.9 922.0,142.3 923.5,142.9 925.0,143.2 926.5,143.9 928.0,144.8 929.5,145.3 931.0,146.0 932.5,146.8 934.0,147.5 935.5,148.1 937.0,149.0 938.5,149.7 940.0,150.4 941.5,148.5 943.0,143.6 944.5,136.7 946.0,129.6 947.5,123.8 949.0,120.9 950.5,121.4 952.0,123.8 953.5,125.3 955.0,123.2 956.5,120.7 958.0,122.9 959.5,128.5 961.0,135.1 962.5,140.8 964.0,142.9 965.5,132.6 967.0,119.4 968.5,119.5 970.0,122.7 971.5,127.6 973.0,133.5 974.5,139.5 976.0,144.7 977.5,148.1 979.0,149.2 980.5,149.1 982.0,148.2 983.5,147.2 985.0,146.0 986.5,144.6 988.0,143.7 989.5,143.2 991.0,143.1 992.5,142.8 994.0,142.2 995.5,141.1 997.0,140.1 998.5,139.3 1000.0,138.7 1001.5,138.2 1003.0,138.4 1004.5,138.4 1006.0,138.3 1007.5,138.3 1009.0,138.3 1010.5,138.2 1012.0,138.3 1013.5,138.3 1015.0,138.4 1016.5,138.4 1018.0,138.3 1019.5,138.4 1021.0,138.3 1022.5,138.3 1024.0,138.2 1025.5,138.3 1027.0,138.3 1028.5,138.4 1030.0,138.2 1031.5,138.2 1033.0,138.3 1034.5,138.4 1036.0,138.4 1037.5,138.2 1039.0,138.4 1040.5,138.4 1042.0,138.4 1043.5,138.3 1045.0,138.2 1046.5,138.2 1048.0,138.2 1049.5,138.4 1051.0,138.3 1052.5,138.3 1054.0,138.3 1055.5,138.3 1057.0,138.3 1058.5,138.3 1060.0,138.4 1061.5,138.3 1063.0,138.4 1064.5,138.3 1066.0,138.3 1067.5,138.3 1069.0,138.3 1070.5,138.4 1072.0,138.2 1073.5,138.4 1075.0,138.3 1076.5,138.3 1078.0,138.3 1079.5,138.3 1081.0,138.3 1082.5,138.4 1084.0,138.4 1085.5,138.4 1087.0,138.3 1088.5,138.3 1090.0,138.3 1091.5,138.4 1093.0,138.4 1094.5,138.4 1096.0,138.4 1097.5,138.3 1099.0,138.4 1100.5,138.2 1102.0,138.2 1103.5,138.2 1105.0,138.3 1106.5,138.3 1108.0,138.3 1109.5,138.2 1111.0,138.3 1112.5,138.3 1114.0,138.3 1115.5,138.2 1117.0,138.3 1118.5,138.4 1120.0,138.2 1121.5,138.3 1123.0,138.3 1124.5,138.4 1126.0,138.3 1127.5,138.4 1129.0,138.3 1130.5,138.3 1132.0,138.2 1133.5,138.3 1135.0,138.4 1136.5,138.4 1138.0,138.4 1139.5,138.2 1141.0,138.3 1142.5,138.3 1144.0,138.3 1145.5,138.4 1147.0,138.4 1148.5,138.3 1150.0,138.4 1151.5,138.2 1153.0,138.3 1154.5,138.2 1156.0,138.4 1157.5,138.3 1159.0,138.3 1160.5,138.3 1162.0,138.3 1163.5,138.2 1165.0,138.4 1166.5,138.2 1168.0,138.3 1169.5,138.3 1171.0,138.3 1172.5,138.2 1174.0,138.4 1175.5,138.2 1177.0,138.2 1178.5,138.4 1180.0,138.4 1181.5,138.4 1183.0,138.4 1184.5,138.2 1186.0,138.3 1187.5,138.4 1189.0,138.3 1190.5,138.4 1192.0,138.4 1193.5,138.2 1195.0,138.4 1196.5,138.4 1198.0,138.2 1199.5,138.2 1201.0,138.2 1202.5,138.2 1204.0,138.2 1205.5,138.2 1207.0,138.3 1208.5,138.4 1210.0,138.3 1211.5,138.4 1213.0,138.2 1214.5,138.3 1216.0,138.4 1217.5,138.2 1219.0,138.4 1220.5,138.4 1222.0,138.3 1223.5,138.3 1225.0,138.3 1226.5,138.3 1228.0,138.3 1229.5,138.4 1231.0,138.3 1232.5,138.3 1234.0,138.4 1235.5,138.4 1237.0,138.3 1238.5,138.2 1240.0,138.2 1241.5,138.3 1243.0,138.4 1244.5,138.4 1246.0,138.4 1247.5,138.3 1249.0,138.2 1250.5,138.4 1252.0,138.2 1253.5,138.3 1255.0,138.3 1256.5,138.3 1258.0,138.3 1259.5,138.3" fill="none" stroke="#d0d0d0" stroke-width="1.3"/>
<line x1="908.8" y1="132" x2="908.8" y2="146" stroke="#3aa8a0" stroke-width="1.1"/>
<line x1="1002.2" y1="132" x2="1002.2" y2="146" stroke="#3aa8a0" stroke-width="1.1"/>
<rect x="769.5" y="205.5" width="7.5" height="7.5" fill="#fff"/>
<path d="M1243 202l4-3v1.8h5v2.4h-5v1.8z" fill="#5a8a80"/>
</svg>
<div class="t" style="left:906.44px;top:121.62px;font-size:8.5px;color:#3aa8a0;">1</div>
<div class="t" style="left:999.84px;top:121.62px;font-size:8.5px;color:#3aa8a0;">2</div>
<div class="t" style="left:789.00px;top:109.20px;font-size:11px;color:#f0f0f0;letter-spacing:-0.507px;">100μV</div>
<svg style="left:771px;top:108px" width="64" height="12" viewBox="0 0 64 12">
<path d="M2 5.5h2.5v-4h5v4h2.5l-5 5z" fill="none" stroke="#2a9a8a" stroke-width="1.2"/>
<path d="M52 6.5h2.5v4h5v-4h2.5l-5-5z" fill="none" stroke="#2a9a8a" stroke-width="1.2"/></svg>
<div class="t" style="left:1198.50px;top:109.20px;font-size:11px;color:#f0f0f0;letter-spacing:0.109px;">5ms</div>
<svg style="left:1180px;top:108px" width="58" height="12" viewBox="0 0 58 12">
<path d="M2 6l5-5v2.5h3.5v5h-3.5v2.5z" fill="none" stroke="#2a9a8a" stroke-width="1.2"/>
<path d="M55 6l-5-5v2.5h-3.5v5h3.5v2.5z" fill="none" stroke="#2a9a8a" stroke-width="1.2"/></svg>
<div class="a" style="left:767px;top:214px;width:508px;height:18px;background:#fff"></div>
<div class="t" style="left:768.50px;top:218.70px;font-size:9px;color:#9a9a9a;transform:scaleX(0.9282);transform-origin:0 0;">Results Table</div>
<svg style="left:1232px;top:216px" width="12" height="12" viewBox="0 0 12 12"><path d="M2 1.5l2 2-1 1-2-2q-0.5 2.5 1.5 3.5l1 0 5 5 1.5-1.5-5-5 0-1q-1-2-3-2z" fill="#bbb" stroke="#888" stroke-width=".7"/></svg>
<div class="a" style="left:1257.5px;top:217.5px;width:9px;height:9px;background:#fff;border:1px solid #999"></div>
<div class="a" style="left:1274px;top:105px;width:1px;height:520px;background:#d0dce6"></div>
<div class="a" style="left:767px;top:625px;width:508px;height:1px;background:#dcdcdc"></div>
<div class="t" style="left:950.00px;top:238.93px;font-size:10.5px;color:#222;letter-spacing:-0.382px;">L Deltoid</div>
<svg style="left:0;top:0" width="1280" height="720" viewBox="0 0 1280 720">
<rect x="772.5" y="254.4" width="394.5" height="21.900000000000006" fill="#bdd3ea"/>
<rect x="772.5" y="276.3" width="394.5" height="321.2" fill="#f0f0f0"/>
<rect x="878" y="276.30" width="41.40" height="14.60" fill="#ffff00"/>
<rect x="919.4" y="276.30" width="40.90" height="14.60" fill="#ffff00"/>
<rect x="878" y="290.90" width="41.40" height="14.60" fill="#ffff00"/>
<rect x="919.4" y="290.90" width="40.90" height="14.60" fill="#ffff00"/>
<rect x="878" y="334.70" width="41.40" height="14.60" fill="#80ea80"/>
<rect x="919.4" y="334.70" width="40.90" height="14.60" fill="#80ea80"/>
<rect x="878" y="349.30" width="41.40" height="14.60" fill="#ffff00"/>
<rect x="919.4" y="349.30" width="40.90" height="14.60" fill="#80ea80"/>
<rect x="878" y="363.90" width="41.40" height="14.60" fill="#ffff00"/>
<rect x="919.4" y="363.90" width="40.90" height="14.60" fill="#ffff00"/>
<rect x="878" y="378.50" width="41.40" height="14.60" fill="#80ea80"/>
<rect x="919.4" y="378.50" width="40.90" height="14.60" fill="#80ea80"/>
<rect x="878" y="393.10" width="41.40" height="14.60" fill="#80ea80"/>
<rect x="919.4" y="393.10" width="40.90" height="14.60" fill="#80ea80"/>
<rect x="878" y="407.70" width="41.40" height="14.60" fill="#80ea80"/>
<rect x="919.4" y="407.70" width="40.90" height="14.60" fill="#80ea80"/>
<rect x="878" y="422.30" width="41.40" height="14.60" fill="#ffff00"/>
<rect x="919.4" y="422.30" width="40.90" height="14.60" fill="#80ea80"/>
<rect x="878" y="436.90" width="41.40" height="14.60" fill="#80ea80"/>
<rect x="919.4" y="436.90" width="40.90" height="14.60" fill="#80ea80"/>
<rect x="878" y="451.50" width="41.40" height="14.60" fill="#80ea80"/>
<rect x="919.4" y="451.50" width="40.90" height="14.60" fill="#80ea80"/>
<rect x="878" y="466.10" width="41.40" height="14.60" fill="#80ea80"/>
<rect x="919.4" y="466.10" width="40.90" height="14.60" fill="#ffff00"/>
<rect x="878" y="480.70" width="41.40" height="14.60" fill="#80ea80"/>
<rect x="919.4" y="480.70" width="40.90" height="14.60" fill="#80ea80"/>
<rect x="878" y="495.30" width="41.40" height="14.60" fill="#80ea80"/>
<rect x="919.4" y="495.30" width="40.90" height="14.60" fill="#80ea80"/>
<rect x="878" y="509.90" width="41.40" height="14.60" fill="#80ea80"/>
<rect x="919.4" y="509.90" width="40.90" height="14.60" fill="#80ea80"/>
<rect x="878" y="524.50" width="41.40" height="14.60" fill="#ffff00"/>
<rect x="919.4" y="524.50" width="40.90" height="14.60" fill="#80ea80"/>
<rect x="878" y="539.10" width="41.40" height="14.60" fill="#80ea80"/>
<rect x="919.4" y="539.10" width="40.90" height="14.60" fill="#80ea80"/>
<rect x="878" y="553.70" width="41.40" height="14.60" fill="#80ea80"/>
<rect x="919.4" y="553.70" width="40.90" height="14.60" fill="#80ea80"/>
<rect x="878" y="568.30" width="41.40" height="14.60" fill="#80ea80"/>
<rect x="919.4" y="568.30" width="40.90" height="14.60" fill="#80ea80"/>
<rect x="878" y="582.90" width="41.40" height="14.60" fill="#80ea80"/>
<rect x="919.4" y="582.90" width="40.90" height="14.60" fill="#80ea80"/>
<path d="M772.5 276.30H1167 M772.5 290.90H1167 M772.5 305.50H1167 M772.5 320.10H1167 M772.5 334.70H1167 M772.5 349.30H1167 M772.5 363.90H1167 M772.5 378.50H1167 M772.5 393.10H1167 M772.5 407.70H1167 M772.5 422.30H1167 M772.5 436.90H1167 M772.5 451.50H1167 M772.5 466.10H1167 M772.5 480.70H1167 M772.5 495.30H1167 M772.5 509.90H1167 M772.5 524.50H1167 M772.5 539.10H1167 M772.5 553.70H1167 M772.5 568.30H1167 M772.5 582.90H1167 M772.5 597.50H1167 M772.5 254.4H1167 M772.5 254.4V597.50 M837 254.4V597.50 M878 254.4V597.50 M919.4 254.4V597.50 M960.3 254.4V597.50 M1001.9 254.4V597.50 M1043.3 254.4V597.50 M1084.5 254.4V597.50 M1125.6 254.4V597.50 M1167 254.4V597.50" stroke="#9a9a9a" stroke-width="1.1" fill="none"/>
<path d="M772.5 276.3H1167" stroke="#8a9aaa" stroke-width="1.2"/>
<rect x="772.5" y="539.10" width="394.5" height="58.40" fill="none" stroke="#1c1c80" stroke-width="2"/>
</svg>
<div class="t" style="left:843.00px;top:262.12px;font-size:8.5px;color:#1f3858;letter-spacing:-0.248px;">Sweeps</div>
<div class="t" style="left:880.70px;top:256.62px;font-size:8.5px;color:#1f3858;letter-spacing:-0.225px;">Amplitude</div>
<div class="t" style="left:893.42px;top:266.62px;font-size:8.5px;color:#1f3858;">μV</div>
<div class="t" style="left:924.60px;top:256.62px;font-size:8.5px;color:#1f3858;letter-spacing:-0.233px;">Duration</div>
<div class="t" style="left:934.18px;top:266.62px;font-size:8.5px;color:#1f3858;">ms</div>
<div class="t" style="left:967.10px;top:262.12px;font-size:8.5px;color:#1f3858;letter-spacing:-0.070px;">Phases</div>
<div class="t" style="left:1012.10px;top:262.12px;font-size:8.5px;color:#1f3858;letter-spacing:-0.103px;">Turns</div>
<div class="t" style="left:1046.40px;top:262.12px;font-size:8.5px;color:#1f3858;letter-spacing:-0.399px;">Area/Amp</div>
<div class="t" style="left:1096.55px;top:257.12px;font-size:8.5px;color:#1f3858;letter-spacing:-0.318px;">Rate</div>
<div class="t" style="left:1099.86px;top:266.62px;font-size:8.5px;color:#1f3858;">Hz</div>
<div class="t" style="left:1128.80px;top:262.12px;font-size:8.5px;color:#1f3858;letter-spacing:-0.290px;">Rec Ratio</div>
<div class="t" style="left:774.30px;top:279.50px;font-size:9px;color:#222;transform:scaleX(0.8635);transform-origin:0 0;">Mean ALL</div>
<div class="t" style="left:892.88px;top:278.85px;font-size:10px;color:#111;font-weight:700;letter-spacing:-0.250px;">271.9</div>
<div class="t" style="left:939.12px;top:278.85px;font-size:10px;color:#111;font-weight:700;letter-spacing:-0.260px;">7.56</div>
<div class="t" style="left:986.05px;top:278.85px;font-size:10px;color:#222;letter-spacing:-0.278px;">3.4</div>
<div class="t" style="left:1027.45px;top:278.85px;font-size:10px;color:#222;letter-spacing:-0.278px;">2.7</div>
<div class="t" style="left:1063.32px;top:278.85px;font-size:10px;color:#222;letter-spacing:-0.260px;">1.25</div>
<div class="t" style="left:1112.42px;top:278.85px;font-size:10px;color:#222;letter-spacing:-0.445px;">10</div>
<div class="t" style="left:774.30px;top:294.10px;font-size:9px;color:#222;transform:scaleX(0.8703);transform-origin:0 0;">Mean SIMPLE</div>
<div class="t" style="left:892.88px;top:293.45px;font-size:10px;color:#111;font-weight:700;letter-spacing:-0.250px;">276.9</div>
<div class="t" style="left:939.12px;top:293.45px;font-size:10px;color:#111;font-weight:700;letter-spacing:-0.260px;">6.68</div>
<div class="t" style="left:986.05px;top:293.45px;font-size:10px;color:#222;letter-spacing:-0.278px;">2.7</div>
<div class="t" style="left:1027.45px;top:293.45px;font-size:10px;color:#222;letter-spacing:-0.278px;">2.3</div>
<div class="t" style="left:1063.32px;top:293.45px;font-size:10px;color:#222;letter-spacing:-0.260px;">1.09</div>
<div class="t" style="left:1112.42px;top:293.45px;font-size:10px;color:#222;letter-spacing:-0.445px;">10</div>
<div class="t" style="left:774.30px;top:308.69px;font-size:9px;color:#222;transform:scaleX(0.9128);transform-origin:0 0;">Total MUPs</div>
<div class="t" style="left:864.82px;top:308.05px;font-size:10px;color:#222;letter-spacing:-0.445px;">18</div>
<div class="t" style="left:774.30px;top:323.30px;font-size:9px;color:#222;transform:scaleX(0.9218);transform-origin:0 0;">%Polyphasic</div>
<div class="t" style="left:856.29px;top:322.65px;font-size:10px;color:#222;letter-spacing:-0.400px;">28%</div>
<div class="t" style="left:798.70px;top:338.15px;font-size:8.7px;color:#333;">1.1</div>
<div class="t" style="left:864.82px;top:337.25px;font-size:10px;color:#222;letter-spacing:-0.445px;">87</div>
<div class="t" style="left:892.88px;top:337.25px;font-size:10px;color:#111;font-weight:700;letter-spacing:-0.250px;">284.5</div>
<div class="t" style="left:939.12px;top:337.25px;font-size:10px;color:#111;font-weight:700;letter-spacing:-0.260px;">5.31</div>
<div class="t" style="left:993.84px;top:337.25px;font-size:10px;color:#222;">4</div>
<div class="t" style="left:1035.24px;top:337.25px;font-size:10px;color:#222;">2</div>
<div class="t" style="left:1063.32px;top:337.25px;font-size:10px;color:#222;letter-spacing:-0.260px;">0.69</div>
<div class="t" style="left:1112.42px;top:337.25px;font-size:10px;color:#222;letter-spacing:-0.445px;">13</div>
<div class="t" style="left:1151.15px;top:337.25px;font-size:10px;color:#222;letter-spacing:-0.278px;">4.4</div>
<div class="t" style="left:798.70px;top:352.75px;font-size:8.7px;color:#333;">1.2</div>
<div class="t" style="left:864.82px;top:351.85px;font-size:10px;color:#222;letter-spacing:-0.445px;">57</div>
<div class="t" style="left:892.88px;top:351.85px;font-size:10px;color:#111;font-weight:700;letter-spacing:-0.250px;">101.6</div>
<div class="t" style="left:939.12px;top:351.85px;font-size:10px;color:#111;font-weight:700;letter-spacing:-0.260px;">6.25</div>
<div class="t" style="left:993.84px;top:351.85px;font-size:10px;color:#222;">2</div>
<div class="t" style="left:1035.24px;top:351.85px;font-size:10px;color:#222;">2</div>
<div class="t" style="left:1063.32px;top:351.85px;font-size:10px;color:#222;letter-spacing:-0.260px;">1.48</div>
<div class="t" style="left:1112.42px;top:351.85px;font-size:10px;color:#222;letter-spacing:-0.445px;">12</div>
<div class="t" style="left:798.70px;top:367.35px;font-size:8.7px;color:#333;">1.3</div>
<div class="t" style="left:864.82px;top:366.45px;font-size:10px;color:#222;letter-spacing:-0.445px;">55</div>
<div class="t" style="left:892.88px;top:366.45px;font-size:10px;color:#111;font-weight:700;letter-spacing:-0.250px;">143.7</div>
<div class="t" style="left:939.12px;top:366.45px;font-size:10px;color:#111;font-weight:700;letter-spacing:-0.260px;">4.17</div>
<div class="t" style="left:993.84px;top:366.45px;font-size:10px;color:#222;">2</div>
<div class="t" style="left:1035.24px;top:366.45px;font-size:10px;color:#222;">2</div>
<div class="t" style="left:1063.32px;top:366.45px;font-size:10px;color:#222;letter-spacing:-0.260px;">0.95</div>
<div class="t" style="left:1113.13px;top:366.45px;font-size:10px;color:#222;letter-spacing:-0.415px;">11</div>
<div class="t" style="left:798.70px;top:381.95px;font-size:8.7px;color:#333;">2.1</div>
<div class="t" style="left:860.19px;top:381.05px;font-size:10px;color:#222;letter-spacing:-0.319px;">110</div>
<div class="t" style="left:892.88px;top:381.05px;font-size:10px;color:#111;font-weight:700;letter-spacing:-0.250px;">745.8</div>
<div class="t" style="left:933.78px;top:381.05px;font-size:10px;color:#111;font-weight:700;letter-spacing:-0.250px;">12.50</div>
<div class="t" style="left:993.84px;top:381.05px;font-size:10px;color:#222;">3</div>
<div class="t" style="left:1035.24px;top:381.05px;font-size:10px;color:#222;">3</div>
<div class="t" style="left:1064.03px;top:381.05px;font-size:10px;color:#222;letter-spacing:-0.250px;">1.11</div>
<div class="t" style="left:1112.42px;top:381.05px;font-size:10px;color:#222;letter-spacing:-0.445px;">12</div>
<div class="t" style="left:1151.15px;top:381.05px;font-size:10px;color:#222;letter-spacing:-0.278px;">2.0</div>
<div class="t" style="left:798.70px;top:396.55px;font-size:8.7px;color:#333;">2.2</div>
<div class="t" style="left:864.82px;top:395.65px;font-size:10px;color:#222;letter-spacing:-0.445px;">64</div>
<div class="t" style="left:892.88px;top:395.65px;font-size:10px;color:#111;font-weight:700;letter-spacing:-0.250px;">364.8</div>
<div class="t" style="left:939.12px;top:395.65px;font-size:10px;color:#111;font-weight:700;letter-spacing:-0.260px;">8.39</div>
<div class="t" style="left:993.84px;top:395.65px;font-size:10px;color:#222;">2</div>
<div class="t" style="left:1035.24px;top:395.65px;font-size:10px;color:#222;">2</div>
<div class="t" style="left:1063.32px;top:395.65px;font-size:10px;color:#222;letter-spacing:-0.260px;">1.24</div>
<div class="t" style="left:1112.42px;top:395.65px;font-size:10px;color:#222;letter-spacing:-0.445px;">10</div>
<div class="t" style="left:798.70px;top:411.15px;font-size:8.7px;color:#333;">2.3</div>
<div class="t" style="left:864.82px;top:410.25px;font-size:10px;color:#222;letter-spacing:-0.445px;">64</div>
<div class="t" style="left:892.88px;top:410.25px;font-size:10px;color:#111;font-weight:700;letter-spacing:-0.250px;">384.0</div>
<div class="t" style="left:939.12px;top:410.25px;font-size:10px;color:#111;font-weight:700;letter-spacing:-0.260px;">6.56</div>
<div class="t" style="left:993.84px;top:410.25px;font-size:10px;color:#222;">3</div>
<div class="t" style="left:1035.24px;top:410.25px;font-size:10px;color:#222;">3</div>
<div class="t" style="left:1068.65px;top:410.25px;font-size:10px;color:#222;letter-spacing:-0.278px;">1.5</div>
<div class="t" style="left:1112.42px;top:410.25px;font-size:10px;color:#222;letter-spacing:-0.445px;">12</div>
<div class="t" style="left:798.70px;top:425.75px;font-size:8.7px;color:#333;">2.4</div>
<div class="t" style="left:864.82px;top:424.85px;font-size:10px;color:#222;letter-spacing:-0.445px;">55</div>
<div class="t" style="left:892.88px;top:424.85px;font-size:10px;color:#111;font-weight:700;letter-spacing:-0.250px;">133.2</div>
<div class="t" style="left:939.12px;top:424.85px;font-size:10px;color:#111;font-weight:700;letter-spacing:-0.260px;">6.20</div>
<div class="t" style="left:993.84px;top:424.85px;font-size:10px;color:#222;">2</div>
<div class="t" style="left:1035.24px;top:424.85px;font-size:10px;color:#222;">2</div>
<div class="t" style="left:1063.32px;top:424.85px;font-size:10px;color:#222;letter-spacing:-0.260px;">0.92</div>
<div class="t" style="left:1112.42px;top:424.85px;font-size:10px;color:#222;letter-spacing:-0.445px;">10</div>
<div class="t" style="left:798.70px;top:440.35px;font-size:8.7px;color:#333;">2.5</div>
<div class="t" style="left:864.82px;top:439.45px;font-size:10px;color:#222;letter-spacing:-0.445px;">43</div>
<div class="t" style="left:892.88px;top:439.45px;font-size:10px;color:#111;font-weight:700;letter-spacing:-0.250px;">193.8</div>
<div class="t" style="left:939.12px;top:439.45px;font-size:10px;color:#111;font-weight:700;letter-spacing:-0.260px;">8.75</div>
<div class="t" style="left:993.84px;top:439.45px;font-size:10px;color:#222;">5</div>
<div class="t" style="left:1035.24px;top:439.45px;font-size:10px;color:#222;">2</div>
<div class="t" style="left:1063.32px;top:439.45px;font-size:10px;color:#222;letter-spacing:-0.260px;">1.16</div>
<div class="t" style="left:1117.54px;top:439.45px;font-size:10px;color:#222;">5</div>
<div class="t" style="left:798.70px;top:454.95px;font-size:8.7px;color:#333;">2.6</div>
<div class="t" style="left:864.82px;top:454.05px;font-size:10px;color:#222;letter-spacing:-0.445px;">40</div>
<div class="t" style="left:892.88px;top:454.05px;font-size:10px;color:#111;font-weight:700;letter-spacing:-0.250px;">207.1</div>
<div class="t" style="left:939.12px;top:454.05px;font-size:10px;color:#111;font-weight:700;letter-spacing:-0.260px;">4.95</div>
<div class="t" style="left:993.84px;top:454.05px;font-size:10px;color:#222;">3</div>
<div class="t" style="left:1035.24px;top:454.05px;font-size:10px;color:#222;">2</div>
<div class="t" style="left:1063.32px;top:454.05px;font-size:10px;color:#222;letter-spacing:-0.260px;">1.07</div>
<div class="t" style="left:1117.54px;top:454.05px;font-size:10px;color:#222;">6</div>
<div class="t" style="left:798.70px;top:469.55px;font-size:8.7px;color:#333;">3.1</div>
<div class="t" style="left:864.82px;top:468.65px;font-size:10px;color:#222;letter-spacing:-0.445px;">91</div>
<div class="t" style="left:892.88px;top:468.65px;font-size:10px;color:#111;font-weight:700;letter-spacing:-0.250px;">208.9</div>
<div class="t" style="left:939.12px;top:468.65px;font-size:10px;color:#111;font-weight:700;letter-spacing:-0.260px;">3.75</div>
<div class="t" style="left:993.84px;top:468.65px;font-size:10px;color:#222;">3</div>
<div class="t" style="left:1035.24px;top:468.65px;font-size:10px;color:#222;">4</div>
<div class="t" style="left:1063.32px;top:468.65px;font-size:10px;color:#222;letter-spacing:-0.260px;">0.81</div>
<div class="t" style="left:1112.42px;top:468.65px;font-size:10px;color:#222;letter-spacing:-0.445px;">10</div>
<div class="t" style="left:1151.15px;top:468.65px;font-size:10px;color:#222;letter-spacing:-0.278px;">2.1</div>
<div class="t" style="left:798.70px;top:484.15px;font-size:8.7px;color:#333;">3.2</div>
<div class="t" style="left:864.82px;top:483.25px;font-size:10px;color:#222;letter-spacing:-0.445px;">70</div>
<div class="t" style="left:892.88px;top:483.25px;font-size:10px;color:#111;font-weight:700;letter-spacing:-0.250px;">271.8</div>
<div class="t" style="left:939.12px;top:483.25px;font-size:10px;color:#111;font-weight:700;letter-spacing:-0.260px;">7.19</div>
<div class="t" style="left:993.84px;top:483.25px;font-size:10px;color:#222;">3</div>
<div class="t" style="left:1035.24px;top:483.25px;font-size:10px;color:#222;">2</div>
<div class="t" style="left:1063.32px;top:483.25px;font-size:10px;color:#222;letter-spacing:-0.260px;">0.65</div>
<div class="t" style="left:1112.42px;top:483.25px;font-size:10px;color:#222;letter-spacing:-0.445px;">10</div>
<div class="t" style="left:798.70px;top:498.75px;font-size:8.7px;color:#333;">3.3</div>
<div class="t" style="left:864.82px;top:497.85px;font-size:10px;color:#222;letter-spacing:-0.445px;">70</div>
<div class="t" style="left:892.88px;top:497.85px;font-size:10px;color:#111;font-weight:700;letter-spacing:-0.250px;">205.6</div>
<div class="t" style="left:934.31px;top:497.85px;font-size:10px;color:#111;font-weight:700;letter-spacing:-0.245px;">11.15</div>
<div class="t" style="left:993.84px;top:497.85px;font-size:10px;color:#222;">6</div>
<div class="t" style="left:1035.24px;top:497.85px;font-size:10px;color:#222;">4</div>
<div class="t" style="left:1063.32px;top:497.85px;font-size:10px;color:#222;letter-spacing:-0.260px;">1.85</div>
<div class="t" style="left:1112.42px;top:497.85px;font-size:10px;color:#222;letter-spacing:-0.445px;">10</div>
<div class="t" style="left:798.70px;top:513.35px;font-size:8.7px;color:#333;">3.4</div>
<div class="t" style="left:864.82px;top:512.45px;font-size:10px;color:#222;letter-spacing:-0.445px;">52</div>
<div class="t" style="left:892.88px;top:512.45px;font-size:10px;color:#111;font-weight:700;letter-spacing:-0.250px;">283.1</div>
<div class="t" style="left:939.12px;top:512.45px;font-size:10px;color:#111;font-weight:700;letter-spacing:-0.260px;">8.75</div>
<div class="t" style="left:993.84px;top:512.45px;font-size:10px;color:#222;">3</div>
<div class="t" style="left:1035.24px;top:512.45px;font-size:10px;color:#222;">2</div>
<div class="t" style="left:1063.32px;top:512.45px;font-size:10px;color:#222;letter-spacing:-0.260px;">0.91</div>
<div class="t" style="left:1117.54px;top:512.45px;font-size:10px;color:#222;">7</div>
<div class="t" style="left:798.70px;top:527.95px;font-size:8.7px;color:#333;">3.5</div>
<div class="t" style="left:864.82px;top:527.05px;font-size:10px;color:#222;letter-spacing:-0.445px;">19</div>
<div class="t" style="left:892.88px;top:527.05px;font-size:10px;color:#111;font-weight:700;letter-spacing:-0.250px;">147.5</div>
<div class="t" style="left:939.12px;top:527.05px;font-size:10px;color:#111;font-weight:700;letter-spacing:-0.260px;">6.09</div>
<div class="t" style="left:993.84px;top:527.05px;font-size:10px;color:#222;">2</div>
<div class="t" style="left:1035.24px;top:527.05px;font-size:10px;color:#222;">2</div>
<div class="t" style="left:1063.32px;top:527.05px;font-size:10px;color:#222;letter-spacing:-0.260px;">1.33</div>
<div class="t" style="left:1117.54px;top:527.05px;font-size:10px;color:#222;">5</div>
<div class="t" style="left:798.70px;top:542.55px;font-size:8.7px;color:#333;">4.1</div>
<div class="t" style="left:864.82px;top:541.65px;font-size:10px;color:#222;letter-spacing:-0.445px;">51</div>
<div class="t" style="left:892.88px;top:541.65px;font-size:10px;color:#111;font-weight:700;letter-spacing:-0.250px;">295.1</div>
<div class="t" style="left:939.12px;top:541.65px;font-size:10px;color:#111;font-weight:700;letter-spacing:-0.260px;">9.48</div>
<div class="t" style="left:993.84px;top:541.65px;font-size:10px;color:#222;">5</div>
<div class="t" style="left:1035.24px;top:541.65px;font-size:10px;color:#222;">5</div>
<div class="t" style="left:1063.32px;top:541.65px;font-size:10px;color:#222;letter-spacing:-0.260px;">2.37</div>
<div class="t" style="left:1112.42px;top:541.65px;font-size:10px;color:#222;letter-spacing:-0.445px;">10</div>
<div class="t" style="left:798.70px;top:557.15px;font-size:8.7px;color:#333;">4.2</div>
<div class="t" style="left:864.82px;top:556.25px;font-size:10px;color:#222;letter-spacing:-0.445px;">41</div>
<div class="t" style="left:892.88px;top:556.25px;font-size:10px;color:#111;font-weight:700;letter-spacing:-0.250px;">199.5</div>
<div class="t" style="left:939.12px;top:556.25px;font-size:10px;color:#111;font-weight:700;letter-spacing:-0.260px;">7.24</div>
<div class="t" style="left:993.84px;top:556.25px;font-size:10px;color:#222;">5</div>
<div class="t" style="left:1035.24px;top:556.25px;font-size:10px;color:#222;">5</div>
<div class="t" style="left:1063.32px;top:556.25px;font-size:10px;color:#222;letter-spacing:-0.260px;">1.46</div>
<div class="t" style="left:1113.13px;top:556.25px;font-size:10px;color:#222;letter-spacing:-0.415px;">11</div>
<div class="t" style="left:798.70px;top:571.75px;font-size:8.7px;color:#333;">4.3</div>
<div class="t" style="left:864.82px;top:570.85px;font-size:10px;color:#222;letter-spacing:-0.445px;">69</div>
<div class="t" style="left:892.88px;top:570.85px;font-size:10px;color:#111;font-weight:700;letter-spacing:-0.250px;">401.5</div>
<div class="t" style="left:933.78px;top:570.85px;font-size:10px;color:#111;font-weight:700;letter-spacing:-0.250px;">12.66</div>
<div class="t" style="left:993.84px;top:570.85px;font-size:10px;color:#222;">5</div>
<div class="t" style="left:1035.24px;top:570.85px;font-size:10px;color:#222;">2</div>
<div class="t" style="left:1063.32px;top:570.85px;font-size:10px;color:#222;letter-spacing:-0.260px;">1.52</div>
<div class="t" style="left:1117.54px;top:570.85px;font-size:10px;color:#222;">8</div>
<div class="t" style="left:798.70px;top:586.35px;font-size:8.7px;color:#333;">4.4</div>
<div class="t" style="left:864.82px;top:585.45px;font-size:10px;color:#222;letter-spacing:-0.445px;">61</div>
<div class="t" style="left:892.88px;top:585.45px;font-size:10px;color:#111;font-weight:700;letter-spacing:-0.250px;">323.3</div>
<div class="t" style="left:939.12px;top:585.45px;font-size:10px;color:#111;font-weight:700;letter-spacing:-0.260px;">6.72</div>
<div class="t" style="left:993.84px;top:585.45px;font-size:10px;color:#222;">3</div>
<div class="t" style="left:1035.24px;top:585.45px;font-size:10px;color:#222;">2</div>
<div class="t" style="left:1063.32px;top:585.45px;font-size:10px;color:#222;letter-spacing:-0.260px;">1.48</div>
<div class="t" style="left:1117.54px;top:585.45px;font-size:10px;color:#222;">9</div>
<div class="t" style="left:1151.15px;top:585.45px;font-size:10px;color:#222;letter-spacing:-0.278px;">2.4</div>
<div class="a" style="left:2px;top:625px;width:1274px;height:76px;background:#f0f0f0"></div>
<div class="a" style="left:2px;top:625px;width:764px;height:1px;background:#e4eef6"></div>
<div class="t" style="left:7.50px;top:631.11px;font-size:17.5px;color:#111;transform:scaleX(0.8073);transform-origin:0 0;">End Visit</div>
<div class="t" style="left:79.00px;top:631.11px;font-size:17.5px;color:#111;transform:scaleX(0.8357);transform-origin:0 0;">Exit Test</div>
<div class="t" style="left:150.00px;top:631.11px;font-size:17.5px;color:#111;transform:scaleX(0.8105);transform-origin:0 0;">Review Prev.</div>
<div class="t" style="left:248.50px;top:631.11px;font-size:17.5px;color:#111;transform:scaleX(0.8145);transform-origin:0 0;">Review Next</div>
<svg style="left:0;top:0" width="1280" height="720" viewBox="0 0 1280 720">
<rect x="4" y="657" width="202.5" height="42" rx="3" fill="none" stroke="#d84848" stroke-width="1.8"/>
<path d="M216.5 674.5V660q0-3 3-3H416.0q3 0 3 3V674.5" fill="none" stroke="#f0f028" stroke-width="1.8"/>
<path d="M216.5 681V696q0 3 3 3H416.0q3 0 3-3V681" fill="none" stroke="#f0f028" stroke-width="1.8"/>
<path d="M429.5 674.5V660q0-3 3-3H629.0q3 0 3 3V674.5" fill="none" stroke="#d848d8" stroke-width="1.8"/>
<path d="M429.5 681V696q0 3 3 3H629.0q3 0 3-3V681" fill="none" stroke="#d848d8" stroke-width="1.8"/>
<rect x="642.5" y="657" width="202.5" height="42" rx="3" fill="none" stroke="#50e050" stroke-width="1.8"/>
<path d="M855.5 674.5V660q0-3 3-3H1055.0q3 0 3 3V674.5" fill="none" stroke="#fbfbfb" stroke-width="1.8"/>
<path d="M855.5 681V696q0 3 3 3H1055.0q3 0 3-3V681" fill="none" stroke="#fbfbfb" stroke-width="1.8"/>
<rect x="1068.5" y="657" width="202.5" height="42" rx="3" fill="none" stroke="#2a2a6a" stroke-width="1.8"/>
</svg>
<div class="t" style="left:77.75px;top:670.67px;font-size:14px;color:#111;letter-spacing:0.294px;">Exit Test</div>
<div class="t" style="left:276.25px;top:659.17px;font-size:14px;color:#111;letter-spacing:0.143px;">Review Prev.</div>
<div class="t" style="left:278.75px;top:680.67px;font-size:14px;color:#111;letter-spacing:-0.058px;">Review Next</div>
<div class="t" style="left:501.75px;top:659.17px;font-size:14px;color:#111;letter-spacing:-0.161px;">Edit MUP</div>
<div class="t" style="left:467.75px;top:680.67px;font-size:14px;color:#777;">Recalc. Recruitment</div>
<div class="t" style="left:716.25px;top:670.67px;font-size:14px;color:#111;letter-spacing:-0.366px;">All MUPs</div>
<div class="t" style="left:934.75px;top:659.17px;font-size:14px;color:#111;letter-spacing:0.029px;">Trigger</div>
<div class="t" style="left:918.25px;top:680.67px;font-size:14px;color:#111;letter-spacing:-0.074px;">Trigger Type</div>
<div class="t" style="left:1131.75px;top:670.67px;font-size:14px;color:#111;letter-spacing:-0.094px;">Print Screen</div>
</body></html>
